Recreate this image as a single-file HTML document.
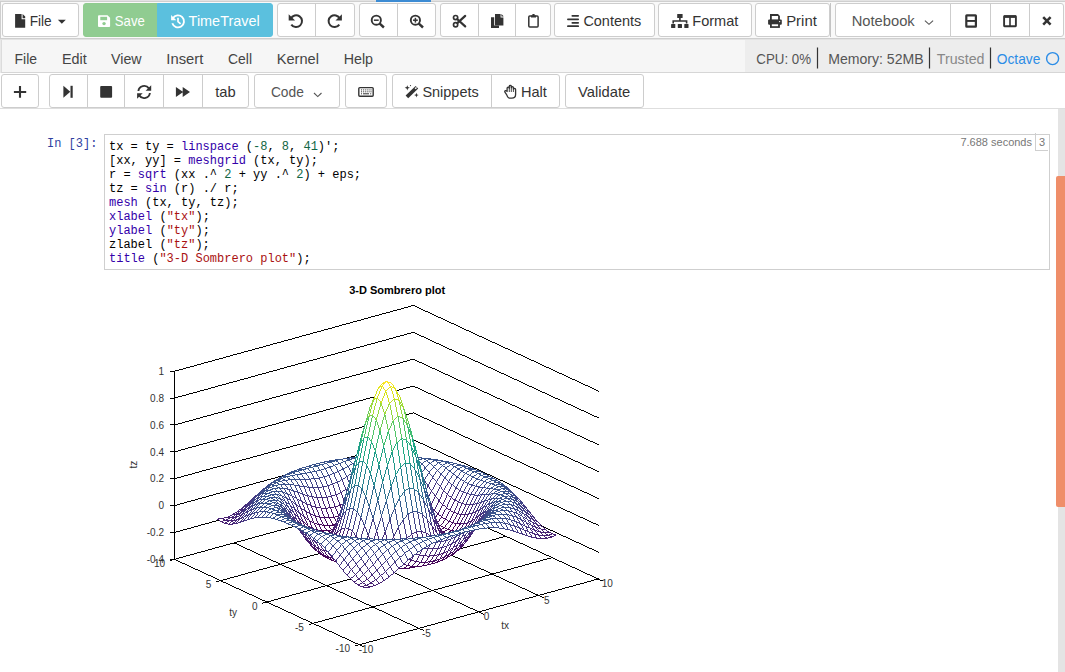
<!DOCTYPE html><html><head><meta charset="utf-8"><style>
*{margin:0;padding:0}
html,body{width:1065px;height:672px;overflow:hidden;background:#fff;position:relative;font-family:"Liberation Sans",sans-serif}
.b{position:absolute;box-sizing:border-box;border:1px solid #cdcdcd;border-radius:3px;background:#fff}
.t{position:absolute;white-space:nowrap;line-height:0}
.prompt{position:absolute;font:12px "Liberation Mono",monospace;color:#303f9f;line-height:16px}
.code{position:absolute;font:12px "Liberation Mono",monospace;color:#000;line-height:14px;white-space:pre}
.code b{font-weight:normal;color:#30a}
.code i{font-style:normal;color:#164}
.code u{text-decoration:none;color:#a11}
</style></head><body><div style="position:absolute;left:0;top:0;width:1065px;height:40px;background:#e3e3e3"></div>
<div style="position:absolute;left:0;top:1px;width:1065px;height:38px;background:#f9f9f9;border-top:1px solid #cfcfcf;border-left:1px solid #cfcfcf;border-bottom:1px solid #cfcfcf;box-sizing:border-box"></div>
<div style="position:absolute;left:376px;top:0;width:55px;height:2px;background:#3c8bd3"></div>
<div class="b" style="left:2px;top:3px;width:77px;height:34px;"></div>
<div class="b" style="left:83px;top:3px;width:75px;height:34px;background:#90cc91;border-color:#8fcb8f;border-radius:3px 0 0 3px"></div>
<div class="b" style="left:157px;top:3px;width:116px;height:34px;background:#5bc0de;border-color:#5bc0de;border-radius:0 3px 3px 0"></div>
<div class="b" style="left:277px;top:3px;width:78px;height:34px;"></div>
<div style="position:absolute;left:315px;top:4px;width:1px;height:32px;background:#ccc"></div>
<div class="b" style="left:359px;top:3px;width:77px;height:34px;"></div>
<div style="position:absolute;left:397px;top:4px;width:1px;height:32px;background:#ccc"></div>
<div class="b" style="left:440px;top:3px;width:111px;height:34px;"></div>
<div style="position:absolute;left:478px;top:4px;width:1px;height:32px;background:#ccc"></div>
<div style="position:absolute;left:515px;top:4px;width:1px;height:32px;background:#ccc"></div>
<div class="b" style="left:554px;top:3px;width:101px;height:34px;"></div>
<div class="b" style="left:658px;top:3px;width:94px;height:34px;"></div>
<div class="b" style="left:755px;top:3px;width:75px;height:34px;"></div>
<div style="position:absolute;left:830px;top:3px;width:1px;height:34px;background:#c4c4c4"></div>
<div class="b" style="left:835px;top:3px;width:116px;height:34px;border-radius:3px 0 0 3px"></div>
<div class="b" style="left:950px;top:3px;width:114px;height:34px;border-radius:0 3px 3px 0"></div>
<div style="position:absolute;left:990px;top:4px;width:1px;height:32px;background:#ccc"></div>
<div style="position:absolute;left:1029px;top:4px;width:1px;height:32px;background:#ccc"></div>
<div style="position:absolute;left:1px;top:40px;width:1064px;height:33px;background:#f6f6f6;border-left:1px solid #dcdcdc;border-bottom:1px solid #d6d6d6;box-sizing:border-box"></div>
<div style="position:absolute;left:0;top:40px;width:1px;height:33px;background:#e9e9e9"></div>
<div style="position:absolute;left:745px;top:40px;width:320px;height:32px;background:#ededed"></div>
<div style="position:absolute;left:0;top:73px;width:1065px;height:36px;background:#fff;border-bottom:1px solid #dedede;box-sizing:border-box"></div>
<div class="b" style="left:1px;top:74px;width:38px;height:34px;"></div>
<div class="b" style="left:49px;top:74px;width:200px;height:34px;"></div>
<div style="position:absolute;left:87px;top:75px;width:1px;height:32px;background:#ccc"></div>
<div style="position:absolute;left:124px;top:75px;width:1px;height:32px;background:#ccc"></div>
<div style="position:absolute;left:163px;top:75px;width:1px;height:32px;background:#ccc"></div>
<div style="position:absolute;left:202px;top:75px;width:1px;height:32px;background:#ccc"></div>
<div class="b" style="left:254px;top:74px;width:86px;height:34px;"></div>
<div class="b" style="left:345px;top:74px;width:42px;height:34px;"></div>
<div class="b" style="left:392px;top:74px;width:168px;height:34px;"></div>
<div style="position:absolute;left:491px;top:75px;width:1px;height:32px;background:#ccc"></div>
<div class="b" style="left:565px;top:74px;width:79px;height:34px;"></div>
<div style="position:absolute;left:1058px;top:109px;width:7px;height:563px;background:#e4e4e4"></div>
<div style="position:absolute;left:1056px;top:176px;width:9px;height:331px;background:#ef8e69;border-radius:2px 0 0 2px"></div>
<div style="position:absolute;left:104px;top:134px;width:946px;height:136px;border:1px solid #cfcfcf;box-sizing:border-box;background:#fff"></div>
<div class="prompt" style="left:47px;top:135.5px">In&nbsp;[3]:</div>
<div class="code" style="left:109px;top:140px"><span>tx = ty = </span><b>linspace</b><span> (</span><i>-8</i><span>, </span><i>8</i><span>, </span><i>41</i><span>)';</span><br><span>[xx, yy] = </span><b>meshgrid</b><span> (tx, ty);</span><br><span>r = </span><b>sqrt</b><span> (xx .^ </span><i>2</i><span> + yy .^ </span><i>2</i><span>) + eps;</span><br><span>tz = </span><b>sin</b><span> (r) ./ r;</span><br><b>mesh</b><span> (tx, ty, tz);</span><br><b>xlabel</b><span> (</span><u>"tx"</u><span>);</span><br><b>ylabel</b><span> (</span><u>"ty"</u><span>);</span><br><span>zlabel (</span><u>"tz"</u><span>);</span><br><b>title</b><span> (</span><u>"3-D Sombrero plot"</u><span>);</span></div>
<div style="position:absolute;left:955px;top:134px;width:77px;text-align:right;font:11px 'Liberation Sans',sans-serif;color:#777;line-height:16px">7.688 seconds</div>
<div style="position:absolute;left:1035px;top:133px;width:13px;height:18px;border:1px solid #cfcfcf;border-top:none;border-right:none;box-sizing:border-box;font:11px 'Liberation Sans',sans-serif;color:#777;line-height:18px;text-align:center">3</div>
<svg style="position:absolute;left:0;top:0" width="1065" height="110" viewBox="0 0 1065 110"><text x="29.70" y="25.90" textLength="22.02" lengthAdjust="spacingAndGlyphs" style="font-family:'Liberation Sans';font-weight:normal;font-size:15px;fill:#333;">File</text><text x="114.80" y="25.90" textLength="29.99" lengthAdjust="spacingAndGlyphs" style="font-family:'Liberation Sans';font-weight:normal;font-size:15px;fill:#fff;">Save</text><text x="188.60" y="25.90" textLength="71.12" lengthAdjust="spacingAndGlyphs" style="font-family:'Liberation Sans';font-weight:normal;font-size:15px;fill:#fff;">TimeTravel</text><text x="583.40" y="25.90" textLength="57.86" lengthAdjust="spacingAndGlyphs" style="font-family:'Liberation Sans';font-weight:normal;font-size:15px;fill:#333;">Contents</text><text x="692.30" y="25.90" textLength="46.03" lengthAdjust="spacingAndGlyphs" style="font-family:'Liberation Sans';font-weight:normal;font-size:15px;fill:#333;">Format</text><text x="786.20" y="25.90" textLength="30.62" lengthAdjust="spacingAndGlyphs" style="font-family:'Liberation Sans';font-weight:normal;font-size:15px;fill:#333;">Print</text><text x="851.70" y="25.90" textLength="63.04" lengthAdjust="spacingAndGlyphs" style="font-family:'Liberation Sans';font-weight:normal;font-size:15px;fill:#555;">Notebook</text><text x="14.60" y="64.00" textLength="22.42" lengthAdjust="spacingAndGlyphs" style="font-family:'Liberation Sans';font-weight:normal;font-size:15px;fill:#444;">File</text><text x="62.00" y="64.00" textLength="24.77" lengthAdjust="spacingAndGlyphs" style="font-family:'Liberation Sans';font-weight:normal;font-size:15px;fill:#444;">Edit</text><text x="111.00" y="64.00" textLength="30.59" lengthAdjust="spacingAndGlyphs" style="font-family:'Liberation Sans';font-weight:normal;font-size:15px;fill:#444;">View</text><text x="166.30" y="64.00" textLength="37.02" lengthAdjust="spacingAndGlyphs" style="font-family:'Liberation Sans';font-weight:normal;font-size:15px;fill:#444;">Insert</text><text x="228.00" y="64.00" textLength="23.97" lengthAdjust="spacingAndGlyphs" style="font-family:'Liberation Sans';font-weight:normal;font-size:15px;fill:#444;">Cell</text><text x="276.70" y="64.00" textLength="42.21" lengthAdjust="spacingAndGlyphs" style="font-family:'Liberation Sans';font-weight:normal;font-size:15px;fill:#444;">Kernel</text><text x="343.70" y="64.00" textLength="29.32" lengthAdjust="spacingAndGlyphs" style="font-family:'Liberation Sans';font-weight:normal;font-size:15px;fill:#444;">Help</text><text x="756.30" y="64.00" textLength="54.73" lengthAdjust="spacingAndGlyphs" style="font-family:'Liberation Sans';font-weight:normal;font-size:15px;fill:#555;">CPU: 0%</text><text x="828.20" y="64.00" textLength="95.49" lengthAdjust="spacingAndGlyphs" style="font-family:'Liberation Sans';font-weight:normal;font-size:15px;fill:#555;">Memory: 52MB</text><text x="936.80" y="64.00" textLength="47.67" lengthAdjust="spacingAndGlyphs" style="font-family:'Liberation Sans';font-weight:normal;font-size:15px;fill:#888;">Trusted</text><text x="996.80" y="64.00" textLength="43.47" lengthAdjust="spacingAndGlyphs" style="font-family:'Liberation Sans';font-weight:normal;font-size:15px;fill:#2b8ce6;">Octave</text><circle cx="1052.6" cy="58.6" r="6" fill="none" stroke="#2b8ce6" stroke-width="1.4"/><rect x="816.9" y="47.5" width="1.2" height="21" fill="#333"/><rect x="928.9" y="47.5" width="1.2" height="21" fill="#333"/><rect x="989.9" y="47.5" width="1.2" height="21" fill="#333"/><text x="215.20" y="96.80" textLength="20.50" lengthAdjust="spacingAndGlyphs" style="font-family:'Liberation Sans';font-weight:normal;font-size:15px;fill:#333;">tab</text><text x="270.90" y="96.80" textLength="32.91" lengthAdjust="spacingAndGlyphs" style="font-family:'Liberation Sans';font-weight:normal;font-size:15px;fill:#555;">Code</text><text x="422.40" y="96.80" textLength="56.32" lengthAdjust="spacingAndGlyphs" style="font-family:'Liberation Sans';font-weight:normal;font-size:15px;fill:#333;">Snippets</text><text x="520.90" y="96.80" textLength="25.88" lengthAdjust="spacingAndGlyphs" style="font-family:'Liberation Sans';font-weight:normal;font-size:15px;fill:#333;">Halt</text><text x="578.10" y="96.80" textLength="52.20" lengthAdjust="spacingAndGlyphs" style="font-family:'Liberation Sans';font-weight:normal;font-size:15px;fill:#333;">Validate</text><path d="M15.1 13.9H21.6V19.3H25.2V27.7H15.1Z M22.6 13.9L25.2 16.5V18.3H22.6Z" fill="#333"/><path d="M57.9 19.8H65.8L61.85 23.8Z" fill="#333"/><path d="M98 16.2Q98 15.2 99 15.2H107.5L110.1 17.8V26.1Q110.1 27.1 109.1 27.1H99Q98 27.1 98 26.1Z" fill="#fff"/><rect x="100.3" y="16.8" width="6.8" height="3.4" fill="#90cc91"/><circle cx="104.05" cy="23.6" r="1.7" fill="#90cc91"/><path d="M172.9 18.2A6 6 0 1 1 172.3 23.3" fill="none" stroke="#fff" stroke-width="1.9"/><path d="M171.1 14.9V20.3H176.3Z" fill="#fff"/><path d="M178 17.8V21.6L180.6 23.8" fill="none" stroke="#fff" stroke-width="1.7"/><path d="M290.8 18.6A5.9 5.9 0 1 1 291.3 24.6" fill="none" stroke="#333" stroke-width="2"/><path d="M288.7 14.2V20.6H295.1Z" fill="#333"/><path d="M339.8 18.6A5.9 5.9 0 1 0 339.3 24.6" fill="none" stroke="#333" stroke-width="2"/><path d="M341.9 14.2V20.6H335.5Z" fill="#333"/><circle cx="376.3" cy="20.2" r="4.6" fill="none" stroke="#333" stroke-width="1.9"/><path d="M379.5 23.4L383.90000000000003 27.5" stroke="#333" stroke-width="2.4"/><path d="M373.90000000000003 20.2H378.7" stroke="#333" stroke-width="1.5"/><circle cx="415.4" cy="20.2" r="4.6" fill="none" stroke="#333" stroke-width="1.9"/><path d="M418.59999999999997 23.4L423.0 27.5" stroke="#333" stroke-width="2.4"/><path d="M413.0 20.2H417.79999999999995" stroke="#333" stroke-width="1.5"/><path d="M415.4 17.8V22.6" stroke="#333" stroke-width="1.5"/><circle cx="455.6" cy="17.6" r="2.1" fill="none" stroke="#333" stroke-width="1.7"/><circle cx="455.6" cy="24.7" r="2.1" fill="none" stroke="#333" stroke-width="1.7"/><path d="M457.3 19.2L465.2 26.4M457.3 23.1L465.2 15.9" stroke="#333" stroke-width="2.2" stroke-linecap="round"/><path d="M491 17.2H494.2V25.6H499V27.9H491Z" fill="#333"/><path d="M495 14.1H500.6V17.4H503.4V25.5H495Z M501.4 14.1L503.4 16.1V16.6H501.4Z" fill="#333"/><rect x="528.8" y="16.1" width="9.3" height="11" rx="1" fill="none" stroke="#333" stroke-width="1.5"/><path d="M531 15.4H536V17.6H531Z M532.4 14.1H534.6V15.6H532.4Z" fill="#333"/><path d="M572.3 15.8H578.2" stroke="#333" stroke-width="1.7" stroke-linecap="round"/><path d="M567.9 19.3H578.2" stroke="#333" stroke-width="1.7" stroke-linecap="round"/><path d="M572.3 22.8H578.2" stroke="#333" stroke-width="1.7" stroke-linecap="round"/><path d="M567.9 26.2H578.2" stroke="#333" stroke-width="1.7" stroke-linecap="round"/><rect x="677.2" y="14" width="5.4" height="3.9" rx="0.5" fill="#333"/><path d="M679.9 17.5V21.2M673.2 23.5V21H686.6V23.5" fill="none" stroke="#333" stroke-width="1.6"/><rect x="671.1" y="24" width="4.2" height="3.9" rx="0.5" fill="#333"/><rect x="677.8" y="24" width="4.2" height="3.9" rx="0.5" fill="#333"/><rect x="684.3" y="24" width="4.2" height="3.9" rx="0.5" fill="#333"/><path d="M770 14H778L779.9 15.9V20H770Z" fill="#333"/><rect x="771.8" y="16" width="6.3" height="3.8" fill="#fff"/><rect x="768.1" y="19.5" width="13.7" height="5.2" rx="1" fill="#333"/><rect x="770" y="23.2" width="9.9" height="4.7" fill="#333"/><rect x="771.8" y="24.3" width="6.3" height="1.9" fill="#fff"/><circle cx="779.6" cy="21.6" r="0.7" fill="#fff"/><path d="M924.9 20.6L929 24.3L933.1 20.6" fill="none" stroke="#555" stroke-width="1.1"/><rect x="966.3" y="15.3" width="9.6" height="11.4" rx="0.4" fill="none" stroke="#333" stroke-width="2.2"/><path d="M966 20.95H976" stroke="#333" stroke-width="1.9"/><rect x="1004.1" y="16.1" width="11.8" height="10.1" rx="0.4" fill="none" stroke="#333" stroke-width="1.9"/><path d="M1004 16.6H1016" stroke="#333" stroke-width="2.6"/><path d="M1010 16V27" stroke="#333" stroke-width="1.6"/><path d="M1043.2 17.1L1050.6 24.7M1050.6 17.1L1043.2 24.7" stroke="#333" stroke-width="2.5"/><path d="M20 86.1V97.8M13.9 91.95H26.2" stroke="#333" stroke-width="2.1"/><path d="M63.4 85.8L70.3 91.8L63.4 97.8Z" fill="#333"/><rect x="70.5" y="85.8" width="2.2" height="12" fill="#333"/><rect x="100.2" y="86.1" width="11.9" height="11.7" rx="1" fill="#333"/><path d="M138.4 91A5.8 5.8 0 0 1 148.9 88.4M149.9 93A5.8 5.8 0 0 1 139.4 95.6" fill="none" stroke="#333" stroke-width="1.9"/><path d="M151.2 85.2V90.8H145.6Z M137.1 98.8V93.2H142.7Z" fill="#333"/><path d="M175.9 87L183.2 92.05L175.9 97.1Z M182.7 87L190 92.05L182.7 97.1Z" fill="#333"/><rect x="358.8" y="87.6" width="14.4" height="8.6" rx="1" fill="none" stroke="#333" stroke-width="1.4"/><rect x="361.0" y="89.4" width="1" height="1" fill="#333"/><rect x="362.9" y="89.4" width="1" height="1" fill="#333"/><rect x="364.8" y="89.4" width="1" height="1" fill="#333"/><rect x="366.7" y="89.4" width="1" height="1" fill="#333"/><rect x="368.6" y="89.4" width="1" height="1" fill="#333"/><rect x="370.5" y="89.4" width="1" height="1" fill="#333"/><rect x="361.0" y="91.3" width="1" height="1" fill="#333"/><rect x="362.9" y="91.3" width="1" height="1" fill="#333"/><rect x="364.8" y="91.3" width="1" height="1" fill="#333"/><rect x="366.7" y="91.3" width="1" height="1" fill="#333"/><rect x="368.6" y="91.3" width="1" height="1" fill="#333"/><rect x="370.5" y="91.3" width="1" height="1" fill="#333"/><rect x="361" y="93.3" width="1" height="1" fill="#333"/><rect x="363" y="93.3" width="6" height="1" fill="#333"/><rect x="370.2" y="93.3" width="1" height="1" fill="#333"/><path d="M405.6 95.6L415.6 85.9L418.2 88.4L408.2 98.2Z" fill="#333"/><path d="M414.6 88.3L416 86.9L417 87.9L415.6 89.3Z" fill="#fff"/><path d="M407.3 85.2L408 87.1L409.9 87.8L408 88.5L407.3 90.4L406.6 88.5L404.7 87.8L406.6 87.1Z" fill="#333"/><path d="M416.4 92.8L417 94.5L418.7 95.1L417 95.7L416.4 97.4L415.8 95.7L414.1 95.1L415.8 94.5Z" fill="#333"/><circle cx="410.5" cy="85.6" r="0.6" fill="#333"/><path d="M506.6 94.6L504.9 92.1Q504.4 91 505.6 90.6Q506.4 90.5 507.1 91.5V88.2Q507.1 87.2 508.2 87.2Q509.3 87.2 509.3 88.2V86.3Q509.3 85.5 510.3 85.5Q511.3 85.5 511.3 86.3V87.6Q511.4 86.7 512.4 86.7Q513.4 86.7 513.4 87.8V89.1Q513.6 88.4 514.5 88.4Q515.6 88.5 515.6 89.6V94.5Q515.6 98.2 511.8 98.2H509.6Q507.9 98.2 506.6 94.6Z" fill="none" stroke="#333" stroke-width="1.3" stroke-linejoin="round"/><path d="M509.3 88V92M511.3 87.4V92M513.4 88.6V92" stroke="#333" stroke-width="0.9"/><path d="M314 93L317.75 96.6L321.5 93" fill="none" stroke="#555" stroke-width="1.1"/></svg>
<svg style="position:absolute;left:0;top:0" width="1065" height="672" viewBox="0 0 1065 672"><g shape-rendering="crispEdges"><path fill="#000" d="M411 305h4v1h-4zM408 306h3v1h-3zM415 306h2v1h-2zM404 307h4v1h-4zM417 307h2v1h-2zM401 308h3v1h-3zM419 308h2v1h-2zM397 309h4v1h-4zM421 309h2v1h-2zM393 310h4v1h-4zM423 310h2v1h-2zM390 311h3v1h-3zM425 311h3v1h-3zM386 312h4v1h-4zM428 312h2v1h-2zM382 313h4v1h-4zM430 313h2v1h-2zM379 314h3v1h-3zM432 314h2v1h-2zM375 315h4v1h-4zM434 315h2v1h-2zM371 316h4v1h-4zM436 316h2v1h-2zM368 317h3v1h-3zM438 317h3v1h-3zM364 318h4v1h-4zM441 318h2v1h-2zM361 319h3v1h-3zM443 319h2v1h-2zM357 320h4v1h-4zM445 320h2v1h-2zM353 321h4v1h-4zM447 321h2v1h-2zM350 322h3v1h-3zM449 322h2v1h-2zM346 323h4v1h-4zM451 323h3v1h-3zM342 324h4v1h-4zM454 324h2v1h-2zM339 325h3v1h-3zM456 325h2v1h-2zM335 326h4v1h-4zM458 326h2v1h-2zM332 327h3v1h-3zM460 327h2v1h-2zM328 328h4v1h-4zM462 328h2v1h-2zM324 329h4v1h-4zM464 329h2v1h-2zM321 330h3v1h-3zM466 330h3v1h-3zM317 331h4v1h-4zM469 331h2v1h-2zM313 332h4v1h-4zM411 332h4v1h-4zM471 332h2v1h-2zM310 333h3v1h-3zM407 333h4v1h-4zM415 333h2v1h-2zM473 333h2v1h-2zM306 334h4v1h-4zM404 334h3v1h-3zM417 334h2v1h-2zM475 334h2v1h-2zM302 335h4v1h-4zM400 335h4v1h-4zM419 335h2v1h-2zM477 335h2v1h-2zM299 336h3v1h-3zM396 336h4v1h-4zM421 336h3v1h-3zM479 336h3v1h-3zM295 337h4v1h-4zM393 337h3v1h-3zM424 337h2v1h-2zM482 337h2v1h-2zM292 338h3v1h-3zM389 338h4v1h-4zM426 338h2v1h-2zM484 338h2v1h-2zM288 339h4v1h-4zM386 339h3v1h-3zM428 339h2v1h-2zM486 339h2v1h-2zM284 340h4v1h-4zM382 340h4v1h-4zM430 340h2v1h-2zM488 340h2v1h-2zM281 341h3v1h-3zM378 341h4v1h-4zM432 341h2v1h-2zM490 341h2v1h-2zM277 342h4v1h-4zM375 342h3v1h-3zM434 342h2v1h-2zM492 342h3v1h-3zM273 343h4v1h-4zM371 343h4v1h-4zM436 343h3v1h-3zM495 343h2v1h-2zM270 344h3v1h-3zM367 344h4v1h-4zM439 344h2v1h-2zM497 344h2v1h-2zM266 345h4v1h-4zM364 345h3v1h-3zM441 345h2v1h-2zM499 345h2v1h-2zM263 346h3v1h-3zM360 346h4v1h-4zM443 346h2v1h-2zM501 346h2v1h-2zM259 347h4v1h-4zM356 347h4v1h-4zM445 347h2v1h-2zM503 347h2v1h-2zM255 348h4v1h-4zM353 348h3v1h-3zM447 348h2v1h-2zM505 348h3v1h-3zM252 349h3v1h-3zM349 349h4v1h-4zM449 349h3v1h-3zM508 349h2v1h-2zM248 350h4v1h-4zM346 350h3v1h-3zM452 350h2v1h-2zM510 350h2v1h-2zM244 351h4v1h-4zM342 351h4v1h-4zM454 351h2v1h-2zM512 351h2v1h-2zM241 352h3v1h-3zM338 352h4v1h-4zM456 352h2v1h-2zM514 352h2v1h-2zM237 353h4v1h-4zM335 353h3v1h-3zM458 353h2v1h-2zM516 353h2v1h-2zM233 354h4v1h-4zM331 354h4v1h-4zM460 354h2v1h-2zM518 354h3v1h-3zM230 355h3v1h-3zM327 355h4v1h-4zM462 355h3v1h-3zM521 355h2v1h-2zM226 356h4v1h-4zM324 356h3v1h-3zM465 356h2v1h-2zM523 356h2v1h-2zM223 357h3v1h-3zM320 357h4v1h-4zM467 357h2v1h-2zM525 357h2v1h-2zM219 358h4v1h-4zM317 358h3v1h-3zM469 358h2v1h-2zM527 358h2v1h-2zM215 359h4v1h-4zM313 359h4v1h-4zM410 359h5v1h-5zM471 359h2v1h-2zM529 359h2v1h-2zM212 360h3v1h-3zM309 360h4v1h-4zM407 360h3v1h-3zM415 360h2v1h-2zM473 360h2v1h-2zM531 360h3v1h-3zM208 361h4v1h-4zM306 361h3v1h-3zM403 361h4v1h-4zM417 361h2v1h-2zM475 361h3v1h-3zM534 361h2v1h-2zM204 362h4v1h-4zM302 362h4v1h-4zM400 362h3v1h-3zM419 362h3v1h-3zM478 362h2v1h-2zM536 362h2v1h-2zM201 363h3v1h-3zM298 363h4v1h-4zM396 363h4v1h-4zM422 363h2v1h-2zM480 363h2v1h-2zM538 363h2v1h-2zM197 364h4v1h-4zM295 364h3v1h-3zM392 364h4v1h-4zM424 364h2v1h-2zM482 364h2v1h-2zM540 364h2v1h-2zM194 365h3v1h-3zM291 365h4v1h-4zM389 365h3v1h-3zM426 365h2v1h-2zM484 365h2v1h-2zM542 365h2v1h-2zM190 366h4v1h-4zM287 366h4v1h-4zM385 366h4v1h-4zM428 366h2v1h-2zM486 366h2v1h-2zM544 366h2v1h-2zM186 367h4v1h-4zM284 367h3v1h-3zM381 367h4v1h-4zM430 367h2v1h-2zM488 367h3v1h-3zM546 367h3v1h-3zM183 368h3v1h-3zM280 368h4v1h-4zM378 368h3v1h-3zM432 368h3v1h-3zM491 368h2v1h-2zM549 368h2v1h-2zM179 369h4v1h-4zM277 369h3v1h-3zM374 369h4v1h-4zM435 369h2v1h-2zM493 369h2v1h-2zM551 369h2v1h-2zM175 370h4v1h-4zM273 370h4v1h-4zM371 370h3v1h-3zM437 370h2v1h-2zM495 370h2v1h-2zM553 370h2v1h-2zM170 371h5v1h-5zM269 371h4v1h-4zM367 371h4v1h-4zM439 371h2v1h-2zM497 371h2v1h-2zM555 371h2v1h-2zM174 372h1v1h-1zM266 372h3v1h-3zM363 372h4v1h-4zM441 372h2v1h-2zM499 372h2v1h-2zM557 372h2v1h-2zM174 373h1v1h-1zM262 373h4v1h-4zM360 373h3v1h-3zM443 373h2v1h-2zM501 373h3v1h-3zM559 373h3v1h-3zM174 374h1v1h-1zM258 374h4v1h-4zM356 374h4v1h-4zM445 374h3v1h-3zM504 374h2v1h-2zM562 374h2v1h-2zM174 375h1v1h-1zM255 375h3v1h-3zM352 375h4v1h-4zM448 375h2v1h-2zM506 375h2v1h-2zM564 375h2v1h-2zM174 376h1v1h-1zM251 376h4v1h-4zM349 376h3v1h-3zM450 376h2v1h-2zM508 376h2v1h-2zM566 376h2v1h-2zM174 377h1v1h-1zM248 377h3v1h-3zM345 377h4v1h-4zM452 377h2v1h-2zM510 377h2v1h-2zM568 377h2v1h-2zM174 378h1v1h-1zM244 378h4v1h-4zM341 378h4v1h-4zM454 378h2v1h-2zM512 378h2v1h-2zM570 378h2v1h-2zM174 379h1v1h-1zM240 379h4v1h-4zM338 379h3v1h-3zM456 379h2v1h-2zM514 379h3v1h-3zM572 379h3v1h-3zM174 380h1v1h-1zM237 380h3v1h-3zM334 380h4v1h-4zM458 380h3v1h-3zM517 380h2v1h-2zM575 380h2v1h-2zM174 381h1v1h-1zM233 381h4v1h-4zM331 381h3v1h-3zM461 381h2v1h-2zM519 381h2v1h-2zM577 381h2v1h-2zM174 382h1v1h-1zM229 382h4v1h-4zM327 382h4v1h-4zM463 382h2v1h-2zM521 382h2v1h-2zM579 382h2v1h-2zM174 383h1v1h-1zM226 383h3v1h-3zM323 383h4v1h-4zM465 383h2v1h-2zM523 383h2v1h-2zM581 383h2v1h-2zM174 384h1v1h-1zM222 384h4v1h-4zM320 384h3v1h-3zM467 384h2v1h-2zM525 384h2v1h-2zM583 384h2v1h-2zM174 385h1v1h-1zM218 385h4v1h-4zM316 385h4v1h-4zM469 385h2v1h-2zM527 385h2v1h-2zM585 385h3v1h-3zM174 386h1v1h-1zM215 386h3v1h-3zM312 386h4v1h-4zM410 386h5v1h-5zM471 386h3v1h-3zM529 386h3v1h-3zM588 386h2v1h-2zM174 387h1v1h-1zM211 387h4v1h-4zM309 387h3v1h-3zM406 387h4v1h-4zM415 387h3v1h-3zM474 387h2v1h-2zM532 387h2v1h-2zM590 387h2v1h-2zM174 388h1v1h-1zM208 388h3v1h-3zM305 388h4v1h-4zM403 388h3v1h-3zM418 388h2v1h-2zM476 388h2v1h-2zM534 388h2v1h-2zM592 388h2v1h-2zM174 389h1v1h-1zM204 389h4v1h-4zM301 389h4v1h-4zM399 389h4v1h-4zM420 389h2v1h-2zM478 389h2v1h-2zM536 389h2v1h-2zM594 389h2v1h-2zM174 390h1v1h-1zM200 390h4v1h-4zM298 390h3v1h-3zM397 390h2v1h-2zM422 390h2v1h-2zM480 390h2v1h-2zM538 390h2v1h-2zM596 390h2v1h-2zM174 391h1v1h-1zM197 391h3v1h-3zM294 391h4v1h-4zM424 391h2v1h-2zM482 391h2v1h-2zM540 391h2v1h-2zM598 391h1v1h-1zM174 392h1v1h-1zM193 392h4v1h-4zM291 392h3v1h-3zM426 392h2v1h-2zM484 392h3v1h-3zM542 392h3v1h-3zM174 393h1v1h-1zM189 393h4v1h-4zM287 393h4v1h-4zM428 393h3v1h-3zM487 393h2v1h-2zM545 393h2v1h-2zM174 394h1v1h-1zM186 394h3v1h-3zM283 394h4v1h-4zM431 394h2v1h-2zM489 394h2v1h-2zM547 394h2v1h-2zM174 395h1v1h-1zM182 395h4v1h-4zM280 395h3v1h-3zM433 395h2v1h-2zM491 395h2v1h-2zM549 395h2v1h-2zM174 396h1v1h-1zM178 396h4v1h-4zM276 396h4v1h-4zM435 396h2v1h-2zM493 396h2v1h-2zM551 396h2v1h-2zM174 397h4v1h-4zM272 397h4v1h-4zM370 397h4v1h-4zM437 397h2v1h-2zM495 397h2v1h-2zM553 397h2v1h-2zM170 398h5v1h-5zM269 398h3v1h-3zM366 398h4v1h-4zM439 398h2v1h-2zM497 398h3v1h-3zM555 398h3v1h-3zM174 399h1v1h-1zM265 399h4v1h-4zM363 399h3v1h-3zM441 399h3v1h-3zM500 399h2v1h-2zM558 399h2v1h-2zM174 400h1v1h-1zM262 400h3v1h-3zM359 400h4v1h-4zM444 400h2v1h-2zM502 400h2v1h-2zM560 400h2v1h-2zM174 401h1v1h-1zM258 401h4v1h-4zM355 401h4v1h-4zM446 401h2v1h-2zM504 401h2v1h-2zM562 401h2v1h-2zM174 402h1v1h-1zM254 402h4v1h-4zM352 402h3v1h-3zM448 402h2v1h-2zM506 402h2v1h-2zM564 402h2v1h-2zM174 403h1v1h-1zM251 403h3v1h-3zM348 403h4v1h-4zM450 403h2v1h-2zM508 403h2v1h-2zM566 403h2v1h-2zM174 404h1v1h-1zM247 404h4v1h-4zM345 404h3v1h-3zM452 404h2v1h-2zM510 404h2v1h-2zM568 404h3v1h-3zM174 405h1v1h-1zM243 405h4v1h-4zM341 405h4v1h-4zM454 405h3v1h-3zM512 405h3v1h-3zM571 405h2v1h-2zM174 406h1v1h-1zM240 406h3v1h-3zM337 406h4v1h-4zM457 406h2v1h-2zM515 406h2v1h-2zM573 406h2v1h-2zM174 407h1v1h-1zM236 407h4v1h-4zM334 407h3v1h-3zM459 407h2v1h-2zM517 407h2v1h-2zM575 407h2v1h-2zM174 408h1v1h-1zM232 408h4v1h-4zM330 408h4v1h-4zM461 408h2v1h-2zM519 408h2v1h-2zM577 408h2v1h-2zM174 409h1v1h-1zM229 409h3v1h-3zM326 409h4v1h-4zM463 409h2v1h-2zM521 409h2v1h-2zM579 409h2v1h-2zM174 410h1v1h-1zM225 410h4v1h-4zM323 410h3v1h-3zM465 410h2v1h-2zM523 410h2v1h-2zM581 410h3v1h-3zM174 411h1v1h-1zM222 411h3v1h-3zM319 411h4v1h-4zM467 411h3v1h-3zM525 411h3v1h-3zM584 411h2v1h-2zM174 412h1v1h-1zM218 412h4v1h-4zM316 412h3v1h-3zM413 412h1v1h-1zM470 412h2v1h-2zM528 412h2v1h-2zM586 412h2v1h-2zM174 413h1v1h-1zM214 413h4v1h-4zM312 413h4v1h-4zM409 413h4v1h-4zM414 413h2v1h-2zM472 413h2v1h-2zM530 413h2v1h-2zM588 413h2v1h-2zM174 414h1v1h-1zM211 414h3v1h-3zM308 414h4v1h-4zM406 414h3v1h-3zM416 414h2v1h-2zM474 414h2v1h-2zM532 414h2v1h-2zM590 414h2v1h-2zM174 415h1v1h-1zM207 415h4v1h-4zM305 415h3v1h-3zM418 415h2v1h-2zM476 415h2v1h-2zM534 415h2v1h-2zM592 415h2v1h-2zM174 416h1v1h-1zM203 416h4v1h-4zM301 416h4v1h-4zM420 416h2v1h-2zM478 416h2v1h-2zM536 416h2v1h-2zM594 416h3v1h-3zM174 417h1v1h-1zM200 417h3v1h-3zM297 417h4v1h-4zM422 417h2v1h-2zM480 417h3v1h-3zM538 417h3v1h-3zM597 417h2v1h-2zM174 418h1v1h-1zM196 418h4v1h-4zM294 418h3v1h-3zM424 418h3v1h-3zM483 418h2v1h-2zM541 418h2v1h-2zM174 419h1v1h-1zM193 419h3v1h-3zM290 419h4v1h-4zM427 419h2v1h-2zM485 419h2v1h-2zM543 419h2v1h-2zM174 420h1v1h-1zM189 420h4v1h-4zM286 420h4v1h-4zM429 420h2v1h-2zM487 420h2v1h-2zM545 420h2v1h-2zM174 421h1v1h-1zM185 421h4v1h-4zM283 421h3v1h-3zM431 421h2v1h-2zM489 421h2v1h-2zM547 421h2v1h-2zM174 422h1v1h-1zM182 422h3v1h-3zM279 422h4v1h-4zM433 422h2v1h-2zM491 422h2v1h-2zM549 422h2v1h-2zM174 423h1v1h-1zM178 423h4v1h-4zM276 423h3v1h-3zM435 423h2v1h-2zM493 423h2v1h-2zM551 423h3v1h-3zM170 424h8v1h-8zM272 424h4v1h-4zM437 424h3v1h-3zM495 424h3v1h-3zM554 424h2v1h-2zM174 425h1v1h-1zM268 425h4v1h-4zM440 425h2v1h-2zM498 425h2v1h-2zM556 425h2v1h-2zM174 426h1v1h-1zM265 426h3v1h-3zM362 426h2v1h-2zM442 426h2v1h-2zM500 426h2v1h-2zM558 426h2v1h-2zM174 427h1v1h-1zM261 427h4v1h-4zM359 427h3v1h-3zM444 427h2v1h-2zM502 427h2v1h-2zM560 427h2v1h-2zM174 428h1v1h-1zM257 428h4v1h-4zM355 428h4v1h-4zM446 428h2v1h-2zM504 428h2v1h-2zM562 428h2v1h-2zM174 429h1v1h-1zM254 429h3v1h-3zM351 429h4v1h-4zM448 429h2v1h-2zM506 429h2v1h-2zM564 429h3v1h-3zM174 430h1v1h-1zM250 430h4v1h-4zM348 430h3v1h-3zM450 430h3v1h-3zM508 430h3v1h-3zM567 430h2v1h-2zM174 431h1v1h-1zM247 431h3v1h-3zM344 431h4v1h-4zM453 431h2v1h-2zM511 431h2v1h-2zM569 431h2v1h-2zM174 432h1v1h-1zM243 432h4v1h-4zM340 432h4v1h-4zM455 432h2v1h-2zM513 432h2v1h-2zM571 432h2v1h-2zM174 433h1v1h-1zM239 433h4v1h-4zM337 433h3v1h-3zM457 433h2v1h-2zM515 433h2v1h-2zM573 433h2v1h-2zM174 434h1v1h-1zM236 434h3v1h-3zM333 434h4v1h-4zM459 434h2v1h-2zM517 434h2v1h-2zM575 434h2v1h-2zM174 435h1v1h-1zM232 435h4v1h-4zM330 435h3v1h-3zM461 435h2v1h-2zM519 435h2v1h-2zM577 435h3v1h-3zM174 436h1v1h-1zM228 436h4v1h-4zM326 436h4v1h-4zM463 436h2v1h-2zM521 436h3v1h-3zM580 436h2v1h-2zM174 437h1v1h-1zM225 437h3v1h-3zM322 437h4v1h-4zM465 437h3v1h-3zM524 437h2v1h-2zM582 437h2v1h-2zM174 438h1v1h-1zM221 438h4v1h-4zM319 438h3v1h-3zM468 438h2v1h-2zM526 438h2v1h-2zM584 438h2v1h-2zM174 439h1v1h-1zM217 439h4v1h-4zM315 439h4v1h-4zM470 439h2v1h-2zM528 439h2v1h-2zM586 439h2v1h-2zM174 440h1v1h-1zM214 440h3v1h-3zM311 440h4v1h-4zM414 440h2v1h-2zM472 440h2v1h-2zM530 440h2v1h-2zM588 440h2v1h-2zM174 441h1v1h-1zM210 441h4v1h-4zM308 441h3v1h-3zM416 441h2v1h-2zM474 441h2v1h-2zM532 441h2v1h-2zM590 441h3v1h-3zM174 442h1v1h-1zM207 442h3v1h-3zM304 442h4v1h-4zM418 442h2v1h-2zM476 442h2v1h-2zM534 442h3v1h-3zM593 442h2v1h-2zM174 443h1v1h-1zM203 443h4v1h-4zM301 443h3v1h-3zM420 443h3v1h-3zM478 443h3v1h-3zM537 443h2v1h-2zM595 443h2v1h-2zM174 444h1v1h-1zM199 444h4v1h-4zM297 444h4v1h-4zM423 444h2v1h-2zM481 444h2v1h-2zM539 444h2v1h-2zM597 444h2v1h-2zM174 445h1v1h-1zM196 445h3v1h-3zM293 445h4v1h-4zM425 445h2v1h-2zM483 445h2v1h-2zM541 445h2v1h-2zM174 446h1v1h-1zM192 446h4v1h-4zM290 446h3v1h-3zM427 446h2v1h-2zM485 446h2v1h-2zM543 446h2v1h-2zM174 447h1v1h-1zM188 447h4v1h-4zM286 447h4v1h-4zM429 447h2v1h-2zM487 447h2v1h-2zM545 447h2v1h-2zM174 448h1v1h-1zM185 448h3v1h-3zM282 448h4v1h-4zM431 448h2v1h-2zM489 448h2v1h-2zM547 448h3v1h-3zM174 449h1v1h-1zM181 449h4v1h-4zM279 449h3v1h-3zM433 449h3v1h-3zM491 449h3v1h-3zM550 449h2v1h-2zM174 450h1v1h-1zM178 450h3v1h-3zM275 450h4v1h-4zM436 450h2v1h-2zM494 450h2v1h-2zM552 450h2v1h-2zM170 451h8v1h-8zM271 451h4v1h-4zM438 451h2v1h-2zM496 451h2v1h-2zM554 451h2v1h-2zM174 452h1v1h-1zM268 452h3v1h-3zM440 452h2v1h-2zM498 452h2v1h-2zM556 452h2v1h-2zM174 453h1v1h-1zM264 453h4v1h-4zM442 453h2v1h-2zM500 453h2v1h-2zM558 453h2v1h-2zM174 454h1v1h-1zM261 454h3v1h-3zM444 454h2v1h-2zM502 454h2v1h-2zM560 454h3v1h-3zM174 455h1v1h-1zM257 455h4v1h-4zM355 455h1v1h-1zM446 455h2v1h-2zM504 455h3v1h-3zM563 455h2v1h-2zM174 456h1v1h-1zM253 456h4v1h-4zM351 456h4v1h-4zM448 456h3v1h-3zM507 456h2v1h-2zM565 456h2v1h-2zM174 457h1v1h-1zM250 457h3v1h-3zM347 457h2v1h-2zM451 457h2v1h-2zM509 457h2v1h-2zM567 457h2v1h-2zM174 458h1v1h-1zM246 458h4v1h-4zM453 458h2v1h-2zM511 458h2v1h-2zM569 458h2v1h-2zM174 459h1v1h-1zM242 459h4v1h-4zM455 459h2v1h-2zM513 459h2v1h-2zM571 459h2v1h-2zM174 460h1v1h-1zM239 460h3v1h-3zM457 460h2v1h-2zM515 460h2v1h-2zM573 460h2v1h-2zM174 461h1v1h-1zM235 461h4v1h-4zM459 461h2v1h-2zM517 461h3v1h-3zM575 461h3v1h-3zM174 462h1v1h-1zM231 462h4v1h-4zM461 462h3v1h-3zM520 462h2v1h-2zM578 462h2v1h-2zM174 463h1v1h-1zM228 463h3v1h-3zM464 463h2v1h-2zM522 463h2v1h-2zM580 463h2v1h-2zM174 464h1v1h-1zM224 464h4v1h-4zM466 464h2v1h-2zM524 464h2v1h-2zM582 464h2v1h-2zM174 465h1v1h-1zM221 465h3v1h-3zM468 465h2v1h-2zM526 465h2v1h-2zM584 465h2v1h-2zM174 466h1v1h-1zM217 466h4v1h-4zM470 466h2v1h-2zM528 466h2v1h-2zM586 466h2v1h-2zM174 467h1v1h-1zM213 467h4v1h-4zM472 467h2v1h-2zM530 467h3v1h-3zM588 467h3v1h-3zM174 468h1v1h-1zM210 468h3v1h-3zM474 468h3v1h-3zM533 468h2v1h-2zM591 468h2v1h-2zM174 469h1v1h-1zM206 469h4v1h-4zM477 469h2v1h-2zM535 469h2v1h-2zM593 469h2v1h-2zM174 470h1v1h-1zM202 470h4v1h-4zM479 470h2v1h-2zM537 470h2v1h-2zM595 470h2v1h-2zM174 471h1v1h-1zM199 471h3v1h-3zM481 471h2v1h-2zM539 471h2v1h-2zM597 471h2v1h-2zM174 472h1v1h-1zM195 472h4v1h-4zM483 472h2v1h-2zM541 472h2v1h-2zM174 473h1v1h-1zM192 473h3v1h-3zM485 473h2v1h-2zM543 473h3v1h-3zM174 474h1v1h-1zM188 474h4v1h-4zM487 474h3v1h-3zM546 474h2v1h-2zM174 475h1v1h-1zM184 475h4v1h-4zM282 475h1v1h-1zM490 475h2v1h-2zM548 475h2v1h-2zM174 476h1v1h-1zM181 476h3v1h-3zM278 476h3v1h-3zM492 476h2v1h-2zM550 476h2v1h-2zM174 477h1v1h-1zM177 477h4v1h-4zM275 477h3v1h-3zM494 477h2v1h-2zM552 477h2v1h-2zM170 478h7v1h-7zM271 478h4v1h-4zM496 478h2v1h-2zM554 478h2v1h-2zM174 479h1v1h-1zM267 479h4v1h-4zM498 479h2v1h-2zM556 479h2v1h-2zM174 480h1v1h-1zM264 480h3v1h-3zM500 480h3v1h-3zM558 480h3v1h-3zM174 481h1v1h-1zM260 481h4v1h-4zM503 481h2v1h-2zM561 481h2v1h-2zM174 482h1v1h-1zM256 482h4v1h-4zM505 482h2v1h-2zM563 482h2v1h-2zM174 483h1v1h-1zM253 483h3v1h-3zM507 483h2v1h-2zM565 483h2v1h-2zM174 484h1v1h-1zM249 484h4v1h-4zM509 484h2v1h-2zM567 484h2v1h-2zM174 485h1v1h-1zM246 485h3v1h-3zM511 485h2v1h-2zM569 485h2v1h-2zM174 486h1v1h-1zM242 486h4v1h-4zM513 486h3v1h-3zM571 486h3v1h-3zM174 487h1v1h-1zM238 487h4v1h-4zM516 487h2v1h-2zM574 487h2v1h-2zM174 488h1v1h-1zM235 488h3v1h-3zM518 488h2v1h-2zM576 488h2v1h-2zM174 489h1v1h-1zM231 489h4v1h-4zM520 489h2v1h-2zM578 489h2v1h-2zM174 490h1v1h-1zM227 490h4v1h-4zM522 490h2v1h-2zM580 490h2v1h-2zM174 491h1v1h-1zM224 491h3v1h-3zM524 491h2v1h-2zM582 491h2v1h-2zM174 492h1v1h-1zM220 492h4v1h-4zM526 492h3v1h-3zM584 492h3v1h-3zM174 493h1v1h-1zM216 493h4v1h-4zM529 493h2v1h-2zM587 493h2v1h-2zM174 494h1v1h-1zM213 494h3v1h-3zM531 494h2v1h-2zM589 494h2v1h-2zM174 495h1v1h-1zM209 495h4v1h-4zM533 495h2v1h-2zM591 495h2v1h-2zM174 496h1v1h-1zM206 496h3v1h-3zM535 496h2v1h-2zM593 496h2v1h-2zM174 497h1v1h-1zM202 497h4v1h-4zM537 497h2v1h-2zM595 497h2v1h-2zM174 498h1v1h-1zM198 498h4v1h-4zM539 498h2v1h-2zM597 498h2v1h-2zM174 499h1v1h-1zM195 499h3v1h-3zM541 499h3v1h-3zM174 500h1v1h-1zM191 500h4v1h-4zM544 500h2v1h-2zM174 501h1v1h-1zM187 501h4v1h-4zM546 501h2v1h-2zM174 502h1v1h-1zM184 502h3v1h-3zM548 502h2v1h-2zM174 503h1v1h-1zM180 503h4v1h-4zM550 503h2v1h-2zM174 504h1v1h-1zM177 504h3v1h-3zM552 504h2v1h-2zM170 505h7v1h-7zM554 505h3v1h-3zM174 506h1v1h-1zM557 506h2v1h-2zM174 507h1v1h-1zM559 507h2v1h-2zM174 508h1v1h-1zM561 508h2v1h-2zM174 509h1v1h-1zM563 509h2v1h-2zM174 510h1v1h-1zM565 510h2v1h-2zM174 511h1v1h-1zM567 511h3v1h-3zM174 512h1v1h-1zM570 512h2v1h-2zM174 513h1v1h-1zM572 513h2v1h-2zM174 514h1v1h-1zM574 514h2v1h-2zM174 515h1v1h-1zM576 515h2v1h-2zM174 516h1v1h-1zM578 516h2v1h-2zM174 517h1v1h-1zM580 517h3v1h-3zM174 518h1v1h-1zM583 518h2v1h-2zM174 519h1v1h-1zM585 519h2v1h-2zM174 520h1v1h-1zM216 520h3v1h-3zM587 520h2v1h-2zM174 521h1v1h-1zM212 521h4v1h-4zM589 521h2v1h-2zM174 522h1v1h-1zM209 522h3v1h-3zM591 522h2v1h-2zM174 523h1v1h-1zM205 523h4v1h-4zM593 523h3v1h-3zM174 524h1v1h-1zM201 524h4v1h-4zM596 524h2v1h-2zM174 525h1v1h-1zM198 525h3v1h-3zM541 525h1v1h-1zM598 525h1v1h-1zM174 526h1v1h-1zM194 526h4v1h-4zM292 526h1v1h-1zM543 526h1v1h-1zM174 527h1v1h-1zM191 527h3v1h-3zM288 527h4v1h-4zM544 527h2v1h-2zM174 528h1v1h-1zM187 528h4v1h-4zM285 528h3v1h-3zM488 528h2v1h-2zM546 528h2v1h-2zM174 529h1v1h-1zM183 529h4v1h-4zM281 529h4v1h-4zM490 529h2v1h-2zM548 529h2v1h-2zM174 530h1v1h-1zM180 530h3v1h-3zM277 530h4v1h-4zM492 530h2v1h-2zM550 530h3v1h-3zM174 531h1v1h-1zM176 531h4v1h-4zM274 531h3v1h-3zM494 531h3v1h-3zM553 531h2v1h-2zM170 532h6v1h-6zM270 532h4v1h-4zM497 532h2v1h-2zM555 532h2v1h-2zM174 533h1v1h-1zM266 533h4v1h-4zM499 533h2v1h-2zM557 533h2v1h-2zM174 534h1v1h-1zM263 534h3v1h-3zM501 534h2v1h-2zM559 534h2v1h-2zM174 535h1v1h-1zM259 535h4v1h-4zM503 535h2v1h-2zM561 535h2v1h-2zM174 536h1v1h-1zM255 536h4v1h-4zM503 536h4v1h-4zM563 536h3v1h-3zM174 537h1v1h-1zM252 537h3v1h-3zM499 537h4v1h-4zM507 537h3v1h-3zM566 537h2v1h-2zM174 538h1v1h-1zM248 538h4v1h-4zM496 538h3v1h-3zM510 538h2v1h-2zM568 538h2v1h-2zM174 539h1v1h-1zM245 539h3v1h-3zM492 539h4v1h-4zM512 539h2v1h-2zM570 539h2v1h-2zM174 540h1v1h-1zM241 540h4v1h-4zM489 540h3v1h-3zM514 540h2v1h-2zM572 540h2v1h-2zM174 541h1v1h-1zM237 541h4v1h-4zM485 541h4v1h-4zM516 541h2v1h-2zM574 541h2v1h-2zM174 542h1v1h-1zM234 542h3v1h-3zM481 542h4v1h-4zM518 542h2v1h-2zM576 542h3v1h-3zM174 543h1v1h-1zM230 543h7v1h-7zM478 543h3v1h-3zM520 543h3v1h-3zM579 543h2v1h-2zM174 544h1v1h-1zM226 544h4v1h-4zM237 544h2v1h-2zM474 544h4v1h-4zM523 544h2v1h-2zM581 544h2v1h-2zM174 545h1v1h-1zM223 545h3v1h-3zM239 545h2v1h-2zM470 545h4v1h-4zM525 545h2v1h-2zM583 545h2v1h-2zM174 546h1v1h-1zM219 546h4v1h-4zM241 546h2v1h-2zM467 546h3v1h-3zM527 546h2v1h-2zM585 546h2v1h-2zM174 547h1v1h-1zM215 547h4v1h-4zM243 547h2v1h-2zM463 547h4v1h-4zM529 547h2v1h-2zM587 547h2v1h-2zM174 548h1v1h-1zM212 548h3v1h-3zM245 548h2v1h-2zM461 548h2v1h-2zM531 548h2v1h-2zM589 548h3v1h-3zM174 549h1v1h-1zM208 549h4v1h-4zM247 549h3v1h-3zM533 549h3v1h-3zM592 549h2v1h-2zM174 550h1v1h-1zM205 550h3v1h-3zM250 550h2v1h-2zM536 550h2v1h-2zM594 550h2v1h-2zM174 551h1v1h-1zM201 551h4v1h-4zM252 551h2v1h-2zM538 551h2v1h-2zM596 551h2v1h-2zM174 552h1v1h-1zM197 552h4v1h-4zM254 552h2v1h-2zM540 552h2v1h-2zM598 552h1v1h-1zM174 553h1v1h-1zM194 553h3v1h-3zM256 553h2v1h-2zM318 553h1v1h-1zM542 553h2v1h-2zM174 554h1v1h-1zM190 554h4v1h-4zM258 554h2v1h-2zM314 554h4v1h-4zM544 554h2v1h-2zM174 555h1v1h-1zM186 555h4v1h-4zM260 555h3v1h-3zM310 555h4v1h-4zM452 555h1v1h-1zM546 555h3v1h-3zM174 556h1v1h-1zM183 556h3v1h-3zM263 556h2v1h-2zM307 556h3v1h-3zM453 556h2v1h-2zM549 556h2v1h-2zM174 557h1v1h-1zM179 557h4v1h-4zM265 557h2v1h-2zM303 557h4v1h-4zM455 557h3v1h-3zM551 557h2v1h-2zM174 558h1v1h-1zM176 558h3v1h-3zM267 558h2v1h-2zM299 558h4v1h-4zM458 558h2v1h-2zM547 558h4v1h-4zM553 558h2v1h-2zM170 559h6v1h-6zM269 559h2v1h-2zM296 559h3v1h-3zM460 559h2v1h-2zM543 559h4v1h-4zM555 559h2v1h-2zM170 560h2v1h-2zM176 560h2v1h-2zM271 560h2v1h-2zM292 560h4v1h-4zM462 560h2v1h-2zM540 560h3v1h-3zM557 560h2v1h-2zM178 561h2v1h-2zM273 561h3v1h-3zM288 561h4v1h-4zM464 561h2v1h-2zM536 561h4v1h-4zM559 561h3v1h-3zM180 562h2v1h-2zM276 562h2v1h-2zM285 562h3v1h-3zM466 562h2v1h-2zM532 562h4v1h-4zM562 562h2v1h-2zM182 563h3v1h-3zM278 563h2v1h-2zM281 563h4v1h-4zM468 563h3v1h-3zM529 563h3v1h-3zM564 563h2v1h-2zM185 564h2v1h-2zM278 564h4v1h-4zM471 564h2v1h-2zM525 564h4v1h-4zM566 564h2v1h-2zM187 565h2v1h-2zM274 565h4v1h-4zM282 565h2v1h-2zM473 565h2v1h-2zM522 565h3v1h-3zM568 565h2v1h-2zM189 566h2v1h-2zM270 566h4v1h-4zM284 566h2v1h-2zM475 566h2v1h-2zM518 566h4v1h-4zM570 566h2v1h-2zM191 567h2v1h-2zM267 567h3v1h-3zM286 567h3v1h-3zM477 567h2v1h-2zM514 567h4v1h-4zM572 567h3v1h-3zM193 568h2v1h-2zM263 568h4v1h-4zM289 568h2v1h-2zM479 568h2v1h-2zM511 568h3v1h-3zM575 568h2v1h-2zM195 569h3v1h-3zM259 569h4v1h-4zM291 569h2v1h-2zM481 569h3v1h-3zM507 569h4v1h-4zM577 569h2v1h-2zM198 570h2v1h-2zM256 570h3v1h-3zM293 570h2v1h-2zM484 570h2v1h-2zM503 570h4v1h-4zM579 570h2v1h-2zM200 571h2v1h-2zM252 571h4v1h-4zM295 571h2v1h-2zM486 571h2v1h-2zM500 571h3v1h-3zM581 571h2v1h-2zM202 572h2v1h-2zM248 572h4v1h-4zM297 572h2v1h-2zM488 572h2v1h-2zM496 572h4v1h-4zM583 572h2v1h-2zM204 573h2v1h-2zM245 573h3v1h-3zM299 573h3v1h-3zM395 573h2v1h-2zM490 573h6v1h-6zM585 573h2v1h-2zM206 574h2v1h-2zM241 574h4v1h-4zM302 574h2v1h-2zM397 574h2v1h-2zM489 574h5v1h-5zM587 574h3v1h-3zM208 575h3v1h-3zM238 575h3v1h-3zM304 575h2v1h-2zM399 575h2v1h-2zM485 575h4v1h-4zM494 575h2v1h-2zM590 575h2v1h-2zM211 576h2v1h-2zM234 576h4v1h-4zM306 576h2v1h-2zM401 576h2v1h-2zM482 576h3v1h-3zM496 576h3v1h-3zM592 576h2v1h-2zM213 577h2v1h-2zM230 577h4v1h-4zM308 577h2v1h-2zM403 577h2v1h-2zM478 577h4v1h-4zM499 577h2v1h-2zM594 577h2v1h-2zM215 578h2v1h-2zM227 578h3v1h-3zM310 578h2v1h-2zM405 578h3v1h-3zM474 578h4v1h-4zM501 578h2v1h-2zM596 578h3v1h-3zM217 579h2v1h-2zM223 579h4v1h-4zM312 579h2v1h-2zM347 579h4v1h-4zM408 579h2v1h-2zM471 579h3v1h-3zM503 579h2v1h-2zM594 579h6v1h-6zM219 580h4v1h-4zM314 580h3v1h-3zM343 580h4v1h-4zM410 580h2v1h-2zM467 580h4v1h-4zM505 580h2v1h-2zM591 580h3v1h-3zM600 580h3v1h-3zM216 581h3v1h-3zM221 581h2v1h-2zM317 581h2v1h-2zM340 581h3v1h-3zM412 581h2v1h-2zM463 581h4v1h-4zM507 581h2v1h-2zM587 581h4v1h-4zM223 582h3v1h-3zM319 582h2v1h-2zM336 582h4v1h-4zM414 582h2v1h-2zM460 582h3v1h-3zM509 582h3v1h-3zM584 582h3v1h-3zM226 583h2v1h-2zM321 583h2v1h-2zM332 583h4v1h-4zM416 583h2v1h-2zM456 583h4v1h-4zM512 583h2v1h-2zM580 583h4v1h-4zM228 584h2v1h-2zM323 584h2v1h-2zM329 584h3v1h-3zM418 584h3v1h-3zM453 584h3v1h-3zM514 584h2v1h-2zM576 584h4v1h-4zM230 585h2v1h-2zM325 585h4v1h-4zM421 585h2v1h-2zM449 585h4v1h-4zM516 585h2v1h-2zM573 585h3v1h-3zM232 586h2v1h-2zM321 586h4v1h-4zM327 586h3v1h-3zM423 586h2v1h-2zM445 586h4v1h-4zM518 586h2v1h-2zM569 586h4v1h-4zM234 587h2v1h-2zM318 587h3v1h-3zM330 587h2v1h-2zM425 587h2v1h-2zM442 587h3v1h-3zM520 587h2v1h-2zM565 587h4v1h-4zM236 588h3v1h-3zM314 588h4v1h-4zM332 588h2v1h-2zM427 588h2v1h-2zM438 588h4v1h-4zM522 588h3v1h-3zM562 588h3v1h-3zM239 589h2v1h-2zM311 589h3v1h-3zM334 589h2v1h-2zM429 589h2v1h-2zM434 589h4v1h-4zM525 589h2v1h-2zM558 589h4v1h-4zM241 590h2v1h-2zM307 590h4v1h-4zM336 590h2v1h-2zM431 590h3v1h-3zM527 590h2v1h-2zM555 590h3v1h-3zM243 591h2v1h-2zM303 591h4v1h-4zM338 591h2v1h-2zM427 591h4v1h-4zM434 591h2v1h-2zM529 591h2v1h-2zM551 591h4v1h-4zM245 592h2v1h-2zM300 592h3v1h-3zM340 592h3v1h-3zM423 592h4v1h-4zM436 592h2v1h-2zM531 592h2v1h-2zM547 592h4v1h-4zM247 593h2v1h-2zM296 593h4v1h-4zM343 593h2v1h-2zM420 593h3v1h-3zM438 593h2v1h-2zM533 593h2v1h-2zM544 593h3v1h-3zM249 594h3v1h-3zM292 594h4v1h-4zM345 594h2v1h-2zM416 594h4v1h-4zM440 594h2v1h-2zM535 594h3v1h-3zM540 594h4v1h-4zM252 595h2v1h-2zM289 595h3v1h-3zM347 595h2v1h-2zM413 595h3v1h-3zM442 595h2v1h-2zM536 595h4v1h-4zM254 596h2v1h-2zM285 596h4v1h-4zM349 596h2v1h-2zM409 596h4v1h-4zM444 596h3v1h-3zM533 596h3v1h-3zM540 596h2v1h-2zM256 597h2v1h-2zM281 597h4v1h-4zM351 597h2v1h-2zM405 597h4v1h-4zM447 597h2v1h-2zM529 597h4v1h-4zM542 597h2v1h-2zM258 598h2v1h-2zM278 598h3v1h-3zM353 598h3v1h-3zM402 598h3v1h-3zM449 598h2v1h-2zM525 598h4v1h-4zM260 599h2v1h-2zM274 599h4v1h-4zM356 599h2v1h-2zM398 599h4v1h-4zM451 599h2v1h-2zM522 599h3v1h-3zM262 600h3v1h-3zM271 600h3v1h-3zM358 600h2v1h-2zM394 600h4v1h-4zM453 600h2v1h-2zM518 600h4v1h-4zM265 601h6v1h-6zM360 601h2v1h-2zM391 601h3v1h-3zM455 601h2v1h-2zM515 601h3v1h-3zM263 602h6v1h-6zM362 602h2v1h-2zM387 602h4v1h-4zM457 602h3v1h-3zM511 602h4v1h-4zM262 603h1v1h-1zM269 603h2v1h-2zM364 603h2v1h-2zM384 603h3v1h-3zM460 603h2v1h-2zM507 603h4v1h-4zM271 604h2v1h-2zM366 604h3v1h-3zM380 604h4v1h-4zM462 604h2v1h-2zM504 604h3v1h-3zM273 605h2v1h-2zM369 605h2v1h-2zM376 605h4v1h-4zM464 605h2v1h-2zM500 605h4v1h-4zM275 606h3v1h-3zM371 606h5v1h-5zM466 606h2v1h-2zM496 606h4v1h-4zM278 607h2v1h-2zM369 607h6v1h-6zM468 607h2v1h-2zM493 607h3v1h-3zM280 608h2v1h-2zM365 608h4v1h-4zM375 608h2v1h-2zM470 608h3v1h-3zM489 608h4v1h-4zM282 609h2v1h-2zM362 609h3v1h-3zM377 609h2v1h-2zM473 609h2v1h-2zM486 609h3v1h-3zM284 610h2v1h-2zM358 610h4v1h-4zM379 610h3v1h-3zM475 610h2v1h-2zM482 610h4v1h-4zM286 611h2v1h-2zM354 611h4v1h-4zM382 611h2v1h-2zM477 611h5v1h-5zM288 612h3v1h-3zM351 612h3v1h-3zM384 612h2v1h-2zM475 612h3v1h-3zM479 612h2v1h-2zM291 613h2v1h-2zM347 613h4v1h-4zM386 613h2v1h-2zM471 613h4v1h-4zM481 613h2v1h-2zM293 614h2v1h-2zM344 614h3v1h-3zM388 614h2v1h-2zM467 614h4v1h-4zM483 614h1v1h-1zM295 615h2v1h-2zM340 615h4v1h-4zM390 615h2v1h-2zM464 615h3v1h-3zM297 616h2v1h-2zM336 616h4v1h-4zM392 616h2v1h-2zM460 616h4v1h-4zM299 617h2v1h-2zM333 617h3v1h-3zM394 617h3v1h-3zM456 617h4v1h-4zM301 618h2v1h-2zM329 618h4v1h-4zM397 618h2v1h-2zM453 618h3v1h-3zM303 619h3v1h-3zM325 619h4v1h-4zM399 619h2v1h-2zM449 619h4v1h-4zM306 620h2v1h-2zM322 620h3v1h-3zM401 620h2v1h-2zM446 620h3v1h-3zM308 621h2v1h-2zM318 621h4v1h-4zM403 621h2v1h-2zM442 621h4v1h-4zM310 622h2v1h-2zM314 622h4v1h-4zM405 622h2v1h-2zM438 622h4v1h-4zM311 623h3v1h-3zM407 623h3v1h-3zM435 623h3v1h-3zM309 624h2v1h-2zM314 624h2v1h-2zM410 624h2v1h-2zM431 624h4v1h-4zM316 625h3v1h-3zM412 625h2v1h-2zM427 625h4v1h-4zM319 626h2v1h-2zM414 626h2v1h-2zM424 626h3v1h-3zM321 627h2v1h-2zM416 627h2v1h-2zM420 627h4v1h-4zM323 628h2v1h-2zM417 628h3v1h-3zM325 629h2v1h-2zM413 629h4v1h-4zM420 629h3v1h-3zM327 630h2v1h-2zM409 630h4v1h-4zM423 630h1v1h-1zM329 631h3v1h-3zM406 631h3v1h-3zM332 632h2v1h-2zM402 632h4v1h-4zM334 633h2v1h-2zM398 633h4v1h-4zM336 634h2v1h-2zM395 634h3v1h-3zM338 635h2v1h-2zM391 635h4v1h-4zM340 636h2v1h-2zM387 636h4v1h-4zM342 637h3v1h-3zM384 637h3v1h-3zM345 638h2v1h-2zM380 638h4v1h-4zM347 639h2v1h-2zM377 639h3v1h-3zM349 640h2v1h-2zM373 640h4v1h-4zM351 641h2v1h-2zM369 641h4v1h-4zM353 642h2v1h-2zM366 642h3v1h-3zM355 643h3v1h-3zM362 643h4v1h-4zM358 644h4v1h-4zM355 645h3v1h-3zM360 645h2v1h-2zM362 646h2v1h-2z"/><path fill="#440154" d="M333 524h2v1h-2zM323 525h1v1h-1zM328 525h6v1h-6zM439 525h1v1h-1zM324 526h1v1h-1zM329 526h1v1h-1zM441 526h2v1h-2zM324 527h1v1h-1zM329 527h1v1h-1zM443 527h2v1h-2zM325 528h1v1h-1zM330 528h1v1h-1zM442 528h2v1h-2zM445 528h2v1h-2zM326 529h1v1h-1zM331 529h1v1h-1zM447 529h3v1h-3zM319 530h3v1h-3zM323 530h8v1h-8zM445 530h2v1h-2zM450 530h4v1h-4zM322 531h2v1h-2zM328 531h2v1h-2zM443 531h2v1h-2zM449 531h2v1h-2zM329 532h1v1h-1zM444 532h1v1h-1zM319 553h1v1h-1zM454 553h1v1h-1zM320 554h1v1h-1zM453 554h1v1h-1zM322 555h1v1h-1zM323 556h1v1h-1zM326 557h1v1h-1zM327 558h1v1h-1zM330 559h1v1h-1zM443 559h2v1h-2zM331 560h1v1h-1zM333 560h1v1h-1zM440 560h1v1h-1zM442 560h1v1h-1zM334 561h2v1h-2zM438 561h2v1h-2zM435 562h1v1h-1zM437 562h1v1h-1zM432 563h3v1h-3zM428 564h3v1h-3zM423 565h3v1h-3zM417 566h5v1h-5zM409 567h6v1h-6zM399 568h11v1h-11z"/><path fill="#46075a" d="M437 514h1v1h-1zM436 515h1v1h-1zM436 516h1v1h-1zM334 517h1v1h-1zM441 517h1v1h-1zM324 518h1v1h-1zM329 518h1v1h-1zM334 518h1v1h-1zM440 518h1v1h-1zM325 519h1v1h-1zM330 519h1v1h-1zM335 519h1v1h-1zM439 519h1v1h-1zM325 520h1v1h-1zM330 520h1v1h-1zM335 520h1v1h-1zM439 520h1v1h-1zM444 520h1v1h-1zM326 521h1v1h-1zM331 521h1v1h-1zM438 521h1v1h-1zM443 521h1v1h-1zM448 521h1v1h-1zM326 522h1v1h-1zM331 522h1v1h-1zM443 522h1v1h-1zM448 522h1v1h-1zM327 523h1v1h-1zM332 523h1v1h-1zM442 523h1v1h-1zM447 523h1v1h-1zM452 523h1v1h-1zM319 524h3v1h-3zM327 524h1v1h-1zM332 524h1v1h-1zM441 524h1v1h-1zM446 524h1v1h-1zM451 524h1v1h-1zM455 524h1v1h-1zM459 524h1v1h-1zM319 525h1v1h-1zM322 525h1v1h-1zM324 525h4v1h-4zM440 525h1v1h-1zM445 525h1v1h-1zM450 525h1v1h-1zM455 525h1v1h-1zM459 525h1v1h-1zM319 526h1v1h-1zM445 526h1v1h-1zM450 526h1v1h-1zM454 526h1v1h-1zM458 526h1v1h-1zM320 527h1v1h-1zM449 527h1v1h-1zM453 527h1v1h-1zM457 527h1v1h-1zM313 528h1v1h-1zM320 528h1v1h-1zM448 528h1v1h-1zM453 528h1v1h-1zM457 528h1v1h-1zM316 529h1v1h-1zM321 529h1v1h-1zM452 529h1v1h-1zM456 529h1v1h-1zM322 530h1v1h-1zM311 546h1v1h-1zM460 548h1v1h-1zM459 549h1v1h-1zM315 550h1v1h-1zM458 550h1v1h-1zM318 552h1v1h-1zM454 552h1v1h-1zM453 553h1v1h-1zM321 554h1v1h-1zM452 554h1v1h-1zM323 555h1v1h-1zM448 555h1v1h-1zM451 555h1v1h-1zM324 556h2v1h-2zM447 556h3v1h-3zM325 557h1v1h-1zM327 557h2v1h-2zM444 557h1v1h-1zM446 557h2v1h-2zM328 558h1v1h-1zM330 558h1v1h-1zM332 558h1v1h-1zM443 558h1v1h-1zM445 558h2v1h-2zM329 559h1v1h-1zM331 559h1v1h-1zM333 559h1v1h-1zM442 559h1v1h-1zM332 560h1v1h-1zM438 560h1v1h-1zM441 560h1v1h-1zM433 561h2v1h-2zM437 561h1v1h-1zM429 562h1v1h-1zM432 562h1v1h-1zM436 562h1v1h-1zM419 563h1v1h-1zM424 563h1v1h-1zM428 563h1v1h-1zM431 563h1v1h-1zM418 564h1v1h-1zM423 564h1v1h-1zM427 564h1v1h-1zM408 565h2v1h-2zM417 565h1v1h-1zM422 565h1v1h-1zM426 565h1v1h-1zM406 566h1v1h-1zM410 566h7v1h-7zM404 567h2v1h-2z"/><path fill="#470d60" d="M438 514h1v1h-1zM439 515h2v1h-2zM335 516h3v1h-3zM325 517h4v1h-4zM330 517h4v1h-4zM442 517h1v1h-1zM320 518h1v1h-1zM443 518h2v1h-2zM320 519h1v1h-1zM445 519h2v1h-2zM321 520h1v1h-1zM447 520h1v1h-1zM321 521h1v1h-1zM449 521h2v1h-2zM322 522h1v1h-1zM451 522h1v1h-1zM453 522h1v1h-1zM314 523h3v1h-3zM322 523h1v1h-1zM454 523h2v1h-2zM457 523h3v1h-3zM314 524h1v1h-1zM317 524h2v1h-2zM323 524h1v1h-1zM463 524h1v1h-1zM315 525h1v1h-1zM462 525h1v1h-1zM308 526h2v1h-2zM315 526h1v1h-1zM462 526h1v1h-1zM310 527h2v1h-2zM316 527h1v1h-1zM461 527h1v1h-1zM316 528h1v1h-1zM460 528h1v1h-1zM317 529h1v1h-1zM331 531h1v1h-1zM330 532h1v1h-1zM463 545h1v1h-1zM312 547h1v1h-1zM313 548h2v1h-2zM459 548h1v1h-1zM314 549h2v1h-2zM458 549h1v1h-1zM457 550h1v1h-1zM317 551h2v1h-2zM456 551h1v1h-1zM319 552h1v1h-1zM455 552h1v1h-1zM320 553h2v1h-2zM452 553h1v1h-1zM322 554h1v1h-1zM448 554h1v1h-1zM451 554h1v1h-1zM325 555h1v1h-1zM446 555h2v1h-2zM450 555h1v1h-1zM326 556h2v1h-2zM445 556h1v1h-1zM329 557h2v1h-2zM442 557h2v1h-2zM441 558h1v1h-1zM437 559h3v1h-3zM433 560h2v1h-2zM436 560h1v1h-1zM428 561h2v1h-2zM431 561h2v1h-2zM415 562h1v1h-1zM421 562h7v1h-7zM414 563h1v1h-1zM404 564h2v1h-2zM413 564h1v1h-1zM406 565h1v1h-1zM412 565h1v1h-1z"/><path fill="#471365" d="M340 505h1v1h-1zM340 506h1v1h-1zM335 507h1v1h-1zM340 507h1v1h-1zM330 508h1v1h-1zM335 508h1v1h-1zM446 508h1v1h-1zM326 509h1v1h-1zM331 509h1v1h-1zM336 509h1v1h-1zM445 509h1v1h-1zM326 510h1v1h-1zM331 510h1v1h-1zM336 510h1v1h-1zM434 510h1v1h-1zM444 510h1v1h-1zM326 511h1v1h-1zM331 511h1v1h-1zM337 511h1v1h-1zM435 511h1v1h-1zM444 511h1v1h-1zM449 511h1v1h-1zM327 512h1v1h-1zM332 512h1v1h-1zM337 512h1v1h-1zM436 512h1v1h-1zM443 512h1v1h-1zM448 512h1v1h-1zM453 512h1v1h-1zM327 513h1v1h-1zM332 513h1v1h-1zM337 513h1v1h-1zM437 513h1v1h-1zM443 513h1v1h-1zM448 513h1v1h-1zM453 513h1v1h-1zM328 514h1v1h-1zM333 514h1v1h-1zM338 514h1v1h-1zM442 514h1v1h-1zM447 514h1v1h-1zM452 514h1v1h-1zM457 514h1v1h-1zM328 515h1v1h-1zM333 515h1v1h-1zM338 515h1v1h-1zM442 515h1v1h-1zM447 515h1v1h-1zM452 515h1v1h-1zM456 515h1v1h-1zM460 515h1v1h-1zM315 516h1v1h-1zM328 516h1v1h-1zM333 516h1v1h-1zM441 516h1v1h-1zM446 516h1v1h-1zM451 516h1v1h-1zM456 516h1v1h-1zM460 516h1v1h-1zM315 517h1v1h-1zM320 517h4v1h-4zM329 517h1v1h-1zM446 517h1v1h-1zM451 517h1v1h-1zM455 517h1v1h-1zM459 517h1v1h-1zM316 518h1v1h-1zM445 518h1v1h-1zM450 518h1v1h-1zM455 518h1v1h-1zM459 518h1v1h-1zM316 519h1v1h-1zM450 519h1v1h-1zM454 519h1v1h-1zM458 519h1v1h-1zM309 520h1v1h-1zM316 520h1v1h-1zM449 520h1v1h-1zM453 520h1v1h-1zM458 520h1v1h-1zM309 521h3v1h-3zM317 521h1v1h-1zM453 521h1v1h-1zM457 521h1v1h-1zM310 522h1v1h-1zM312 522h2v1h-2zM317 522h1v1h-1zM452 522h1v1h-1zM457 522h1v1h-1zM310 523h1v1h-1zM318 523h1v1h-1zM456 523h1v1h-1zM461 523h2v1h-2zM467 523h1v1h-1zM310 524h1v1h-1zM460 524h1v1h-1zM466 524h1v1h-1zM311 525h1v1h-1zM466 525h1v1h-1zM311 526h1v1h-1zM465 526h1v1h-1zM312 527h1v1h-1zM441 529h1v1h-1zM442 531h1v1h-1zM443 532h1v1h-1zM464 543h1v1h-1zM310 544h1v1h-1zM463 544h1v1h-1zM310 545h1v1h-1zM462 545h1v1h-1zM314 546h1v1h-1zM461 546h2v1h-2zM314 547h1v1h-1zM461 547h1v1h-1zM315 548h1v1h-1zM317 548h1v1h-1zM316 549h1v1h-1zM318 549h1v1h-1zM457 549h1v1h-1zM316 550h1v1h-1zM318 550h1v1h-1zM320 550h1v1h-1zM456 550h1v1h-1zM319 551h1v1h-1zM321 551h1v1h-1zM324 551h1v1h-1zM453 551h1v1h-1zM455 551h1v1h-1zM320 552h1v1h-1zM322 552h1v1h-1zM325 552h1v1h-1zM447 552h1v1h-1zM451 552h2v1h-2zM323 553h1v1h-1zM325 553h1v1h-1zM328 553h1v1h-1zM446 553h1v1h-1zM450 553h1v1h-1zM323 554h1v1h-1zM326 554h1v1h-1zM329 554h1v1h-1zM442 554h1v1h-1zM446 554h1v1h-1zM449 554h1v1h-1zM324 555h1v1h-1zM327 555h1v1h-1zM330 555h1v1h-1zM438 555h1v1h-1zM441 555h1v1h-1zM445 555h1v1h-1zM328 556h1v1h-1zM331 556h1v1h-1zM433 556h1v1h-1zM437 556h1v1h-1zM441 556h1v1h-1zM444 556h1v1h-1zM331 557h1v1h-1zM428 557h1v1h-1zM432 557h1v1h-1zM436 557h1v1h-1zM440 557h1v1h-1zM427 558h1v1h-1zM432 558h1v1h-1zM436 558h1v1h-1zM440 558h1v1h-1zM427 559h1v1h-1zM431 559h1v1h-1zM435 559h1v1h-1zM410 560h1v1h-1zM426 560h1v1h-1zM430 560h1v1h-1zM435 560h1v1h-1zM410 561h1v1h-1zM416 561h3v1h-3zM425 561h1v1h-1zM430 561h1v1h-1zM409 562h1v1h-1zM419 562h2v1h-2zM408 563h1v1h-1zM408 564h1v1h-1zM407 565h1v1h-1z"/><path fill="#48186a" d="M442 504h1v1h-1zM338 505h2v1h-2zM442 505h1v1h-1zM334 506h1v1h-1zM336 506h2v1h-2zM441 506h1v1h-1zM331 507h3v1h-3zM441 507h1v1h-1zM321 508h1v1h-1zM440 508h1v1h-1zM321 509h1v1h-1zM433 509h1v1h-1zM440 509h1v1h-1zM321 510h1v1h-1zM439 510h1v1h-1zM450 510h1v1h-1zM322 511h1v1h-1zM439 511h1v1h-1zM451 511h2v1h-2zM322 512h1v1h-1zM438 512h1v1h-1zM454 512h2v1h-2zM322 513h1v1h-1zM438 513h1v1h-1zM456 513h1v1h-1zM310 514h1v1h-1zM323 514h1v1h-1zM310 515h1v1h-1zM315 515h1v1h-1zM323 515h1v1h-1zM464 515h1v1h-1zM311 516h1v1h-1zM316 516h3v1h-3zM324 516h1v1h-1zM464 516h1v1h-1zM304 517h1v1h-1zM311 517h1v1h-1zM319 517h1v1h-1zM324 517h1v1h-1zM463 517h1v1h-1zM304 518h1v1h-1zM312 518h1v1h-1zM462 518h1v1h-1zM305 519h1v1h-1zM312 519h1v1h-1zM462 519h1v1h-1zM305 520h1v1h-1zM312 520h1v1h-1zM461 520h1v1h-1zM306 521h1v1h-1zM313 521h1v1h-1zM461 521h1v1h-1zM471 521h1v1h-1zM303 522h2v1h-2zM306 522h1v1h-1zM460 522h1v1h-1zM470 522h1v1h-1zM303 523h1v1h-1zM305 523h1v1h-1zM307 523h1v1h-1zM460 523h1v1h-1zM464 523h3v1h-3zM469 523h1v1h-1zM304 524h1v1h-1zM306 524h2v1h-2zM469 524h1v1h-1zM304 525h1v1h-1zM307 525h1v1h-1zM468 525h1v1h-1zM438 526h1v1h-1zM439 527h1v1h-1zM334 528h1v1h-1zM439 528h2v1h-2zM333 529h2v1h-2zM440 529h1v1h-1zM333 530h1v1h-1zM440 530h2v1h-2zM332 531h2v1h-2zM441 531h1v1h-1zM331 532h2v1h-2zM337 532h1v1h-1zM441 532h2v1h-2zM332 533h1v1h-1zM336 533h1v1h-1zM437 533h1v1h-1zM442 533h1v1h-1zM336 534h1v1h-1zM470 536h1v1h-1zM306 540h1v1h-1zM467 540h1v1h-1zM307 541h1v1h-1zM466 541h1v1h-1zM309 542h1v1h-1zM310 543h1v1h-1zM311 544h1v1h-1zM462 544h1v1h-1zM311 545h1v1h-1zM461 545h1v1h-1zM312 546h1v1h-1zM460 546h1v1h-1zM313 547h1v1h-1zM316 547h2v1h-2zM458 547h1v1h-1zM460 547h1v1h-1zM318 548h1v1h-1zM456 548h2v1h-2zM320 549h2v1h-2zM452 549h1v1h-1zM455 549h1v1h-1zM322 550h1v1h-1zM451 550h1v1h-1zM450 551h1v1h-1zM450 552h1v1h-1zM441 553h2v1h-2zM449 553h1v1h-1zM437 554h1v1h-1zM439 554h2v1h-2zM434 555h3v1h-3zM423 556h1v1h-1zM423 557h1v1h-1zM422 558h1v1h-1zM422 559h1v1h-1zM411 560h3v1h-3zM421 560h1v1h-1zM414 561h2v1h-2zM421 561h1v1h-1z"/><path fill="#481d6f" d="M438 501h1v1h-1zM438 502h1v1h-1zM437 503h1v1h-1zM340 504h2v1h-2zM437 504h1v1h-1zM436 505h1v1h-1zM443 505h2v1h-2zM436 506h1v1h-1zM445 506h1v1h-1zM316 507h1v1h-1zM328 507h2v1h-2zM435 507h1v1h-1zM316 508h1v1h-1zM322 508h6v1h-6zM435 508h1v1h-1zM447 508h1v1h-1zM316 509h1v1h-1zM434 509h1v1h-1zM448 509h2v1h-2zM317 510h1v1h-1zM305 511h1v1h-1zM317 511h1v1h-1zM306 512h1v1h-1zM318 512h1v1h-1zM306 513h1v1h-1zM318 513h1v1h-1zM458 513h1v1h-1zM306 514h1v1h-1zM311 514h2v1h-2zM318 514h1v1h-1zM459 514h6v1h-6zM468 514h1v1h-1zM307 515h1v1h-1zM313 515h2v1h-2zM319 515h1v1h-1zM467 515h1v1h-1zM307 516h1v1h-1zM319 516h1v1h-1zM467 516h1v1h-1zM224 517h3v1h-3zM305 517h1v1h-1zM307 517h1v1h-1zM466 517h1v1h-1zM222 518h2v1h-2zM306 518h1v1h-1zM308 518h1v1h-1zM466 518h1v1h-1zM223 519h2v1h-2zM307 519h2v1h-2zM465 519h1v1h-1zM474 519h1v1h-1zM223 520h3v1h-3zM465 520h1v1h-1zM474 520h1v1h-1zM221 521h2v1h-2zM464 521h1v1h-1zM469 521h2v1h-2zM473 521h1v1h-1zM222 522h2v1h-2zM464 522h1v1h-1zM468 522h1v1h-1zM472 522h1v1h-1zM224 523h1v1h-1zM335 523h1v1h-1zM463 523h1v1h-1zM472 523h1v1h-1zM335 524h1v1h-1zM471 524h1v1h-1zM334 525h1v1h-1zM334 526h1v1h-1zM333 527h2v1h-2zM333 528h1v1h-1zM437 528h2v1h-2zM332 529h1v1h-1zM438 529h1v1h-1zM332 530h1v1h-1zM340 530h1v1h-1zM438 530h2v1h-2zM340 531h1v1h-1zM439 531h2v1h-2zM336 532h1v1h-1zM340 532h1v1h-1zM439 532h2v1h-2zM549 532h2v1h-2zM335 533h1v1h-1zM339 533h1v1h-1zM426 533h1v1h-1zM439 533h1v1h-1zM441 533h1v1h-1zM551 533h2v1h-2zM339 534h1v1h-1zM426 534h1v1h-1zM549 534h3v1h-3zM426 535h1v1h-1zM548 535h2v1h-2zM355 536h1v1h-1zM550 536h2v1h-2zM468 537h2v1h-2zM548 537h4v1h-4zM305 538h1v1h-1zM468 538h1v1h-1zM547 538h1v1h-1zM305 539h2v1h-2zM467 539h1v1h-1zM307 540h1v1h-1zM466 540h1v1h-1zM308 541h2v1h-2zM465 541h1v1h-1zM308 542h1v1h-1zM310 542h1v1h-1zM463 542h1v1h-1zM465 542h1v1h-1zM309 543h1v1h-1zM462 543h1v1h-1zM461 544h1v1h-1zM313 545h2v1h-2zM457 545h1v1h-1zM460 545h1v1h-1zM456 546h1v1h-1zM456 547h1v1h-1zM451 548h2v1h-2zM455 548h1v1h-1zM450 549h1v1h-1zM454 549h1v1h-1zM324 550h2v1h-2zM449 550h1v1h-1zM454 550h1v1h-1zM326 551h1v1h-1zM446 551h2v1h-2zM444 552h2v1h-2zM443 553h1v1h-1zM425 555h2v1h-2zM430 555h4v1h-4zM418 556h1v1h-1zM427 556h3v1h-3zM418 557h1v1h-1zM417 558h1v1h-1zM409 559h2v1h-2zM417 559h1v1h-1zM416 560h1v1h-1zM358 585h2v1h-2zM364 585h4v1h-4zM373 585h2v1h-2zM360 586h2v1h-2zM363 586h1v1h-1zM368 586h5v1h-5z"/><path fill="#482374" d="M341 492h1v1h-1zM341 493h1v1h-1zM341 494h1v1h-1zM336 495h1v1h-1zM342 495h1v1h-1zM336 496h1v1h-1zM342 496h1v1h-1zM331 497h1v1h-1zM337 497h1v1h-1zM342 497h1v1h-1zM434 497h1v1h-1zM322 498h1v1h-1zM327 498h1v1h-1zM332 498h1v1h-1zM337 498h1v1h-1zM343 498h1v1h-1zM434 498h1v1h-1zM450 498h1v1h-1zM322 499h1v1h-1zM327 499h1v1h-1zM332 499h1v1h-1zM337 499h1v1h-1zM343 499h1v1h-1zM433 499h1v1h-1zM450 499h1v1h-1zM322 500h1v1h-1zM327 500h1v1h-1zM332 500h1v1h-1zM338 500h1v1h-1zM343 500h1v1h-1zM433 500h1v1h-1zM449 500h1v1h-1zM454 500h1v1h-1zM323 501h1v1h-1zM328 501h1v1h-1zM333 501h1v1h-1zM338 501h1v1h-1zM432 501h1v1h-1zM439 501h1v1h-1zM449 501h1v1h-1zM454 501h1v1h-1zM323 502h1v1h-1zM328 502h1v1h-1zM333 502h1v1h-1zM339 502h1v1h-1zM432 502h1v1h-1zM440 502h1v1h-1zM448 502h1v1h-1zM453 502h1v1h-1zM323 503h1v1h-1zM328 503h1v1h-1zM334 503h1v1h-1zM339 503h1v1h-1zM431 503h1v1h-1zM441 503h1v1h-1zM448 503h1v1h-1zM453 503h1v1h-1zM457 503h1v1h-1zM324 504h1v1h-1zM329 504h1v1h-1zM334 504h1v1h-1zM339 504h1v1h-1zM431 504h1v1h-1zM447 504h1v1h-1zM452 504h1v1h-1zM457 504h1v1h-1zM461 504h1v1h-1zM465 504h1v1h-1zM324 505h1v1h-1zM329 505h1v1h-1zM334 505h1v1h-1zM447 505h1v1h-1zM452 505h1v1h-1zM457 505h1v1h-1zM461 505h1v1h-1zM465 505h1v1h-1zM311 506h1v1h-1zM325 506h1v1h-1zM329 506h1v1h-1zM335 506h1v1h-1zM447 506h1v1h-1zM451 506h1v1h-1zM456 506h1v1h-1zM460 506h1v1h-1zM465 506h1v1h-1zM311 507h1v1h-1zM317 507h4v1h-4zM325 507h1v1h-1zM330 507h1v1h-1zM446 507h1v1h-1zM451 507h1v1h-1zM456 507h1v1h-1zM460 507h1v1h-1zM464 507h1v1h-1zM312 508h1v1h-1zM450 508h1v1h-1zM455 508h1v1h-1zM459 508h1v1h-1zM464 508h1v1h-1zM312 509h1v1h-1zM450 509h1v1h-1zM455 509h1v1h-1zM459 509h1v1h-1zM463 509h1v1h-1zM313 510h1v1h-1zM454 510h1v1h-1zM459 510h1v1h-1zM463 510h1v1h-1zM306 511h1v1h-1zM313 511h1v1h-1zM454 511h1v1h-1zM458 511h1v1h-1zM462 511h1v1h-1zM235 512h2v1h-2zM307 512h2v1h-2zM313 512h1v1h-1zM458 512h1v1h-1zM462 512h1v1h-1zM233 513h2v1h-2zM309 513h1v1h-1zM314 513h1v1h-1zM457 513h1v1h-1zM461 513h1v1h-1zM232 514h3v1h-3zM300 514h1v1h-1zM314 514h1v1h-1zM465 514h3v1h-3zM471 514h1v1h-1zM230 515h2v1h-2zM234 515h1v1h-1zM300 515h1v1h-1zM471 515h1v1h-1zM228 516h2v1h-2zM232 516h2v1h-2zM300 516h1v1h-1zM470 516h1v1h-1zM227 517h7v1h-7zM298 517h1v1h-1zM301 517h1v1h-1zM470 517h1v1h-1zM218 518h4v1h-4zM228 518h2v1h-2zM232 518h2v1h-2zM298 518h2v1h-2zM301 518h1v1h-1zM469 518h1v1h-1zM217 519h2v1h-2zM226 519h2v1h-2zM231 519h1v1h-1zM299 519h2v1h-2zM302 519h1v1h-1zM469 519h1v1h-1zM473 519h1v1h-1zM219 520h1v1h-1zM226 520h7v1h-7zM297 520h1v1h-1zM299 520h1v1h-1zM301 520h2v1h-2zM468 520h1v1h-1zM471 520h2v1h-2zM220 521h1v1h-1zM227 521h2v1h-2zM231 521h2v1h-2zM297 521h2v1h-2zM300 521h1v1h-1zM302 521h2v1h-2zM338 521h1v1h-1zM437 521h1v1h-1zM468 521h1v1h-1zM477 521h1v1h-1zM225 522h2v1h-2zM230 522h1v1h-1zM298 522h3v1h-3zM338 522h1v1h-1zM467 522h1v1h-1zM225 523h3v1h-3zM229 523h1v1h-1zM300 523h2v1h-2zM337 523h1v1h-1zM438 523h1v1h-1zM228 524h4v1h-4zM337 524h1v1h-1zM337 525h1v1h-1zM336 526h1v1h-1zM432 526h1v1h-1zM439 526h1v1h-1zM542 526h1v1h-1zM336 527h1v1h-1zM432 527h1v1h-1zM543 527h1v1h-1zM336 528h1v1h-1zM344 528h1v1h-1zM432 528h1v1h-1zM544 528h1v1h-1zM335 529h1v1h-1zM344 529h1v1h-1zM348 529h1v1h-1zM432 529h1v1h-1zM541 529h5v1h-5zM335 530h1v1h-1zM344 530h1v1h-1zM348 530h1v1h-1zM433 530h1v1h-1zM542 530h1v1h-1zM546 530h1v1h-1zM335 531h1v1h-1zM343 531h1v1h-1zM347 531h1v1h-1zM421 531h1v1h-1zM433 531h1v1h-1zM539 531h2v1h-2zM543 531h1v1h-1zM547 531h2v1h-2zM334 532h1v1h-1zM343 532h1v1h-1zM347 532h1v1h-1zM351 532h1v1h-1zM416 532h1v1h-1zM421 532h1v1h-1zM433 532h1v1h-1zM540 532h9v1h-9zM334 533h1v1h-1zM343 533h1v1h-1zM347 533h1v1h-1zM351 533h1v1h-1zM416 533h1v1h-1zM421 533h1v1h-1zM433 533h1v1h-1zM541 533h1v1h-1zM545 533h1v1h-1zM342 534h1v1h-1zM346 534h1v1h-1zM351 534h1v1h-1zM417 534h1v1h-1zM422 534h1v1h-1zM434 534h1v1h-1zM538 534h1v1h-1zM542 534h1v1h-1zM546 534h2v1h-2zM553 534h3v1h-3zM342 535h1v1h-1zM346 535h1v1h-1zM351 535h1v1h-1zM412 535h1v1h-1zM417 535h1v1h-1zM422 535h1v1h-1zM538 535h10v1h-10zM554 535h2v1h-2zM303 536h1v1h-1zM350 536h1v1h-1zM367 536h1v1h-1zM412 536h1v1h-1zM417 536h1v1h-1zM422 536h1v1h-1zM539 536h1v1h-1zM544 536h1v1h-1zM552 536h2v1h-2zM304 537h2v1h-2zM367 537h1v1h-1zM412 537h1v1h-1zM467 537h1v1h-1zM540 537h1v1h-1zM545 537h2v1h-2zM306 538h1v1h-1zM308 538h1v1h-1zM394 538h1v1h-1zM467 538h1v1h-1zM537 538h10v1h-10zM309 539h1v1h-1zM466 539h1v1h-1zM310 540h1v1h-1zM465 540h1v1h-1zM310 541h1v1h-1zM312 541h1v1h-1zM311 542h1v1h-1zM313 542h1v1h-1zM315 542h1v1h-1zM461 542h1v1h-1zM311 543h1v1h-1zM313 543h1v1h-1zM316 543h1v1h-1zM460 543h1v1h-1zM312 544h1v1h-1zM314 544h1v1h-1zM317 544h1v1h-1zM319 544h1v1h-1zM451 544h1v1h-1zM457 544h1v1h-1zM460 544h1v1h-1zM315 545h1v1h-1zM317 545h1v1h-1zM320 545h1v1h-1zM450 545h1v1h-1zM456 545h1v1h-1zM459 545h1v1h-1zM315 546h1v1h-1zM318 546h1v1h-1zM321 546h1v1h-1zM450 546h1v1h-1zM454 546h2v1h-2zM459 546h1v1h-1zM318 547h1v1h-1zM321 547h1v1h-1zM446 547h1v1h-1zM449 547h1v1h-1zM319 548h1v1h-1zM322 548h1v1h-1zM441 548h1v1h-1zM445 548h1v1h-1zM449 548h1v1h-1zM323 549h1v1h-1zM432 549h1v1h-1zM437 549h1v1h-1zM441 549h1v1h-1zM445 549h1v1h-1zM448 549h1v1h-1zM323 550h1v1h-1zM432 550h1v1h-1zM436 550h1v1h-1zM440 550h1v1h-1zM444 550h1v1h-1zM448 550h1v1h-1zM431 551h1v1h-1zM436 551h1v1h-1zM440 551h1v1h-1zM444 551h1v1h-1zM430 552h1v1h-1zM435 552h1v1h-1zM439 552h1v1h-1zM443 552h1v1h-1zM430 553h1v1h-1zM435 553h1v1h-1zM439 553h1v1h-1zM429 554h1v1h-1zM434 554h1v1h-1zM438 554h1v1h-1zM420 555h4v1h-4zM429 555h1v1h-1zM413 556h1v1h-1zM412 557h1v1h-1zM412 558h1v1h-1zM411 559h1v1h-1zM350 578h1v1h-1zM351 579h1v1h-1zM357 579h3v1h-3zM366 579h2v1h-2zM375 579h1v1h-1zM352 580h1v1h-1zM356 580h1v1h-1zM360 580h1v1h-1zM365 580h1v1h-1zM368 580h1v1h-1zM374 580h1v1h-1zM376 580h1v1h-1zM383 580h1v1h-1zM353 581h3v1h-3zM361 581h1v1h-1zM363 581h2v1h-2zM369 581h1v1h-1zM372 581h2v1h-2zM377 581h1v1h-1zM382 581h1v1h-1zM354 582h1v1h-1zM362 582h1v1h-1zM370 582h2v1h-2zM378 582h1v1h-1zM380 582h2v1h-2zM355 583h2v1h-2zM360 583h2v1h-2zM363 583h2v1h-2zM369 583h4v1h-4zM378 583h2v1h-2zM357 584h3v1h-3zM365 584h1v1h-1zM367 584h2v1h-2zM373 584h1v1h-1zM376 584h2v1h-2zM375 585h1v1h-1zM362 586h1v1h-1zM363 587h7v1h-7z"/><path fill="#482878" d="M346 490h1v1h-1zM430 492h1v1h-1zM430 493h1v1h-1zM429 494h1v1h-1zM447 494h1v1h-1zM429 495h1v1h-1zM446 495h1v1h-1zM435 496h1v1h-1zM446 496h1v1h-1zM436 497h1v1h-1zM446 497h1v1h-1zM317 498h1v1h-1zM437 498h1v1h-1zM445 498h1v1h-1zM317 499h1v1h-1zM438 499h1v1h-1zM445 499h1v1h-1zM318 500h1v1h-1zM438 500h1v1h-1zM444 500h1v1h-1zM318 501h1v1h-1zM444 501h1v1h-1zM318 502h1v1h-1zM443 502h1v1h-1zM319 503h1v1h-1zM443 503h1v1h-1zM306 504h1v1h-1zM319 504h1v1h-1zM307 505h1v1h-1zM319 505h1v1h-1zM469 505h1v1h-1zM307 506h1v1h-1zM312 506h3v1h-3zM320 506h1v1h-1zM468 506h1v1h-1zM307 507h1v1h-1zM315 507h1v1h-1zM468 507h1v1h-1zM300 508h1v1h-1zM308 508h1v1h-1zM467 508h1v1h-1zM239 509h2v1h-2zM301 509h1v1h-1zM308 509h1v1h-1zM467 509h1v1h-1zM238 510h1v1h-1zM301 510h1v1h-1zM309 510h1v1h-1zM466 510h1v1h-1zM237 511h3v1h-3zM302 511h1v1h-1zM309 511h1v1h-1zM466 511h1v1h-1zM238 512h1v1h-1zM302 512h1v1h-1zM309 512h1v1h-1zM465 512h1v1h-1zM475 512h1v1h-1zM236 513h3v1h-3zM300 513h1v1h-1zM302 513h1v1h-1zM310 513h1v1h-1zM465 513h1v1h-1zM469 513h3v1h-3zM475 513h1v1h-1zM235 514h4v1h-4zM301 514h1v1h-1zM303 514h1v1h-1zM474 514h1v1h-1zM236 515h1v1h-1zM302 515h2v1h-2zM474 515h1v1h-1zM235 516h3v1h-3zM303 516h2v1h-2zM473 516h1v1h-1zM478 516h1v1h-1zM234 517h3v1h-3zM435 517h1v1h-1zM473 517h1v1h-1zM477 517h1v1h-1zM235 518h1v1h-1zM472 518h1v1h-1zM477 518h1v1h-1zM234 519h1v1h-1zM236 519h1v1h-1zM436 519h1v1h-1zM472 519h1v1h-1zM476 519h1v1h-1zM233 520h4v1h-4zM476 520h1v1h-1zM235 521h1v1h-1zM475 521h1v1h-1zM233 522h2v1h-2zM475 522h1v1h-1zM538 522h1v1h-1zM232 523h3v1h-3zM539 523h1v1h-1zM232 524h1v1h-1zM336 524h1v1h-1zM537 524h1v1h-1zM540 524h1v1h-1zM336 525h1v1h-1zM537 525h4v1h-4zM335 526h1v1h-1zM538 526h1v1h-1zM541 526h1v1h-1zM335 527h1v1h-1zM433 527h1v1h-1zM536 527h2v1h-2zM539 527h1v1h-1zM433 528h1v1h-1zM536 528h1v1h-1zM538 528h3v1h-3zM340 529h1v1h-1zM434 529h1v1h-1zM537 529h1v1h-1zM339 530h1v1h-1zM435 530h1v1h-1zM535 530h2v1h-2zM538 530h1v1h-1zM338 531h1v1h-1zM435 531h1v1h-1zM473 531h1v1h-1zM535 531h1v1h-1zM537 531h2v1h-2zM300 532h1v1h-1zM436 532h1v1h-1zM536 532h1v1h-1zM301 533h1v1h-1zM427 533h1v1h-1zM472 533h1v1h-1zM534 533h1v1h-1zM537 533h1v1h-1zM302 534h1v1h-1zM428 534h1v1h-1zM471 534h1v1h-1zM534 534h4v1h-4zM305 535h1v1h-1zM368 535h1v1h-1zM429 535h2v1h-2zM470 535h1v1h-1zM535 535h1v1h-1zM305 536h1v1h-1zM356 536h1v1h-1zM368 536h1v1h-1zM393 536h1v1h-1zM469 536h1v1h-1zM535 536h1v1h-1zM306 537h1v1h-1zM357 537h1v1h-1zM369 537h1v1h-1zM393 537h1v1h-1zM466 537h1v1h-1zM533 537h4v1h-4zM307 538h1v1h-1zM369 538h1v1h-1zM392 538h1v1h-1zM406 538h1v1h-1zM465 538h1v1h-1zM536 538h1v1h-1zM307 539h1v1h-1zM465 539h1v1h-1zM308 540h1v1h-1zM462 540h1v1h-1zM464 540h1v1h-1zM461 541h1v1h-1zM464 541h1v1h-1zM455 542h1v1h-1zM460 542h1v1h-1zM455 543h1v1h-1zM459 543h1v1h-1zM454 544h1v1h-1zM454 545h1v1h-1zM453 546h1v1h-1zM453 547h1v1h-1zM427 549h1v1h-1zM427 550h1v1h-1zM426 551h1v1h-1zM426 552h1v1h-1zM425 553h1v1h-1zM416 554h3v1h-3zM425 554h1v1h-1zM419 555h1v1h-1zM424 555h1v1h-1zM363 574h1v1h-1zM347 575h1v1h-1zM354 575h1v1h-1zM356 575h1v1h-1zM362 575h1v1h-1zM364 575h1v1h-1zM371 575h2v1h-2zM380 575h1v1h-1zM348 576h1v1h-1zM353 576h1v1h-1zM356 576h1v1h-1zM361 576h1v1h-1zM365 576h1v1h-1zM370 576h1v1h-1zM373 576h1v1h-1zM379 576h1v1h-1zM381 576h1v1h-1zM349 577h1v1h-1zM351 577h2v1h-2zM357 577h1v1h-1zM360 577h1v1h-1zM366 577h1v1h-1zM369 577h1v1h-1zM374 577h1v1h-1zM378 577h1v1h-1zM382 577h1v1h-1zM388 577h1v1h-1zM358 578h2v1h-2zM366 578h1v1h-1zM368 578h1v1h-1zM374 578h1v1h-1zM377 578h1v1h-1zM382 578h1v1h-1zM386 578h2v1h-2zM376 579h1v1h-1zM383 579h1v1h-1zM385 579h1v1h-1zM384 580h1v1h-1z"/><path fill="#472d7b" d="M427 486h1v1h-1zM427 487h1v1h-1zM345 489h1v1h-1zM343 490h2v1h-2zM342 491h1v1h-1zM431 491h1v1h-1zM443 491h1v1h-1zM340 492h1v1h-1zM432 492h1v1h-1zM442 492h1v1h-1zM338 493h2v1h-2zM433 493h1v1h-1zM442 493h1v1h-1zM335 494h1v1h-1zM337 494h1v1h-1zM434 494h1v1h-1zM441 494h1v1h-1zM332 495h3v1h-3zM434 495h1v1h-1zM441 495h1v1h-1zM448 495h1v1h-1zM328 496h4v1h-4zM441 496h1v1h-1zM449 496h2v1h-2zM312 497h1v1h-1zM318 497h10v1h-10zM440 497h1v1h-1zM451 497h1v1h-1zM312 498h1v1h-1zM440 498h1v1h-1zM452 498h1v1h-1zM313 499h1v1h-1zM439 499h1v1h-1zM453 499h2v1h-2zM313 500h1v1h-1zM439 500h1v1h-1zM455 500h2v1h-2zM314 501h1v1h-1zM457 501h1v1h-1zM302 502h1v1h-1zM314 502h1v1h-1zM458 502h3v1h-3zM302 503h1v1h-1zM314 503h1v1h-1zM461 503h3v1h-3zM245 504h1v1h-1zM302 504h1v1h-1zM307 504h3v1h-3zM315 504h1v1h-1zM464 504h1v1h-1zM466 504h3v1h-3zM244 505h1v1h-1zM303 505h1v1h-1zM310 505h1v1h-1zM315 505h1v1h-1zM472 505h1v1h-1zM243 506h2v1h-2zM303 506h1v1h-1zM315 506h1v1h-1zM472 506h1v1h-1zM242 507h2v1h-2zM304 507h1v1h-1zM471 507h1v1h-1zM241 508h2v1h-2zM301 508h1v1h-1zM304 508h1v1h-1zM471 508h1v1h-1zM241 509h3v1h-3zM294 509h1v1h-1zM302 509h3v1h-3zM470 509h1v1h-1zM240 510h3v1h-3zM295 510h1v1h-1zM304 510h2v1h-2zM470 510h1v1h-1zM479 510h1v1h-1zM241 511h1v1h-1zM295 511h1v1h-1zM469 511h1v1h-1zM475 511h1v1h-1zM478 511h1v1h-1zM240 512h2v1h-2zM296 512h1v1h-1zM469 512h1v1h-1zM473 512h2v1h-2zM478 512h1v1h-1zM239 513h2v1h-2zM294 513h1v1h-1zM296 513h1v1h-1zM468 513h1v1h-1zM472 513h1v1h-1zM477 513h1v1h-1zM239 514h1v1h-1zM241 514h1v1h-1zM294 514h2v1h-2zM297 514h1v1h-1zM339 514h1v1h-1zM477 514h1v1h-1zM239 515h3v1h-3zM295 515h3v1h-3zM339 515h1v1h-1zM476 515h1v1h-1zM238 516h1v1h-1zM240 516h1v1h-1zM295 516h1v1h-1zM297 516h2v1h-2zM338 516h1v1h-1zM434 516h1v1h-1zM476 516h2v1h-2zM239 517h1v1h-1zM294 517h2v1h-2zM338 517h1v1h-1zM434 517h1v1h-1zM475 517h2v1h-2zM238 518h2v1h-2zM295 518h2v1h-2zM337 518h2v1h-2zM434 518h2v1h-2zM475 518h1v1h-1zM480 518h1v1h-1zM534 518h1v1h-1zM237 519h3v1h-3zM296 519h1v1h-1zM337 519h1v1h-1zM433 519h1v1h-1zM435 519h1v1h-1zM480 519h1v1h-1zM533 519h1v1h-1zM535 519h1v1h-1zM238 520h1v1h-1zM337 520h1v1h-1zM433 520h4v1h-4zM479 520h1v1h-1zM533 520h4v1h-4zM237 521h1v1h-1zM336 521h2v1h-2zM433 521h4v1h-4zM534 521h1v1h-1zM536 521h2v1h-2zM236 522h1v1h-1zM238 522h1v1h-1zM336 522h1v1h-1zM434 522h4v1h-4zM532 522h2v1h-2zM535 522h1v1h-1zM235 523h3v1h-3zM336 523h1v1h-1zM434 523h4v1h-4zM533 523h4v1h-4zM434 524h1v1h-1zM436 524h1v1h-1zM438 524h1v1h-1zM533 524h1v1h-1zM536 524h1v1h-1zM335 525h1v1h-1zM434 525h1v1h-1zM436 525h3v1h-3zM531 525h2v1h-2zM534 525h1v1h-1zM435 526h1v1h-1zM437 526h1v1h-1zM532 526h4v1h-4zM435 527h1v1h-1zM437 527h1v1h-1zM532 527h1v1h-1zM535 527h1v1h-1zM342 528h2v1h-2zM435 528h1v1h-1zM530 528h2v1h-2zM533 528h1v1h-1zM298 529h1v1h-1zM341 529h1v1h-1zM435 529h1v1h-1zM530 529h1v1h-1zM532 529h3v1h-3zM436 530h1v1h-1zM531 530h1v1h-1zM534 530h1v1h-1zM352 531h1v1h-1zM376 531h1v1h-1zM422 531h1v1h-1zM436 531h1v1h-1zM472 531h1v1h-1zM532 531h1v1h-1zM353 532h1v1h-1zM376 532h2v1h-2zM384 532h2v1h-2zM423 532h3v1h-3zM471 532h2v1h-2zM529 532h4v1h-4zM302 533h1v1h-1zM354 533h1v1h-1zM375 533h1v1h-1zM377 533h1v1h-1zM384 533h2v1h-2zM470 533h2v1h-2zM529 533h1v1h-1zM532 533h2v1h-2zM303 534h3v1h-3zM354 534h1v1h-1zM375 534h1v1h-1zM377 534h1v1h-1zM384 534h2v1h-2zM411 534h1v1h-1zM469 534h2v1h-2zM530 534h1v1h-1zM303 535h1v1h-1zM355 535h1v1h-1zM375 535h1v1h-1zM377 535h1v1h-1zM383 535h1v1h-1zM386 535h1v1h-1zM410 535h1v1h-1zM469 535h1v1h-1zM531 535h1v1h-1zM304 536h1v1h-1zM374 536h1v1h-1zM378 536h1v1h-1zM383 536h1v1h-1zM386 536h1v1h-1zM408 536h2v1h-2zM466 536h1v1h-1zM468 536h1v1h-1zM528 536h4v1h-4zM308 537h1v1h-1zM374 537h1v1h-1zM378 537h1v1h-1zM382 537h1v1h-1zM386 537h1v1h-1zM407 537h1v1h-1zM465 537h1v1h-1zM531 537h2v1h-2zM309 538h1v1h-1zM374 538h1v1h-1zM378 538h1v1h-1zM382 538h1v1h-1zM386 538h1v1h-1zM464 538h1v1h-1zM460 539h1v1h-1zM312 540h2v1h-2zM459 540h1v1h-1zM314 541h2v1h-2zM455 541h2v1h-2zM459 541h1v1h-1zM316 542h2v1h-2zM453 542h2v1h-2zM458 542h1v1h-1zM451 543h1v1h-1zM458 543h1v1h-1zM449 544h2v1h-2zM448 545h1v1h-1zM444 546h3v1h-3zM440 547h2v1h-2zM443 547h1v1h-1zM429 548h4v1h-4zM434 548h6v1h-6zM421 550h1v1h-1zM421 551h1v1h-1zM420 552h1v1h-1zM420 553h1v1h-1zM419 554h1v1h-1zM343 570h1v1h-1zM350 570h1v1h-1zM352 570h1v1h-1zM359 570h2v1h-2zM367 570h1v1h-1zM369 570h1v1h-1zM376 570h2v1h-2zM343 571h1v1h-1zM349 571h1v1h-1zM352 571h1v1h-1zM358 571h1v1h-1zM361 571h1v1h-1zM366 571h1v1h-1zM369 571h1v1h-1zM375 571h1v1h-1zM377 571h1v1h-1zM385 571h1v1h-1zM344 572h1v1h-1zM349 572h1v1h-1zM353 572h1v1h-1zM357 572h1v1h-1zM362 572h1v1h-1zM365 572h1v1h-1zM370 572h1v1h-1zM374 572h1v1h-1zM378 572h1v1h-1zM384 572h1v1h-1zM386 572h1v1h-1zM345 573h1v1h-1zM348 573h1v1h-1zM354 573h1v1h-1zM356 573h1v1h-1zM362 573h1v1h-1zM364 573h1v1h-1zM371 573h1v1h-1zM373 573h1v1h-1zM379 573h1v1h-1zM383 573h1v1h-1zM386 573h1v1h-1zM393 573h1v1h-1zM346 574h2v1h-2zM355 574h1v1h-1zM371 574h2v1h-2zM379 574h1v1h-1zM381 574h2v1h-2zM387 574h1v1h-1zM391 574h2v1h-2zM388 575h1v1h-1zM390 575h1v1h-1zM388 576h2v1h-2z"/><path fill="#46327e" d="M333 485h1v1h-1zM328 486h1v1h-1zM333 486h1v1h-1zM428 486h1v1h-1zM323 487h1v1h-1zM328 487h1v1h-1zM333 487h1v1h-1zM429 487h1v1h-1zM439 487h1v1h-1zM323 488h1v1h-1zM328 488h1v1h-1zM334 488h1v1h-1zM429 488h1v1h-1zM439 488h1v1h-1zM323 489h1v1h-1zM329 489h1v1h-1zM334 489h1v1h-1zM346 489h1v1h-1zM430 489h1v1h-1zM438 489h1v1h-1zM324 490h1v1h-1zM329 490h1v1h-1zM334 490h1v1h-1zM438 490h1v1h-1zM459 490h1v1h-1zM324 491h1v1h-1zM329 491h1v1h-1zM335 491h1v1h-1zM437 491h1v1h-1zM444 491h1v1h-1zM459 491h1v1h-1zM325 492h1v1h-1zM330 492h1v1h-1zM335 492h1v1h-1zM437 492h1v1h-1zM445 492h1v1h-1zM458 492h1v1h-1zM325 493h1v1h-1zM330 493h1v1h-1zM335 493h1v1h-1zM436 493h1v1h-1zM446 493h1v1h-1zM458 493h1v1h-1zM462 493h1v1h-1zM325 494h1v1h-1zM330 494h1v1h-1zM336 494h1v1h-1zM436 494h1v1h-1zM457 494h1v1h-1zM462 494h1v1h-1zM466 494h1v1h-1zM326 495h1v1h-1zM331 495h1v1h-1zM435 495h1v1h-1zM457 495h1v1h-1zM461 495h1v1h-1zM466 495h1v1h-1zM307 496h1v1h-1zM313 496h1v1h-1zM326 496h1v1h-1zM456 496h1v1h-1zM461 496h1v1h-1zM465 496h1v1h-1zM308 497h1v1h-1zM314 497h3v1h-3zM456 497h1v1h-1zM460 497h1v1h-1zM465 497h1v1h-1zM308 498h1v1h-1zM455 498h1v1h-1zM460 498h1v1h-1zM464 498h1v1h-1zM308 499h1v1h-1zM455 499h1v1h-1zM459 499h1v1h-1zM464 499h1v1h-1zM250 500h1v1h-1zM309 500h1v1h-1zM459 500h1v1h-1zM463 500h1v1h-1zM249 501h1v1h-1zM302 501h1v1h-1zM309 501h1v1h-1zM458 501h1v1h-1zM463 501h1v1h-1zM248 502h1v1h-1zM303 502h2v1h-2zM310 502h1v1h-1zM462 502h1v1h-1zM247 503h2v1h-2zM305 503h1v1h-1zM310 503h1v1h-1zM246 504h2v1h-2zM296 504h1v1h-1zM310 504h1v1h-1zM470 504h3v1h-3zM476 504h1v1h-1zM245 505h2v1h-2zM296 505h2v1h-2zM311 505h1v1h-1zM476 505h1v1h-1zM245 506h1v1h-1zM296 506h1v1h-1zM298 506h2v1h-2zM475 506h1v1h-1zM297 507h1v1h-1zM300 507h1v1h-1zM475 507h1v1h-1zM297 508h1v1h-1zM474 508h1v1h-1zM295 509h1v1h-1zM297 509h1v1h-1zM474 509h1v1h-1zM296 510h1v1h-1zM298 510h1v1h-1zM473 510h1v1h-1zM477 510h2v1h-2zM297 511h2v1h-2zM473 511h1v1h-1zM476 511h1v1h-1zM298 512h2v1h-2zM472 512h1v1h-1zM244 513h1v1h-1zM299 513h1v1h-1zM481 513h2v1h-2zM530 513h1v1h-1zM244 514h1v1h-1zM480 514h2v1h-2zM529 514h1v1h-1zM531 514h1v1h-1zM243 515h1v1h-1zM292 515h1v1h-1zM479 515h2v1h-2zM530 515h1v1h-1zM532 515h1v1h-1zM242 516h1v1h-1zM291 516h1v1h-1zM293 516h1v1h-1zM342 516h1v1h-1zM480 516h1v1h-1zM530 516h4v1h-4zM241 517h3v1h-3zM292 517h2v1h-2zM341 517h1v1h-1zM479 517h1v1h-1zM529 517h1v1h-1zM531 517h1v1h-1zM533 517h2v1h-2zM240 518h2v1h-2zM243 518h1v1h-1zM292 518h3v1h-3zM341 518h1v1h-1zM479 518h1v1h-1zM530 518h3v1h-3zM242 519h1v1h-1zM293 519h2v1h-2zM341 519h1v1h-1zM427 519h1v1h-1zM478 519h2v1h-2zM532 519h1v1h-1zM241 520h1v1h-1zM294 520h2v1h-2zM340 520h1v1h-1zM427 520h1v1h-1zM478 520h1v1h-1zM240 521h3v1h-3zM340 521h1v1h-1zM427 521h1v1h-1zM239 522h2v1h-2zM340 522h1v1h-1zM427 522h1v1h-1zM340 523h1v1h-1zM428 523h1v1h-1zM339 524h1v1h-1zM428 524h1v1h-1zM339 525h1v1h-1zM428 525h1v1h-1zM339 526h1v1h-1zM428 526h1v1h-1zM525 526h1v1h-1zM338 527h1v1h-1zM345 527h1v1h-1zM364 527h1v1h-1zM428 527h1v1h-1zM526 527h1v1h-1zM338 528h1v1h-1zM346 528h2v1h-2zM363 528h1v1h-1zM398 528h1v1h-1zM429 528h1v1h-1zM526 528h1v1h-1zM338 529h1v1h-1zM349 529h2v1h-2zM363 529h1v1h-1zM398 529h1v1h-1zM429 529h1v1h-1zM527 529h1v1h-1zM299 530h2v1h-2zM337 530h1v1h-1zM351 530h1v1h-1zM363 530h1v1h-1zM399 530h1v1h-1zM429 530h1v1h-1zM474 530h1v1h-1zM524 530h4v1h-4zM300 531h2v1h-2zM337 531h1v1h-1zM362 531h1v1h-1zM399 531h1v1h-1zM417 531h4v1h-4zM429 531h1v1h-1zM471 531h1v1h-1zM525 531h1v1h-1zM527 531h2v1h-2zM301 532h2v1h-2zM362 532h1v1h-1zM399 532h1v1h-1zM414 532h2v1h-2zM430 532h1v1h-1zM470 532h1v1h-1zM525 532h1v1h-1zM362 533h1v1h-1zM399 533h1v1h-1zM412 533h2v1h-2zM430 533h1v1h-1zM469 533h1v1h-1zM526 533h1v1h-1zM361 534h1v1h-1zM400 534h1v1h-1zM430 534h1v1h-1zM523 534h2v1h-2zM526 534h1v1h-1zM308 535h1v1h-1zM361 535h1v1h-1zM400 535h1v1h-1zM465 535h1v1h-1zM525 535h3v1h-3zM309 536h1v1h-1zM361 536h1v1h-1zM400 536h1v1h-1zM464 536h1v1h-1zM310 537h1v1h-1zM361 537h1v1h-1zM400 537h1v1h-1zM464 537h1v1h-1zM310 538h1v1h-1zM400 538h1v1h-1zM459 538h2v1h-2zM463 538h1v1h-1zM311 539h1v1h-1zM313 539h1v1h-1zM458 539h1v1h-1zM463 539h1v1h-1zM314 540h1v1h-1zM450 540h1v1h-1zM457 540h1v1h-1zM445 541h1v1h-1zM449 541h1v1h-1zM440 542h1v1h-1zM445 542h1v1h-1zM448 542h1v1h-1zM440 543h1v1h-1zM444 543h1v1h-1zM448 543h1v1h-1zM439 544h1v1h-1zM443 544h1v1h-1zM447 544h1v1h-1zM439 545h1v1h-1zM443 545h1v1h-1zM447 545h1v1h-1zM438 546h1v1h-1zM442 546h1v1h-1zM438 547h1v1h-1zM442 547h1v1h-1zM424 548h4v1h-4zM347 565h2v1h-2zM355 565h1v1h-1zM381 565h1v1h-1zM339 566h1v1h-1zM346 566h1v1h-1zM349 566h1v1h-1zM354 566h1v1h-1zM382 566h1v1h-1zM340 567h1v1h-1zM345 567h1v1h-1zM349 567h1v1h-1zM353 567h1v1h-1zM383 567h1v1h-1zM389 567h2v1h-2zM341 568h1v1h-1zM344 568h1v1h-1zM350 568h1v1h-1zM352 568h1v1h-1zM383 568h1v1h-1zM388 568h1v1h-1zM391 568h1v1h-1zM398 568h1v1h-1zM342 569h2v1h-2zM351 569h1v1h-1zM384 569h1v1h-1zM387 569h1v1h-1zM391 569h1v1h-1zM397 569h1v1h-1zM384 570h1v1h-1zM386 570h1v1h-1zM392 570h1v1h-1zM396 570h1v1h-1zM393 571h1v1h-1zM395 571h1v1h-1zM393 572h2v1h-2z"/><path fill="#453781" d="M342 480h1v1h-1zM342 481h1v1h-1zM343 482h1v1h-1zM337 483h1v1h-1zM343 483h1v1h-1zM435 483h1v1h-1zM338 484h1v1h-1zM343 484h1v1h-1zM435 484h1v1h-1zM338 485h1v1h-1zM344 485h1v1h-1zM434 485h1v1h-1zM451 485h1v1h-1zM338 486h1v1h-1zM344 486h1v1h-1zM434 486h1v1h-1zM440 486h1v1h-1zM451 486h1v1h-1zM318 487h1v1h-1zM339 487h1v1h-1zM345 487h1v1h-1zM433 487h1v1h-1zM441 487h1v1h-1zM450 487h1v1h-1zM313 488h1v1h-1zM318 488h1v1h-1zM339 488h1v1h-1zM345 488h1v1h-1zM433 488h1v1h-1zM441 488h1v1h-1zM450 488h1v1h-1zM455 488h1v1h-1zM314 489h1v1h-1zM318 489h1v1h-1zM339 489h1v1h-1zM432 489h1v1h-1zM442 489h1v1h-1zM449 489h1v1h-1zM455 489h1v1h-1zM314 490h1v1h-1zM319 490h1v1h-1zM340 490h1v1h-1zM431 490h1v1h-1zM449 490h1v1h-1zM454 490h1v1h-1zM314 491h1v1h-1zM319 491h1v1h-1zM340 491h1v1h-1zM448 491h1v1h-1zM454 491h1v1h-1zM315 492h1v1h-1zM320 492h1v1h-1zM448 492h1v1h-1zM453 492h1v1h-1zM315 493h1v1h-1zM320 493h1v1h-1zM447 493h1v1h-1zM453 493h1v1h-1zM316 494h1v1h-1zM320 494h1v1h-1zM452 494h1v1h-1zM255 495h1v1h-1zM303 495h1v1h-1zM308 495h1v1h-1zM316 495h1v1h-1zM321 495h1v1h-1zM452 495h1v1h-1zM470 495h1v1h-1zM254 496h1v1h-1zM303 496h1v1h-1zM309 496h3v1h-3zM316 496h1v1h-1zM321 496h1v1h-1zM451 496h1v1h-1zM469 496h1v1h-1zM473 496h1v1h-1zM253 497h1v1h-1zM304 497h1v1h-1zM317 497h1v1h-1zM469 497h1v1h-1zM473 497h1v1h-1zM252 498h1v1h-1zM304 498h1v1h-1zM468 498h1v1h-1zM472 498h1v1h-1zM251 499h1v1h-1zM297 499h1v1h-1zM304 499h1v1h-1zM468 499h1v1h-1zM472 499h1v1h-1zM297 500h1v1h-1zM305 500h1v1h-1zM467 500h1v1h-1zM471 500h1v1h-1zM298 501h1v1h-1zM305 501h1v1h-1zM467 501h1v1h-1zM471 501h1v1h-1zM298 502h1v1h-1zM306 502h1v1h-1zM466 502h1v1h-1zM470 502h1v1h-1zM480 502h1v1h-1zM298 503h1v1h-1zM306 503h1v1h-1zM466 503h1v1h-1zM470 503h1v1h-1zM475 503h2v1h-2zM480 503h1v1h-1zM248 504h1v1h-1zM299 504h1v1h-1zM469 504h1v1h-1zM473 504h2v1h-2zM479 504h1v1h-1zM247 505h1v1h-1zM299 505h1v1h-1zM479 505h1v1h-1zM246 506h2v1h-2zM300 506h1v1h-1zM478 506h1v1h-1zM245 507h2v1h-2zM478 507h1v1h-1zM244 508h2v1h-2zM477 508h1v1h-1zM482 508h1v1h-1zM244 509h3v1h-3zM477 509h1v1h-1zM482 509h1v1h-1zM527 509h1v1h-1zM243 510h3v1h-3zM476 510h1v1h-1zM481 510h1v1h-1zM527 510h2v1h-2zM242 511h3v1h-3zM481 511h1v1h-1zM528 511h2v1h-2zM243 512h1v1h-1zM480 512h1v1h-1zM529 512h2v1h-2zM242 513h2v1h-2zM480 513h1v1h-1zM242 514h1v1h-1zM479 514h1v1h-1zM247 515h1v1h-1zM478 515h1v1h-1zM247 516h1v1h-1zM341 516h1v1h-1zM246 517h1v1h-1zM528 517h1v1h-1zM245 518h1v1h-1zM340 518h1v1h-1zM529 518h1v1h-1zM244 519h1v1h-1zM339 519h1v1h-1zM527 519h1v1h-1zM530 519h1v1h-1zM243 520h4v1h-4zM339 520h1v1h-1zM528 520h3v1h-3zM243 521h1v1h-1zM428 521h1v1h-1zM528 521h1v1h-1zM530 521h2v1h-2zM429 522h1v1h-1zM526 522h1v1h-1zM529 522h1v1h-1zM430 523h1v1h-1zM526 523h3v1h-3zM530 523h1v1h-1zM430 524h1v1h-1zM527 524h1v1h-1zM529 524h2v1h-2zM431 525h1v1h-1zM528 525h1v1h-1zM364 526h1v1h-1zM526 526h1v1h-1zM528 526h1v1h-1zM365 527h1v1h-1zM398 527h1v1h-1zM527 527h3v1h-3zM365 528h1v1h-1zM397 528h1v1h-1zM519 528h1v1h-1zM366 529h1v1h-1zM397 529h1v1h-1zM520 529h1v1h-1zM366 530h1v1h-1zM396 530h1v1h-1zM520 530h1v1h-1zM302 531h1v1h-1zM366 531h1v1h-1zM396 531h1v1h-1zM469 531h1v1h-1zM521 531h1v1h-1zM303 532h1v1h-1zM367 532h1v1h-1zM395 532h1v1h-1zM469 532h1v1h-1zM521 532h1v1h-1zM303 533h1v1h-1zM305 533h1v1h-1zM367 533h1v1h-1zM395 533h1v1h-1zM468 533h1v1h-1zM519 533h4v1h-4zM306 534h1v1h-1zM367 534h1v1h-1zM394 534h1v1h-1zM465 534h1v1h-1zM468 534h1v1h-1zM522 534h1v1h-1zM306 535h1v1h-1zM394 535h1v1h-1zM459 535h1v1h-1zM463 535h2v1h-2zM467 535h1v1h-1zM307 536h1v1h-1zM459 536h1v1h-1zM455 537h1v1h-1zM458 537h1v1h-1zM454 538h1v1h-1zM458 538h1v1h-1zM454 539h1v1h-1zM457 539h1v1h-1zM453 540h1v1h-1zM456 540h1v1h-1zM453 541h1v1h-1zM452 542h1v1h-1zM435 543h1v1h-1zM452 543h1v1h-1zM435 544h1v1h-1zM429 545h1v1h-1zM434 545h1v1h-1zM429 546h1v1h-1zM434 546h1v1h-1zM428 547h1v1h-1zM433 547h1v1h-1zM428 548h1v1h-1zM433 548h1v1h-1zM343 560h1v1h-1zM336 561h1v1h-1zM342 561h1v1h-1zM336 562h1v1h-1zM341 562h1v1h-1zM395 562h1v1h-1zM337 563h1v1h-1zM341 563h1v1h-1zM395 563h1v1h-1zM338 564h1v1h-1zM340 564h1v1h-1zM356 564h1v1h-1zM364 564h2v1h-2zM373 564h1v1h-1zM396 564h1v1h-1zM339 565h1v1h-1zM357 565h1v1h-1zM363 565h1v1h-1zM365 565h1v1h-1zM372 565h2v1h-2zM396 565h1v1h-1zM402 565h1v1h-1zM357 566h1v1h-1zM362 566h1v1h-1zM366 566h1v1h-1zM371 566h1v1h-1zM374 566h1v1h-1zM380 566h1v1h-1zM397 566h1v1h-1zM400 566h2v1h-2zM358 567h1v1h-1zM361 567h1v1h-1zM367 567h1v1h-1zM370 567h1v1h-1zM375 567h1v1h-1zM379 567h1v1h-1zM398 567h2v1h-2zM359 568h2v1h-2zM367 568h1v1h-1zM369 568h1v1h-1zM375 568h1v1h-1zM378 568h1v1h-1zM359 569h2v1h-2zM368 569h1v1h-1zM376 569h2v1h-2z"/><path fill="#443b84" d="M347 477h1v1h-1zM347 478h1v1h-1zM432 478h1v1h-1zM347 479h1v1h-1zM431 479h1v1h-1zM348 480h1v1h-1zM430 480h1v1h-1zM348 481h1v1h-1zM425 481h1v1h-1zM430 481h1v1h-1zM448 481h1v1h-1zM335 482h2v1h-2zM425 482h1v1h-1zM429 482h1v1h-1zM436 482h1v1h-1zM448 482h1v1h-1zM333 483h2v1h-2zM426 483h1v1h-1zM429 483h1v1h-1zM437 483h1v1h-1zM447 483h1v1h-1zM330 484h3v1h-3zM427 484h2v1h-2zM438 484h1v1h-1zM447 484h1v1h-1zM327 485h3v1h-3zM427 485h2v1h-2zM439 485h1v1h-1zM446 485h1v1h-1zM322 486h5v1h-5zM445 486h1v1h-1zM319 487h3v1h-3zM445 487h1v1h-1zM309 488h1v1h-1zM444 488h1v1h-1zM456 488h2v1h-2zM309 489h1v1h-1zM444 489h1v1h-1zM458 489h1v1h-1zM309 490h1v1h-1zM443 490h1v1h-1zM460 490h1v1h-1zM310 491h1v1h-1zM461 491h2v1h-2zM298 492h1v1h-1zM310 492h1v1h-1zM463 492h3v1h-3zM298 493h1v1h-1zM311 493h1v1h-1zM466 493h3v1h-3zM298 494h1v1h-1zM303 494h2v1h-2zM311 494h1v1h-1zM469 494h1v1h-1zM299 495h1v1h-1zM305 495h3v1h-3zM311 495h1v1h-1zM477 495h1v1h-1zM299 496h1v1h-1zM312 496h1v1h-1zM477 496h1v1h-1zM300 497h1v1h-1zM476 497h1v1h-1zM300 498h1v1h-1zM476 498h1v1h-1zM252 499h1v1h-1zM298 499h1v1h-1zM300 499h1v1h-1zM475 499h1v1h-1zM251 500h1v1h-1zM299 500h3v1h-3zM475 500h1v1h-1zM250 501h2v1h-2zM291 501h2v1h-2zM301 501h1v1h-1zM474 501h1v1h-1zM249 502h3v1h-3zM291 502h1v1h-1zM293 502h1v1h-1zM474 502h1v1h-1zM479 502h1v1h-1zM483 502h1v1h-1zM249 503h2v1h-2zM292 503h1v1h-1zM294 503h1v1h-1zM473 503h1v1h-1zM477 503h2v1h-2zM483 503h1v1h-1zM249 504h2v1h-2zM292 504h1v1h-1zM295 504h1v1h-1zM482 504h1v1h-1zM523 504h1v1h-1zM248 505h2v1h-2zM290 505h1v1h-1zM293 505h1v1h-1zM482 505h1v1h-1zM523 505h2v1h-2zM249 506h1v1h-1zM290 506h2v1h-2zM293 506h1v1h-1zM481 506h1v1h-1zM524 506h2v1h-2zM248 507h2v1h-2zM291 507h4v1h-4zM480 507h1v1h-1zM482 507h1v1h-1zM525 507h2v1h-2zM247 508h3v1h-3zM289 508h1v1h-1zM291 508h1v1h-1zM294 508h1v1h-1zM480 508h2v1h-2zM526 508h1v1h-1zM248 509h1v1h-1zM289 509h2v1h-2zM292 509h1v1h-1zM479 509h2v1h-2zM247 510h1v1h-1zM288 510h1v1h-1zM290 510h3v1h-3zM485 510h1v1h-1zM526 510h1v1h-1zM246 511h3v1h-3zM288 511h3v1h-3zM292 511h2v1h-2zM345 511h1v1h-1zM484 511h2v1h-2zM525 511h1v1h-1zM527 511h1v1h-1zM245 512h3v1h-3zM289 512h3v1h-3zM293 512h1v1h-1zM345 512h1v1h-1zM482 512h3v1h-3zM525 512h3v1h-3zM247 513h1v1h-1zM289 513h1v1h-1zM291 513h1v1h-1zM345 513h1v1h-1zM483 513h1v1h-1zM526 513h3v1h-3zM246 514h1v1h-1zM251 514h1v1h-1zM290 514h1v1h-1zM292 514h1v1h-1zM345 514h1v1h-1zM422 514h1v1h-1zM483 514h2v1h-2zM524 514h3v1h-3zM528 514h1v1h-1zM245 515h2v1h-2zM250 515h1v1h-1zM344 515h1v1h-1zM422 515h1v1h-1zM482 515h2v1h-2zM524 515h1v1h-1zM526 515h2v1h-2zM244 516h2v1h-2zM249 516h1v1h-1zM344 516h1v1h-1zM422 516h1v1h-1zM481 516h3v1h-3zM525 516h1v1h-1zM527 516h2v1h-2zM248 517h1v1h-1zM344 517h1v1h-1zM422 517h1v1h-1zM481 517h3v1h-3zM523 517h2v1h-2zM526 517h1v1h-1zM248 518h1v1h-1zM291 518h1v1h-1zM344 518h1v1h-1zM360 518h1v1h-1zM423 518h1v1h-1zM481 518h2v1h-2zM523 518h1v1h-1zM525 518h2v1h-2zM247 519h3v1h-3zM343 519h1v1h-1zM360 519h1v1h-1zM423 519h1v1h-1zM524 519h1v1h-1zM343 520h1v1h-1zM360 520h1v1h-1zM403 520h1v1h-1zM423 520h1v1h-1zM521 520h3v1h-3zM525 520h1v1h-1zM343 521h1v1h-1zM359 521h1v1h-1zM403 521h1v1h-1zM423 521h1v1h-1zM522 521h1v1h-1zM524 521h2v1h-2zM343 522h1v1h-1zM359 522h1v1h-1zM403 522h1v1h-1zM423 522h1v1h-1zM523 522h1v1h-1zM342 523h1v1h-1zM359 523h1v1h-1zM403 523h1v1h-1zM424 523h1v1h-1zM523 523h1v1h-1zM342 524h1v1h-1zM359 524h1v1h-1zM404 524h1v1h-1zM424 524h1v1h-1zM520 524h3v1h-3zM524 524h1v1h-1zM342 525h1v1h-1zM358 525h1v1h-1zM404 525h1v1h-1zM424 525h1v1h-1zM521 525h1v1h-1zM523 525h2v1h-2zM341 526h1v1h-1zM358 526h1v1h-1zM404 526h1v1h-1zM424 526h1v1h-1zM514 526h1v1h-1zM522 526h1v1h-1zM341 527h1v1h-1zM358 527h1v1h-1zM404 527h1v1h-1zM424 527h1v1h-1zM515 527h1v1h-1zM522 527h1v1h-1zM341 528h1v1h-1zM358 528h1v1h-1zM404 528h1v1h-1zM425 528h1v1h-1zM515 528h1v1h-1zM520 528h2v1h-2zM523 528h1v1h-1zM357 529h1v1h-1zM405 529h1v1h-1zM425 529h1v1h-1zM516 529h1v1h-1zM522 529h2v1h-2zM357 530h1v1h-1zM405 530h1v1h-1zM425 530h1v1h-1zM517 530h1v1h-1zM357 531h1v1h-1zM405 531h1v1h-1zM425 531h1v1h-1zM513 531h3v1h-3zM517 531h1v1h-1zM356 532h1v1h-1zM405 532h1v1h-1zM516 532h3v1h-3zM356 533h1v1h-1zM405 533h1v1h-1zM463 533h1v1h-1zM356 534h1v1h-1zM406 534h1v1h-1zM463 534h1v1h-1zM356 535h1v1h-1zM406 535h1v1h-1zM462 535h1v1h-1zM406 536h1v1h-1zM462 536h1v1h-1zM406 537h1v1h-1zM453 537h2v1h-2zM461 537h1v1h-1zM452 538h1v1h-1zM448 539h3v1h-3zM444 540h2v1h-2zM447 540h1v1h-1zM438 541h3v1h-3zM442 541h2v1h-2zM437 542h1v1h-1zM339 555h1v1h-1zM332 556h1v1h-1zM339 556h1v1h-1zM332 557h1v1h-1zM338 557h1v1h-1zM333 558h1v1h-1zM337 558h1v1h-1zM361 558h1v1h-1zM400 558h1v1h-1zM334 559h1v1h-1zM336 559h1v1h-1zM352 559h2v1h-2zM360 559h2v1h-2zM368 559h1v1h-1zM370 559h1v1h-1zM377 559h2v1h-2zM400 559h1v1h-1zM335 560h2v1h-2zM344 560h1v1h-1zM351 560h1v1h-1zM353 560h1v1h-1zM359 560h1v1h-1zM362 560h1v1h-1zM367 560h1v1h-1zM370 560h1v1h-1zM376 560h1v1h-1zM378 560h1v1h-1zM386 560h1v1h-1zM401 560h1v1h-1zM407 560h1v1h-1zM345 561h1v1h-1zM350 561h1v1h-1zM354 561h1v1h-1zM358 561h1v1h-1zM363 561h1v1h-1zM367 561h1v1h-1zM371 561h1v1h-1zM375 561h1v1h-1zM379 561h1v1h-1zM385 561h1v1h-1zM387 561h1v1h-1zM401 561h1v1h-1zM406 561h1v1h-1zM346 562h1v1h-1zM349 562h1v1h-1zM355 562h1v1h-1zM357 562h1v1h-1zM363 562h1v1h-1zM366 562h1v1h-1zM372 562h1v1h-1zM375 562h1v1h-1zM380 562h1v1h-1zM384 562h1v1h-1zM387 562h1v1h-1zM394 562h1v1h-1zM402 562h1v1h-1zM405 562h1v1h-1zM346 563h1v1h-1zM348 563h1v1h-1zM355 563h2v1h-2zM364 563h2v1h-2zM372 563h1v1h-1zM374 563h1v1h-1zM380 563h1v1h-1zM383 563h1v1h-1zM388 563h1v1h-1zM393 563h1v1h-1zM403 563h2v1h-2zM347 564h2v1h-2zM381 564h2v1h-2zM388 564h1v1h-1zM392 564h1v1h-1zM403 564h1v1h-1zM389 565h1v1h-1zM391 565h1v1h-1zM390 566h1v1h-1z"/><path fill="#424086" d="M428 473h1v1h-1zM427 474h1v1h-1zM427 475h1v1h-1zM329 476h1v1h-1zM346 476h1v1h-1zM426 476h1v1h-1zM324 477h1v1h-1zM329 477h1v1h-1zM345 477h1v1h-1zM425 477h1v1h-1zM432 477h1v1h-1zM319 478h1v1h-1zM324 478h1v1h-1zM330 478h1v1h-1zM343 478h2v1h-2zM425 478h1v1h-1zM433 478h1v1h-1zM444 478h1v1h-1zM319 479h1v1h-1zM325 479h1v1h-1zM330 479h1v1h-1zM341 479h1v1h-1zM424 479h1v1h-1zM434 479h1v1h-1zM443 479h1v1h-1zM320 480h1v1h-1zM325 480h1v1h-1zM331 480h1v1h-1zM340 480h1v1h-1zM435 480h1v1h-1zM443 480h1v1h-1zM320 481h1v1h-1zM326 481h1v1h-1zM331 481h1v1h-1zM338 481h2v1h-2zM442 481h1v1h-1zM321 482h1v1h-1zM326 482h1v1h-1zM331 482h1v1h-1zM337 482h1v1h-1zM442 482h1v1h-1zM449 482h1v1h-1zM463 482h1v1h-1zM321 483h1v1h-1zM326 483h1v1h-1zM332 483h1v1h-1zM441 483h1v1h-1zM450 483h1v1h-1zM463 483h1v1h-1zM322 484h1v1h-1zM327 484h1v1h-1zM441 484h1v1h-1zM451 484h2v1h-2zM462 484h1v1h-1zM467 484h1v1h-1zM322 485h1v1h-1zM440 485h1v1h-1zM453 485h1v1h-1zM462 485h1v1h-1zM467 485h1v1h-1zM471 485h1v1h-1zM454 486h1v1h-1zM461 486h1v1h-1zM466 486h1v1h-1zM471 486h1v1h-1zM304 487h1v1h-1zM309 487h4v1h-4zM314 487h4v1h-4zM455 487h1v1h-1zM461 487h1v1h-1zM465 487h1v1h-1zM470 487h1v1h-1zM304 488h1v1h-1zM460 488h1v1h-1zM465 488h1v1h-1zM469 488h1v1h-1zM305 489h1v1h-1zM460 489h1v1h-1zM464 489h1v1h-1zM469 489h1v1h-1zM305 490h1v1h-1zM464 490h1v1h-1zM468 490h1v1h-1zM293 491h1v1h-1zM305 491h1v1h-1zM463 491h1v1h-1zM468 491h1v1h-1zM294 492h1v1h-1zM299 492h1v1h-1zM306 492h1v1h-1zM467 492h1v1h-1zM294 493h1v1h-1zM300 493h2v1h-2zM306 493h1v1h-1zM257 494h1v1h-1zM294 494h1v1h-1zM302 494h1v1h-1zM307 494h1v1h-1zM471 494h3v1h-3zM256 495h1v1h-1zM295 495h1v1h-1zM474 495h3v1h-3zM481 495h1v1h-1zM255 496h1v1h-1zM292 496h2v1h-2zM295 496h1v1h-1zM480 496h1v1h-1zM254 497h1v1h-1zM292 497h1v1h-1zM294 497h3v1h-3zM480 497h1v1h-1zM253 498h1v1h-1zM293 498h1v1h-1zM296 498h1v1h-1zM479 498h1v1h-1zM293 499h1v1h-1zM479 499h1v1h-1zM519 499h1v1h-1zM294 500h1v1h-1zM478 500h1v1h-1zM487 500h1v1h-1zM520 500h1v1h-1zM294 501h1v1h-1zM478 501h1v1h-1zM482 501h2v1h-2zM487 501h1v1h-1zM521 501h1v1h-1zM295 502h1v1h-1zM477 502h1v1h-1zM481 502h1v1h-1zM486 502h1v1h-1zM522 502h1v1h-1zM295 503h1v1h-1zM430 503h1v1h-1zM485 503h1v1h-1zM430 504h1v1h-1zM485 504h1v1h-1zM253 505h1v1h-1zM343 505h1v1h-1zM431 505h1v1h-1zM484 505h1v1h-1zM486 505h1v1h-1zM522 505h1v1h-1zM252 506h1v1h-1zM342 506h1v1h-1zM431 506h1v1h-1zM483 506h4v1h-4zM521 506h1v1h-1zM523 506h1v1h-1zM252 507h1v1h-1zM342 507h1v1h-1zM432 507h1v1h-1zM483 507h1v1h-1zM485 507h1v1h-1zM521 507h2v1h-2zM524 507h1v1h-1zM251 508h1v1h-1zM342 508h1v1h-1zM349 508h1v1h-1zM432 508h1v1h-1zM485 508h1v1h-1zM522 508h3v1h-3zM250 509h3v1h-3zM341 509h2v1h-2zM349 509h1v1h-1zM428 509h1v1h-1zM432 509h1v1h-1zM484 509h1v1h-1zM521 509h1v1h-1zM523 509h1v1h-1zM525 509h1v1h-1zM249 510h3v1h-3zM341 510h1v1h-1zM349 510h1v1h-1zM428 510h2v1h-2zM433 510h1v1h-1zM483 510h1v1h-1zM522 510h3v1h-3zM251 511h1v1h-1zM340 511h2v1h-2zM349 511h1v1h-1zM428 511h2v1h-2zM433 511h1v1h-1zM483 511h1v1h-1zM524 511h1v1h-1zM250 512h1v1h-1zM287 512h1v1h-1zM340 512h2v1h-2zM348 512h1v1h-1zM417 512h1v1h-1zM429 512h2v1h-2zM433 512h1v1h-1zM249 513h1v1h-1zM287 513h2v1h-2zM340 513h1v1h-1zM348 513h1v1h-1zM356 513h1v1h-1zM417 513h1v1h-1zM429 513h2v1h-2zM434 513h1v1h-1zM248 514h3v1h-3zM288 514h2v1h-2zM340 514h1v1h-1zM348 514h1v1h-1zM356 514h1v1h-1zM408 514h1v1h-1zM418 514h1v1h-1zM429 514h1v1h-1zM431 514h1v1h-1zM434 514h1v1h-1zM248 515h1v1h-1zM289 515h2v1h-2zM340 515h1v1h-1zM348 515h1v1h-1zM356 515h1v1h-1zM408 515h1v1h-1zM418 515h1v1h-1zM429 515h1v1h-1zM431 515h1v1h-1zM290 516h1v1h-1zM340 516h1v1h-1zM347 516h1v1h-1zM356 516h1v1h-1zM408 516h1v1h-1zM418 516h1v1h-1zM429 516h1v1h-1zM432 516h1v1h-1zM435 516h1v1h-1zM290 517h1v1h-1zM339 517h1v1h-1zM347 517h1v1h-1zM355 517h1v1h-1zM408 517h1v1h-1zM418 517h1v1h-1zM430 517h1v1h-1zM432 517h1v1h-1zM251 518h3v1h-3zM339 518h1v1h-1zM347 518h1v1h-1zM355 518h1v1h-1zM408 518h1v1h-1zM418 518h1v1h-1zM430 518h1v1h-1zM432 518h1v1h-1zM517 518h1v1h-1zM347 519h1v1h-1zM355 519h1v1h-1zM372 519h2v1h-2zM389 519h2v1h-2zM408 519h1v1h-1zM419 519h1v1h-1zM430 519h1v1h-1zM517 519h1v1h-1zM338 520h1v1h-1zM346 520h1v1h-1zM355 520h1v1h-1zM372 520h2v1h-2zM389 520h2v1h-2zM409 520h1v1h-1zM419 520h1v1h-1zM430 520h1v1h-1zM518 520h1v1h-1zM346 521h1v1h-1zM354 521h1v1h-1zM372 521h2v1h-2zM389 521h2v1h-2zM409 521h1v1h-1zM419 521h1v1h-1zM430 521h1v1h-1zM516 521h1v1h-1zM519 521h1v1h-1zM346 522h1v1h-1zM354 522h1v1h-1zM371 522h1v1h-1zM374 522h1v1h-1zM388 522h1v1h-1zM390 522h1v1h-1zM409 522h1v1h-1zM419 522h1v1h-1zM431 522h1v1h-1zM516 522h4v1h-4zM346 523h1v1h-1zM354 523h1v1h-1zM371 523h1v1h-1zM374 523h1v1h-1zM388 523h1v1h-1zM390 523h1v1h-1zM409 523h1v1h-1zM419 523h1v1h-1zM431 523h1v1h-1zM516 523h1v1h-1zM519 523h2v1h-2zM345 524h1v1h-1zM354 524h1v1h-1zM371 524h1v1h-1zM374 524h1v1h-1zM387 524h1v1h-1zM391 524h1v1h-1zM409 524h1v1h-1zM419 524h1v1h-1zM431 524h1v1h-1zM517 524h1v1h-1zM345 525h1v1h-1zM353 525h1v1h-1zM371 525h1v1h-1zM375 525h1v1h-1zM387 525h1v1h-1zM391 525h1v1h-1zM410 525h1v1h-1zM420 525h1v1h-1zM517 525h1v1h-1zM345 526h1v1h-1zM353 526h1v1h-1zM370 526h1v1h-1zM375 526h1v1h-1zM387 526h1v1h-1zM391 526h1v1h-1zM410 526h1v1h-1zM420 526h1v1h-1zM515 526h2v1h-2zM518 526h1v1h-1zM353 527h1v1h-1zM370 527h1v1h-1zM375 527h1v1h-1zM386 527h1v1h-1zM391 527h1v1h-1zM410 527h1v1h-1zM420 527h1v1h-1zM517 527h3v1h-3zM353 528h1v1h-1zM370 528h1v1h-1zM375 528h1v1h-1zM386 528h1v1h-1zM391 528h1v1h-1zM410 528h1v1h-1zM420 528h1v1h-1zM352 529h1v1h-1zM369 529h1v1h-1zM376 529h1v1h-1zM386 529h1v1h-1zM392 529h1v1h-1zM410 529h1v1h-1zM420 529h1v1h-1zM509 529h1v1h-1zM352 530h1v1h-1zM369 530h1v1h-1zM385 530h1v1h-1zM392 530h1v1h-1zM411 530h1v1h-1zM421 530h1v1h-1zM510 530h3v1h-3zM369 531h1v1h-1zM385 531h1v1h-1zM392 531h1v1h-1zM411 531h1v1h-1zM369 532h1v1h-1zM392 532h1v1h-1zM411 532h1v1h-1zM467 532h1v1h-1zM368 533h1v1h-1zM393 533h1v1h-1zM411 533h1v1h-1zM462 533h1v1h-1zM466 533h1v1h-1zM368 534h1v1h-1zM393 534h1v1h-1zM459 534h2v1h-2zM393 535h1v1h-1zM457 535h2v1h-2zM452 536h1v1h-1zM456 536h1v1h-1zM448 537h1v1h-1zM451 537h1v1h-1zM447 538h1v1h-1zM451 538h1v1h-1zM446 539h1v1h-1zM441 540h1v1h-1zM446 540h1v1h-1zM441 541h1v1h-1zM436 542h1v1h-1zM328 552h1v1h-1zM329 553h1v1h-1zM330 554h1v1h-1zM348 554h2v1h-2zM356 554h1v1h-1zM382 554h1v1h-1zM331 555h1v1h-1zM340 555h1v1h-1zM347 555h1v1h-1zM350 555h1v1h-1zM355 555h1v1h-1zM383 555h1v1h-1zM341 556h1v1h-1zM346 556h1v1h-1zM350 556h1v1h-1zM354 556h1v1h-1zM384 556h1v1h-1zM390 556h2v1h-2zM412 556h1v1h-1zM342 557h1v1h-1zM345 557h1v1h-1zM351 557h1v1h-1zM353 557h1v1h-1zM384 557h1v1h-1zM389 557h1v1h-1zM392 557h1v1h-1zM399 557h1v1h-1zM411 557h1v1h-1zM343 558h1v1h-1zM345 558h1v1h-1zM352 558h1v1h-1zM385 558h1v1h-1zM388 558h1v1h-1zM392 558h1v1h-1zM398 558h1v1h-1zM409 558h2v1h-2zM343 559h2v1h-2zM385 559h1v1h-1zM387 559h1v1h-1zM393 559h1v1h-1zM397 559h1v1h-1zM408 559h1v1h-1zM394 560h1v1h-1zM396 560h1v1h-1zM394 561h2v1h-2z"/><path fill="#404588" d="M338 471h1v1h-1zM338 472h1v1h-1zM429 472h1v1h-1zM339 473h1v1h-1zM429 473h1v1h-1zM334 474h1v1h-1zM339 474h1v1h-1zM349 474h2v1h-2zM430 474h1v1h-1zM440 474h2v1h-2zM334 475h1v1h-1zM340 475h1v1h-1zM348 475h1v1h-1zM431 475h1v1h-1zM440 475h1v1h-1zM442 475h1v1h-1zM334 476h1v1h-1zM340 476h1v1h-1zM347 476h1v1h-1zM432 476h1v1h-1zM439 476h1v1h-1zM443 476h1v1h-1zM335 477h1v1h-1zM341 477h1v1h-1zM439 477h1v1h-1zM444 477h1v1h-1zM456 477h1v1h-1zM335 478h1v1h-1zM341 478h1v1h-1zM438 478h1v1h-1zM445 478h1v1h-1zM456 478h1v1h-1zM314 479h1v1h-1zM336 479h1v1h-1zM342 479h1v1h-1zM437 479h1v1h-1zM446 479h1v1h-1zM455 479h1v1h-1zM460 479h1v1h-1zM310 480h1v1h-1zM315 480h1v1h-1zM336 480h1v1h-1zM437 480h1v1h-1zM447 480h1v1h-1zM454 480h1v1h-1zM460 480h1v1h-1zM310 481h1v1h-1zM315 481h1v1h-1zM337 481h1v1h-1zM436 481h1v1h-1zM454 481h1v1h-1zM459 481h1v1h-1zM311 482h1v1h-1zM316 482h1v1h-1zM453 482h1v1h-1zM458 482h1v1h-1zM311 483h1v1h-1zM316 483h1v1h-1zM453 483h1v1h-1zM458 483h1v1h-1zM312 484h1v1h-1zM316 484h1v1h-1zM457 484h1v1h-1zM299 485h1v1h-1zM312 485h1v1h-1zM317 485h1v1h-1zM457 485h1v1h-1zM299 486h8v1h-8zM312 486h1v1h-1zM317 486h1v1h-1zM456 486h1v1h-1zM299 487h1v1h-1zM307 487h2v1h-2zM313 487h1v1h-1zM456 487h1v1h-1zM474 487h1v1h-1zM478 487h1v1h-1zM263 488h1v1h-1zM300 488h1v1h-1zM474 488h1v1h-1zM478 488h1v1h-1zM262 489h1v1h-1zM300 489h1v1h-1zM473 489h1v1h-1zM477 489h1v1h-1zM261 490h1v1h-1zM301 490h1v1h-1zM473 490h1v1h-1zM477 490h1v1h-1zM260 491h1v1h-1zM294 491h3v1h-3zM301 491h1v1h-1zM472 491h1v1h-1zM476 491h1v1h-1zM259 492h1v1h-1zM297 492h1v1h-1zM302 492h1v1h-1zM471 492h1v1h-1zM475 492h1v1h-1zM302 493h1v1h-1zM471 493h1v1h-1zM475 493h1v1h-1zM287 494h3v1h-3zM470 494h1v1h-1zM474 494h1v1h-1zM480 494h5v1h-5zM288 495h1v1h-1zM290 495h2v1h-2zM478 495h2v1h-2zM484 495h1v1h-1zM256 496h1v1h-1zM288 496h1v1h-1zM484 496h1v1h-1zM516 496h1v1h-1zM255 497h1v1h-1zM289 497h1v1h-1zM483 497h1v1h-1zM516 497h2v1h-2zM254 498h1v1h-1zM286 498h2v1h-2zM289 498h1v1h-1zM483 498h1v1h-1zM517 498h2v1h-2zM253 499h3v1h-3zM287 499h4v1h-4zM482 499h1v1h-1zM252 500h3v1h-3zM287 500h1v1h-1zM290 500h1v1h-1zM481 500h1v1h-1zM485 500h2v1h-2zM518 500h1v1h-1zM252 501h2v1h-2zM285 501h1v1h-1zM288 501h1v1h-1zM343 501h1v1h-1zM481 501h1v1h-1zM484 501h1v1h-1zM519 501h2v1h-2zM252 502h3v1h-3zM285 502h2v1h-2zM288 502h1v1h-1zM343 502h1v1h-1zM520 502h2v1h-2zM251 503h3v1h-3zM286 503h4v1h-4zM429 503h1v1h-1zM489 503h2v1h-2zM519 503h4v1h-4zM252 504h1v1h-1zM284 504h1v1h-1zM286 504h1v1h-1zM289 504h1v1h-1zM342 504h1v1h-1zM429 504h1v1h-1zM487 504h3v1h-3zM521 504h1v1h-1zM251 505h2v1h-2zM285 505h3v1h-3zM342 505h1v1h-1zM429 505h2v1h-2zM489 505h1v1h-1zM250 506h2v1h-2zM283 506h1v1h-1zM285 506h1v1h-1zM287 506h2v1h-2zM430 506h1v1h-1zM488 506h1v1h-1zM250 507h1v1h-1zM284 507h1v1h-1zM286 507h1v1h-1zM288 507h1v1h-1zM341 507h1v1h-1zM430 507h2v1h-2zM487 507h1v1h-1zM489 507h1v1h-1zM256 508h1v1h-1zM284 508h3v1h-3zM341 508h1v1h-1zM430 508h2v1h-2zM487 508h2v1h-2zM520 508h1v1h-1zM255 509h1v1h-1zM285 509h1v1h-1zM287 509h1v1h-1zM353 509h1v1h-1zM430 509h2v1h-2zM486 509h1v1h-1zM488 509h1v1h-1zM520 509h1v1h-1zM254 510h1v1h-1zM286 510h1v1h-1zM340 510h1v1h-1zM353 510h1v1h-1zM431 510h2v1h-2zM487 510h1v1h-1zM521 510h1v1h-1zM253 511h1v1h-1zM352 511h1v1h-1zM431 511h2v1h-2zM486 511h3v1h-3zM519 511h2v1h-2zM522 511h1v1h-1zM252 512h1v1h-1zM254 512h1v1h-1zM258 512h1v1h-1zM286 512h1v1h-1zM344 512h1v1h-1zM352 512h1v1h-1zM412 512h1v1h-1zM431 512h2v1h-2zM485 512h3v1h-3zM519 512h1v1h-1zM521 512h2v1h-2zM251 513h4v1h-4zM257 513h1v1h-1zM286 513h1v1h-1zM339 513h1v1h-1zM343 513h1v1h-1zM352 513h1v1h-1zM413 513h1v1h-1zM431 513h1v1h-1zM433 513h1v1h-1zM485 513h3v1h-3zM520 513h1v1h-1zM522 513h2v1h-2zM254 514h1v1h-1zM257 514h1v1h-1zM343 514h1v1h-1zM352 514h1v1h-1zM413 514h1v1h-1zM432 514h2v1h-2zM485 514h2v1h-2zM518 514h2v1h-2zM521 514h1v1h-1zM253 515h1v1h-1zM256 515h1v1h-1zM342 515h1v1h-1zM351 515h1v1h-1zM413 515h1v1h-1zM423 515h1v1h-1zM432 515h1v1h-1zM434 515h1v1h-1zM484 515h2v1h-2zM518 515h1v1h-1zM520 515h2v1h-2zM252 516h1v1h-1zM255 516h1v1h-1zM289 516h1v1h-1zM351 516h1v1h-1zM381 516h1v1h-1zM413 516h1v1h-1zM424 516h1v1h-1zM484 516h1v1h-1zM519 516h1v1h-1zM522 516h1v1h-1zM251 517h1v1h-1zM254 517h4v1h-4zM351 517h1v1h-1zM381 517h1v1h-1zM413 517h1v1h-1zM425 517h1v1h-1zM517 517h1v1h-1zM520 517h1v1h-1zM250 518h1v1h-1zM351 518h1v1h-1zM361 518h1v1h-1zM380 518h1v1h-1zM382 518h1v1h-1zM414 518h1v1h-1zM426 518h1v1h-1zM518 518h3v1h-3zM350 519h1v1h-1zM361 519h1v1h-1zM380 519h1v1h-1zM382 519h1v1h-1zM414 519h1v1h-1zM520 519h2v1h-2zM350 520h1v1h-1zM362 520h1v1h-1zM380 520h1v1h-1zM382 520h1v1h-1zM402 520h1v1h-1zM414 520h1v1h-1zM511 520h1v1h-1zM350 521h1v1h-1zM362 521h1v1h-1zM379 521h1v1h-1zM382 521h1v1h-1zM402 521h1v1h-1zM414 521h1v1h-1zM511 521h1v1h-1zM350 522h1v1h-1zM363 522h1v1h-1zM379 522h1v1h-1zM383 522h1v1h-1zM401 522h1v1h-1zM414 522h1v1h-1zM512 522h1v1h-1zM349 523h1v1h-1zM363 523h1v1h-1zM379 523h1v1h-1zM383 523h1v1h-1zM400 523h1v1h-1zM414 523h1v1h-1zM505 523h1v1h-1zM513 523h1v1h-1zM349 524h1v1h-1zM363 524h1v1h-1zM378 524h1v1h-1zM383 524h1v1h-1zM400 524h1v1h-1zM415 524h1v1h-1zM505 524h1v1h-1zM510 524h1v1h-1zM513 524h1v1h-1zM349 525h1v1h-1zM378 525h1v1h-1zM383 525h1v1h-1zM399 525h1v1h-1zM415 525h1v1h-1zM506 525h1v1h-1zM510 525h5v1h-5zM349 526h1v1h-1zM378 526h1v1h-1zM383 526h1v1h-1zM415 526h1v1h-1zM506 526h1v1h-1zM510 526h1v1h-1zM348 527h1v1h-1zM377 527h1v1h-1zM384 527h1v1h-1zM415 527h1v1h-1zM507 527h1v1h-1zM511 527h1v1h-1zM348 528h1v1h-1zM377 528h1v1h-1zM384 528h1v1h-1zM415 528h1v1h-1zM504 528h1v1h-1zM507 528h1v1h-1zM512 528h1v1h-1zM377 529h1v1h-1zM384 529h1v1h-1zM416 529h1v1h-1zM505 529h4v1h-4zM512 529h1v1h-1zM376 530h1v1h-1zM384 530h1v1h-1zM416 530h1v1h-1zM513 530h1v1h-1zM416 531h1v1h-1zM456 535h1v1h-1zM455 536h1v1h-1zM332 546h1v1h-1zM331 547h1v1h-1zM325 548h1v1h-1zM331 548h1v1h-1zM325 549h1v1h-1zM330 549h1v1h-1zM344 549h1v1h-1zM326 550h1v1h-1zM329 550h1v1h-1zM336 550h1v1h-1zM343 550h1v1h-1zM409 550h1v1h-1zM327 551h2v1h-2zM335 551h1v1h-1zM337 551h1v1h-1zM343 551h1v1h-1zM396 551h1v1h-1zM410 551h1v1h-1zM335 552h1v1h-1zM338 552h1v1h-1zM342 552h1v1h-1zM396 552h1v1h-1zM411 552h1v1h-1zM417 552h1v1h-1zM334 553h1v1h-1zM339 553h1v1h-1zM341 553h1v1h-1zM357 553h1v1h-1zM365 553h2v1h-2zM374 553h1v1h-1zM397 553h1v1h-1zM404 553h1v1h-1zM411 553h1v1h-1zM416 553h1v1h-1zM333 554h1v1h-1zM340 554h1v1h-1zM358 554h1v1h-1zM364 554h1v1h-1zM366 554h1v1h-1zM373 554h1v1h-1zM375 554h1v1h-1zM397 554h1v1h-1zM403 554h1v1h-1zM405 554h1v1h-1zM412 554h1v1h-1zM414 554h2v1h-2zM332 555h1v1h-1zM359 555h1v1h-1zM363 555h1v1h-1zM367 555h1v1h-1zM372 555h1v1h-1zM375 555h1v1h-1zM381 555h1v1h-1zM398 555h1v1h-1zM402 555h1v1h-1zM405 555h1v1h-1zM412 555h2v1h-2zM359 556h1v1h-1zM362 556h1v1h-1zM368 556h1v1h-1zM371 556h1v1h-1zM376 556h1v1h-1zM380 556h1v1h-1zM399 556h3v1h-3zM406 556h1v1h-1zM360 557h2v1h-2zM368 557h1v1h-1zM370 557h1v1h-1zM376 557h1v1h-1zM379 557h1v1h-1zM406 557h1v1h-1zM369 558h1v1h-1zM377 558h2v1h-2zM407 558h1v1h-1zM407 559h1v1h-1z"/><path fill="#3e4989" d="M348 466h1v1h-1zM348 467h1v1h-1zM349 468h1v1h-1zM424 468h2v1h-2zM341 469h3v1h-3zM349 469h1v1h-1zM424 469h1v1h-1zM426 469h1v1h-1zM339 470h2v1h-2zM343 470h1v1h-1zM350 470h1v1h-1zM423 470h1v1h-1zM427 470h1v1h-1zM437 470h1v1h-1zM337 471h1v1h-1zM344 471h1v1h-1zM350 471h1v1h-1zM422 471h1v1h-1zM428 471h1v1h-1zM436 471h1v1h-1zM438 471h1v1h-1zM449 471h1v1h-1zM335 472h2v1h-2zM344 472h1v1h-1zM435 472h1v1h-1zM439 472h1v1h-1zM448 472h1v1h-1zM332 473h3v1h-3zM345 473h1v1h-1zM435 473h1v1h-1zM440 473h1v1h-1zM447 473h1v1h-1zM330 474h2v1h-2zM345 474h1v1h-1zM434 474h1v1h-1zM447 474h1v1h-1zM453 474h2v1h-2zM327 475h3v1h-3zM346 475h1v1h-1zM433 475h1v1h-1zM446 475h1v1h-1zM452 475h1v1h-1zM455 475h1v1h-1zM323 476h4v1h-4zM433 476h1v1h-1zM445 476h1v1h-1zM451 476h1v1h-1zM456 476h1v1h-1zM320 477h3v1h-3zM445 477h1v1h-1zM451 477h1v1h-1zM457 477h2v1h-2zM311 478h8v1h-8zM450 478h1v1h-1zM459 478h1v1h-1zM300 479h1v1h-1zM305 479h6v1h-6zM449 479h1v1h-1zM461 479h1v1h-1zM300 480h1v1h-1zM305 480h1v1h-1zM449 480h1v1h-1zM462 480h2v1h-2zM301 481h1v1h-1zM305 481h1v1h-1zM464 481h1v1h-1zM301 482h1v1h-1zM306 482h1v1h-1zM465 482h2v1h-2zM302 483h1v1h-1zM306 483h1v1h-1zM467 483h2v1h-2zM268 484h1v1h-1zM302 484h1v1h-1zM307 484h1v1h-1zM469 484h3v1h-3zM267 485h1v1h-1zM294 485h5v1h-5zM303 485h1v1h-1zM307 485h1v1h-1zM472 485h3v1h-3zM266 486h1v1h-1zM295 486h1v1h-1zM308 486h1v1h-1zM475 486h4v1h-4zM295 487h1v1h-1zM479 487h4v1h-4zM296 488h1v1h-1zM482 488h1v1h-1zM486 488h1v1h-1zM288 489h3v1h-3zM296 489h1v1h-1zM481 489h1v1h-1zM485 489h1v1h-1zM262 490h1v1h-1zM289 490h1v1h-1zM291 490h2v1h-2zM297 490h1v1h-1zM481 490h1v1h-1zM484 490h1v1h-1zM261 491h1v1h-1zM289 491h1v1h-1zM297 491h1v1h-1zM480 491h1v1h-1zM484 491h1v1h-1zM260 492h2v1h-2zM290 492h1v1h-1zM479 492h1v1h-1zM483 492h1v1h-1zM512 492h1v1h-1zM258 493h3v1h-3zM290 493h1v1h-1zM479 493h1v1h-1zM482 493h1v1h-1zM513 493h1v1h-1zM258 494h3v1h-3zM291 494h1v1h-1zM478 494h1v1h-1zM486 494h3v1h-3zM514 494h1v1h-1zM257 495h3v1h-3zM488 495h1v1h-1zM515 495h1v1h-1zM258 496h1v1h-1zM282 496h2v1h-2zM487 496h1v1h-1zM515 496h1v1h-1zM257 497h3v1h-3zM282 497h1v1h-1zM284 497h2v1h-2zM486 497h1v1h-1zM514 497h2v1h-2zM256 498h3v1h-3zM283 498h1v1h-1zM486 498h1v1h-1zM491 498h1v1h-1zM515 498h2v1h-2zM257 499h1v1h-1zM280 499h3v1h-3zM284 499h1v1h-1zM485 499h1v1h-1zM488 499h4v1h-4zM516 499h2v1h-2zM256 500h3v1h-3zM281 500h1v1h-1zM283 500h2v1h-2zM484 500h1v1h-1zM490 500h1v1h-1zM255 501h3v1h-3zM282 501h1v1h-1zM489 501h1v1h-1zM256 502h1v1h-1zM283 502h1v1h-1zM489 502h1v1h-1zM518 502h1v1h-1zM255 503h1v1h-1zM257 503h1v1h-1zM488 503h1v1h-1zM518 503h1v1h-1zM254 504h4v1h-4zM516 504h4v1h-4zM254 505h1v1h-1zM256 505h1v1h-1zM492 505h1v1h-1zM517 505h1v1h-1zM519 505h2v1h-2zM255 506h1v1h-1zM490 506h3v1h-3zM515 506h2v1h-2zM518 506h1v1h-1zM520 506h1v1h-1zM254 507h1v1h-1zM259 507h1v1h-1zM282 507h1v1h-1zM491 507h1v1h-1zM516 507h4v1h-4zM253 508h3v1h-3zM259 508h1v1h-1zM282 508h2v1h-2zM490 508h1v1h-1zM514 508h1v1h-1zM517 508h1v1h-1zM519 508h1v1h-1zM253 509h1v1h-1zM258 509h1v1h-1zM283 509h2v1h-2zM489 509h3v1h-3zM514 509h4v1h-4zM257 510h1v1h-1zM284 510h2v1h-2zM488 510h3v1h-3zM515 510h1v1h-1zM517 510h2v1h-2zM256 511h1v1h-1zM286 511h1v1h-1zM489 511h1v1h-1zM516 511h1v1h-1zM255 512h3v1h-3zM262 512h1v1h-1zM284 512h1v1h-1zM513 512h4v1h-4zM261 513h1v1h-1zM285 513h1v1h-1zM514 513h1v1h-1zM516 513h2v1h-2zM260 514h1v1h-1zM287 514h1v1h-1zM514 514h1v1h-1zM259 515h1v1h-1zM288 515h1v1h-1zM512 515h1v1h-1zM515 515h1v1h-1zM258 516h1v1h-1zM512 516h5v1h-5zM258 517h4v1h-4zM513 517h1v1h-1zM516 517h1v1h-1zM513 518h1v1h-1zM292 519h1v1h-1zM506 519h1v1h-1zM514 519h1v1h-1zM507 520h1v1h-1zM512 520h3v1h-3zM507 521h1v1h-1zM514 521h2v1h-2zM508 522h1v1h-1zM500 523h1v1h-1zM506 523h2v1h-2zM509 523h1v1h-1zM501 524h1v1h-1zM508 524h2v1h-2zM501 525h1v1h-1zM502 526h1v1h-1zM503 527h1v1h-1zM499 528h5v1h-5zM328 543h1v1h-1zM321 544h1v1h-1zM327 544h1v1h-1zM322 545h1v1h-1zM326 545h1v1h-1zM340 545h1v1h-1zM323 546h1v1h-1zM325 546h1v1h-1zM333 546h1v1h-1zM340 546h1v1h-1zM414 546h1v1h-1zM324 547h2v1h-2zM334 547h1v1h-1zM339 547h1v1h-1zM414 547h1v1h-1zM335 548h1v1h-1zM338 548h1v1h-1zM353 548h1v1h-1zM361 548h2v1h-2zM370 548h1v1h-1zM401 548h1v1h-1zM415 548h1v1h-1zM336 549h2v1h-2zM345 549h1v1h-1zM352 549h1v1h-1zM354 549h1v1h-1zM360 549h1v1h-1zM363 549h1v1h-1zM369 549h1v1h-1zM371 549h1v1h-1zM378 549h2v1h-2zM387 549h1v1h-1zM402 549h1v1h-1zM416 549h1v1h-1zM421 549h2v1h-2zM346 550h1v1h-1zM351 550h1v1h-1zM355 550h1v1h-1zM359 550h1v1h-1zM364 550h1v1h-1zM368 550h1v1h-1zM372 550h1v1h-1zM377 550h1v1h-1zM380 550h1v1h-1zM386 550h1v1h-1zM388 550h1v1h-1zM402 550h1v1h-1zM408 550h1v1h-1zM416 550h1v1h-1zM420 550h1v1h-1zM347 551h1v1h-1zM350 551h1v1h-1zM356 551h1v1h-1zM358 551h1v1h-1zM364 551h1v1h-1zM367 551h1v1h-1zM373 551h1v1h-1zM376 551h1v1h-1zM380 551h1v1h-1zM385 551h1v1h-1zM388 551h1v1h-1zM395 551h1v1h-1zM403 551h1v1h-1zM406 551h2v1h-2zM417 551h3v1h-3zM347 552h1v1h-1zM349 552h1v1h-1zM356 552h2v1h-2zM365 552h2v1h-2zM373 552h1v1h-1zM375 552h1v1h-1zM381 552h1v1h-1zM384 552h1v1h-1zM389 552h1v1h-1zM394 552h1v1h-1zM404 552h2v1h-2zM348 553h2v1h-2zM382 553h2v1h-2zM389 553h1v1h-1zM393 553h1v1h-1zM390 554h1v1h-1zM392 554h1v1h-1zM391 555h1v1h-1z"/><path fill="#3d4e8a" d="M349 458h1v1h-1zM339 463h1v1h-1zM352 463h1v1h-1zM429 463h1v1h-1zM340 464h1v1h-1zM350 464h2v1h-2zM353 464h1v1h-1zM421 464h2v1h-2zM428 464h1v1h-1zM340 465h1v1h-1zM349 465h1v1h-1zM423 465h1v1h-1zM427 465h1v1h-1zM335 466h1v1h-1zM341 466h1v1h-1zM347 466h1v1h-1zM424 466h1v1h-1zM426 466h1v1h-1zM441 466h1v1h-1zM330 467h1v1h-1zM336 467h1v1h-1zM342 467h1v1h-1zM345 467h2v1h-2zM424 467h2v1h-2zM433 467h2v1h-2zM440 467h1v1h-1zM330 468h1v1h-1zM336 468h1v1h-1zM342 468h3v1h-3zM432 468h1v1h-1zM435 468h1v1h-1zM439 468h1v1h-1zM445 468h2v1h-2zM325 469h1v1h-1zM331 469h1v1h-1zM337 469h1v1h-1zM431 469h1v1h-1zM436 469h1v1h-1zM438 469h1v1h-1zM444 469h1v1h-1zM447 469h1v1h-1zM457 469h1v1h-1zM320 470h1v1h-1zM326 470h1v1h-1zM331 470h1v1h-1zM337 470h1v1h-1zM430 470h1v1h-1zM444 470h1v1h-1zM448 470h2v1h-2zM456 470h1v1h-1zM321 471h1v1h-1zM326 471h1v1h-1zM332 471h1v1h-1zM429 471h1v1h-1zM443 471h1v1h-1zM450 471h1v1h-1zM455 471h1v1h-1zM461 471h1v1h-1zM316 472h1v1h-1zM321 472h1v1h-1zM327 472h1v1h-1zM333 472h1v1h-1zM442 472h1v1h-1zM451 472h1v1h-1zM454 472h1v1h-1zM460 472h1v1h-1zM306 473h1v1h-1zM311 473h1v1h-1zM316 473h1v1h-1zM322 473h1v1h-1zM327 473h1v1h-1zM441 473h1v1h-1zM452 473h2v1h-2zM459 473h1v1h-1zM465 473h1v1h-1zM301 474h1v1h-1zM306 474h1v1h-1zM312 474h1v1h-1zM317 474h1v1h-1zM322 474h1v1h-1zM328 474h1v1h-1zM459 474h1v1h-1zM464 474h1v1h-1zM283 475h1v1h-1zM302 475h1v1h-1zM307 475h1v1h-1zM312 475h1v1h-1zM317 475h1v1h-1zM323 475h1v1h-1zM458 475h1v1h-1zM463 475h1v1h-1zM281 476h1v1h-1zM302 476h1v1h-1zM308 476h1v1h-1zM313 476h1v1h-1zM318 476h1v1h-1zM457 476h1v1h-1zM463 476h1v1h-1zM468 476h1v1h-1zM279 477h1v1h-1zM303 477h1v1h-1zM308 477h1v1h-1zM313 477h1v1h-1zM319 477h1v1h-1zM462 477h1v1h-1zM467 477h1v1h-1zM472 477h1v1h-1zM304 478h1v1h-1zM309 478h1v1h-1zM461 478h1v1h-1zM466 478h1v1h-1zM471 478h1v1h-1zM276 479h2v1h-2zM296 479h4v1h-4zM301 479h4v1h-4zM466 479h1v1h-1zM471 479h1v1h-1zM476 479h1v1h-1zM274 480h1v1h-1zM291 480h1v1h-1zM295 480h1v1h-1zM465 480h1v1h-1zM470 480h1v1h-1zM475 480h1v1h-1zM273 481h1v1h-1zM291 481h1v1h-1zM296 481h1v1h-1zM469 481h1v1h-1zM474 481h1v1h-1zM479 481h1v1h-1zM483 481h1v1h-1zM271 482h2v1h-2zM292 482h1v1h-1zM297 482h1v1h-1zM468 482h1v1h-1zM473 482h1v1h-1zM478 482h1v1h-1zM483 482h1v1h-1zM270 483h2v1h-2zM293 483h1v1h-1zM297 483h1v1h-1zM473 483h1v1h-1zM477 483h1v1h-1zM482 483h1v1h-1zM486 483h1v1h-1zM269 484h2v1h-2zM285 484h1v1h-1zM290 484h4v1h-4zM298 484h1v1h-1zM472 484h1v1h-1zM476 484h1v1h-1zM481 484h1v1h-1zM485 484h1v1h-1zM285 485h1v1h-1zM290 485h1v1h-1zM476 485h1v1h-1zM480 485h1v1h-1zM484 485h1v1h-1zM267 486h1v1h-1zM286 486h1v1h-1zM290 486h1v1h-1zM479 486h1v1h-1zM484 486h1v1h-1zM504 486h3v1h-3zM265 487h2v1h-2zM287 487h1v1h-1zM291 487h1v1h-1zM483 487h3v1h-3zM506 487h2v1h-2zM264 488h3v1h-3zM284 488h4v1h-4zM291 488h1v1h-1zM487 488h3v1h-3zM507 488h2v1h-2zM263 489h2v1h-2zM284 489h1v1h-1zM287 489h1v1h-1zM292 489h1v1h-1zM489 489h1v1h-1zM493 489h1v1h-1zM507 489h3v1h-3zM263 490h3v1h-3zM285 490h1v1h-1zM293 490h1v1h-1zM488 490h1v1h-1zM492 490h1v1h-1zM508 490h3v1h-3zM262 491h3v1h-3zM285 491h1v1h-1zM488 491h1v1h-1zM491 491h1v1h-1zM510 491h2v1h-2zM262 492h2v1h-2zM283 492h2v1h-2zM286 492h1v1h-1zM487 492h1v1h-1zM490 492h1v1h-1zM511 492h1v1h-1zM261 493h4v1h-4zM283 493h1v1h-1zM285 493h3v1h-3zM486 493h1v1h-1zM489 493h1v1h-1zM491 493h2v1h-2zM512 493h1v1h-1zM262 494h1v1h-1zM284 494h1v1h-1zM485 494h1v1h-1zM489 494h2v1h-2zM492 494h1v1h-1zM496 494h1v1h-1zM510 494h2v1h-2zM513 494h1v1h-1zM261 495h1v1h-1zM284 495h1v1h-1zM491 495h1v1h-1zM495 495h1v1h-1zM511 495h4v1h-4zM260 496h3v1h-3zM285 496h1v1h-1zM347 496h1v1h-1zM490 496h1v1h-1zM494 496h1v1h-1zM512 496h1v1h-1zM261 497h1v1h-1zM286 497h1v1h-1zM346 497h1v1h-1zM490 497h1v1h-1zM493 497h1v1h-1zM260 498h1v1h-1zM346 498h1v1h-1zM489 498h1v1h-1zM492 498h4v1h-4zM514 498h1v1h-1zM259 499h3v1h-3zM346 499h1v1h-1zM494 499h1v1h-1zM512 499h2v1h-2zM515 499h1v1h-1zM261 500h1v1h-1zM346 500h1v1h-1zM423 500h1v1h-1zM493 500h1v1h-1zM513 500h4v1h-4zM260 501h1v1h-1zM279 501h2v1h-2zM345 501h1v1h-1zM423 501h1v1h-1zM492 501h1v1h-1zM494 501h1v1h-1zM511 501h1v1h-1zM514 501h1v1h-1zM516 501h2v1h-2zM258 502h2v1h-2zM280 502h2v1h-2zM345 502h1v1h-1zM423 502h1v1h-1zM491 502h4v1h-4zM512 502h4v1h-4zM258 503h3v1h-3zM278 503h1v1h-1zM281 503h3v1h-3zM345 503h1v1h-1zM424 503h1v1h-1zM491 503h1v1h-1zM493 503h1v1h-1zM513 503h1v1h-1zM515 503h2v1h-2zM259 504h1v1h-1zM279 504h3v1h-3zM345 504h1v1h-1zM424 504h1v1h-1zM492 504h1v1h-1zM510 504h2v1h-2zM513 504h1v1h-1zM258 505h1v1h-1zM278 505h1v1h-1zM280 505h3v1h-3zM344 505h1v1h-1zM424 505h1v1h-1zM491 505h1v1h-1zM511 505h4v1h-4zM257 506h1v1h-1zM279 506h3v1h-3zM344 506h1v1h-1zM424 506h1v1h-1zM512 506h1v1h-1zM256 507h3v1h-3zM260 507h4v1h-4zM281 507h1v1h-1zM344 507h1v1h-1zM424 507h1v1h-1zM509 507h2v1h-2zM513 507h1v1h-1zM262 508h1v1h-1zM344 508h1v1h-1zM368 508h1v1h-1zM425 508h1v1h-1zM510 508h4v1h-4zM261 509h1v1h-1zM281 509h2v1h-2zM343 509h1v1h-1zM347 509h2v1h-2zM368 509h1v1h-1zM395 509h1v1h-1zM425 509h1v1h-1zM510 509h1v1h-1zM260 510h1v1h-1zM281 510h3v1h-3zM343 510h1v1h-1zM346 510h1v1h-1zM368 510h1v1h-1zM395 510h1v1h-1zM425 510h1v1h-1zM508 510h1v1h-1zM511 510h1v1h-1zM259 511h8v1h-8zM282 511h4v1h-4zM343 511h1v1h-1zM368 511h1v1h-1zM395 511h1v1h-1zM425 511h1v1h-1zM490 511h1v1h-1zM508 511h5v1h-5zM265 512h1v1h-1zM283 512h1v1h-1zM343 512h1v1h-1zM357 512h1v1h-1zM367 512h1v1h-1zM395 512h1v1h-1zM418 512h2v1h-2zM425 512h1v1h-1zM488 512h2v1h-2zM509 512h1v1h-1zM265 513h1v1h-1zM269 513h1v1h-1zM284 513h1v1h-1zM342 513h1v1h-1zM358 513h1v1h-1zM367 513h1v1h-1zM395 513h1v1h-1zM420 513h2v1h-2zM426 513h1v1h-1zM488 513h2v1h-2zM510 513h1v1h-1zM264 514h1v1h-1zM268 514h1v1h-1zM285 514h2v1h-2zM342 514h1v1h-1zM358 514h1v1h-1zM367 514h1v1h-1zM396 514h1v1h-1zM407 514h1v1h-1zM426 514h1v1h-1zM487 514h2v1h-2zM507 514h2v1h-2zM511 514h1v1h-1zM263 515h1v1h-1zM267 515h1v1h-1zM287 515h1v1h-1zM359 515h1v1h-1zM367 515h1v1h-1zM396 515h1v1h-1zM406 515h1v1h-1zM426 515h1v1h-1zM486 515h2v1h-2zM507 515h1v1h-1zM509 515h3v1h-3zM262 516h1v1h-1zM266 516h1v1h-1zM287 516h2v1h-2zM360 516h1v1h-1zM366 516h1v1h-1zM396 516h1v1h-1zM406 516h1v1h-1zM426 516h1v1h-1zM485 516h1v1h-1zM508 516h1v1h-1zM262 517h7v1h-7zM289 517h1v1h-1zM366 517h1v1h-1zM396 517h1v1h-1zM405 517h1v1h-1zM426 517h1v1h-1zM509 517h1v1h-1zM366 518h1v1h-1zM396 518h1v1h-1zM404 518h1v1h-1zM483 518h1v1h-1zM501 518h7v1h-7zM509 518h1v1h-1zM366 519h1v1h-1zM396 519h1v1h-1zM481 519h1v1h-1zM502 519h1v1h-1zM508 519h3v1h-3zM365 520h1v1h-1zM397 520h1v1h-1zM502 520h1v1h-1zM365 521h1v1h-1zM397 521h1v1h-1zM503 521h1v1h-1zM365 522h1v1h-1zM397 522h1v1h-1zM476 522h2v1h-2zM496 522h4v1h-4zM501 522h2v1h-2zM504 522h1v1h-1zM365 523h1v1h-1zM397 523h1v1h-1zM474 523h1v1h-1zM491 523h1v1h-1zM496 523h1v1h-1zM503 523h2v1h-2zM364 524h1v1h-1zM397 524h1v1h-1zM491 524h1v1h-1zM496 524h1v1h-1zM364 525h1v1h-1zM398 525h1v1h-1zM492 525h1v1h-1zM497 525h1v1h-1zM398 526h1v1h-1zM493 526h1v1h-1zM498 526h1v1h-1zM490 527h9v1h-9zM312 529h1v1h-1zM321 536h1v1h-1zM320 537h1v1h-1zM313 538h2v1h-2zM319 538h1v1h-1zM315 539h1v1h-1zM318 539h1v1h-1zM325 539h2v1h-2zM402 539h1v1h-1zM316 540h2v1h-2zM324 540h1v1h-1zM327 540h1v1h-1zM317 541h1v1h-1zM323 541h1v1h-1zM328 541h1v1h-1zM337 541h2v1h-2zM318 542h1v1h-1zM322 542h1v1h-1zM329 542h1v1h-1zM336 542h1v1h-1zM339 542h1v1h-1zM424 542h1v1h-1zM319 543h3v1h-3zM330 543h1v1h-1zM335 543h1v1h-1zM340 543h1v1h-1zM418 543h1v1h-1zM425 543h1v1h-1zM431 543h1v1h-1zM331 544h1v1h-1zM334 544h1v1h-1zM341 544h1v1h-1zM349 544h2v1h-2zM357 544h1v1h-1zM359 544h1v1h-1zM366 544h2v1h-2zM375 544h1v1h-1zM405 544h1v1h-1zM416 544h2v1h-2zM419 544h1v1h-1zM426 544h1v1h-1zM429 544h2v1h-2zM332 545h2v1h-2zM342 545h1v1h-1zM348 545h1v1h-1zM351 545h1v1h-1zM356 545h1v1h-1zM359 545h1v1h-1zM365 545h1v1h-1zM368 545h1v1h-1zM373 545h2v1h-2zM376 545h1v1h-1zM383 545h2v1h-2zM403 545h2v1h-2zM406 545h1v1h-1zM415 545h1v1h-1zM420 545h1v1h-1zM426 545h1v1h-1zM428 545h1v1h-1zM343 546h1v1h-1zM347 546h1v1h-1zM352 546h1v1h-1zM355 546h1v1h-1zM360 546h1v1h-1zM363 546h2v1h-2zM369 546h1v1h-1zM372 546h1v1h-1zM377 546h1v1h-1zM381 546h2v1h-2zM385 546h1v1h-1zM391 546h2v1h-2zM402 546h1v1h-1zM407 546h1v1h-1zM413 546h1v1h-1zM420 546h1v1h-1zM426 546h2v1h-2zM343 547h1v1h-1zM346 547h1v1h-1zM353 547h2v1h-2zM361 547h2v1h-2zM370 547h2v1h-2zM378 547h1v1h-1zM380 547h1v1h-1zM385 547h1v1h-1zM390 547h1v1h-1zM393 547h1v1h-1zM400 547h2v1h-2zM407 547h1v1h-1zM412 547h1v1h-1zM421 547h1v1h-1zM424 547h2v1h-2zM344 548h2v1h-2zM378 548h2v1h-2zM386 548h1v1h-1zM389 548h1v1h-1zM394 548h1v1h-1zM399 548h1v1h-1zM408 548h1v1h-1zM410 548h2v1h-2zM422 548h2v1h-2zM388 549h1v1h-1zM394 549h1v1h-1zM398 549h1v1h-1zM409 549h1v1h-1zM395 550h1v1h-1zM397 550h1v1h-1z"/><path fill="#3a538b" d="M349 457h6v1h-6zM418 457h4v1h-4zM343 458h6v1h-6zM351 458h1v1h-1zM354 458h1v1h-1zM421 458h2v1h-2zM424 458h7v1h-7zM335 459h3v1h-3zM341 459h2v1h-2zM347 459h2v1h-2zM419 459h3v1h-3zM428 459h3v1h-3zM433 459h5v1h-5zM329 460h6v1h-6zM342 460h1v1h-1zM346 460h4v1h-4zM426 460h2v1h-2zM434 460h9v1h-9zM324 461h7v1h-7zM336 461h2v1h-2zM343 461h3v1h-3zM350 461h1v1h-1zM424 461h2v1h-2zM427 461h1v1h-1zM432 461h2v1h-2zM436 461h1v1h-1zM441 461h2v1h-2zM445 461h4v1h-4zM320 462h5v1h-5zM331 462h1v1h-1zM338 462h1v1h-1zM341 462h2v1h-2zM345 462h1v1h-1zM351 462h1v1h-1zM420 462h1v1h-1zM423 462h1v1h-1zM428 462h2v1h-2zM431 462h1v1h-1zM437 462h4v1h-4zM448 462h5v1h-5zM316 463h4v1h-4zM326 463h1v1h-1zM332 463h1v1h-1zM338 463h1v1h-1zM340 463h1v1h-1zM345 463h1v1h-1zM353 463h1v1h-1zM421 463h2v1h-2zM430 463h1v1h-1zM437 463h1v1h-1zM439 463h1v1h-1zM445 463h2v1h-2zM453 463h4v1h-4zM312 464h4v1h-4zM319 464h1v1h-1zM327 464h1v1h-1zM333 464h1v1h-1zM335 464h3v1h-3zM346 464h1v1h-1zM431 464h1v1h-1zM436 464h1v1h-1zM440 464h2v1h-2zM443 464h2v1h-2zM450 464h4v1h-4zM457 464h4v1h-4zM309 465h3v1h-3zM314 465h3v1h-3zM322 465h1v1h-1zM328 465h1v1h-1zM333 465h2v1h-2zM347 465h1v1h-1zM432 465h1v1h-1zM434 465h2v1h-2zM442 465h1v1h-1zM449 465h1v1h-1zM452 465h1v1h-1zM456 465h3v1h-3zM462 465h3v1h-3zM306 466h5v1h-5zM317 466h1v1h-1zM323 466h1v1h-1zM329 466h4v1h-4zM433 466h1v1h-1zM443 466h2v1h-2zM447 466h2v1h-2zM453 466h3v1h-3zM462 466h1v1h-1zM464 466h4v1h-4zM302 467h4v1h-4zM312 467h1v1h-1zM318 467h1v1h-1zM324 467h1v1h-1zM327 467h3v1h-3zM445 467h2v1h-2zM453 467h1v1h-1zM455 467h2v1h-2zM460 467h2v1h-2zM468 467h3v1h-3zM299 468h3v1h-3zM305 468h1v1h-1zM307 468h1v1h-1zM313 468h1v1h-1zM318 468h1v1h-1zM324 468h3v1h-3zM452 468h1v1h-1zM457 468h3v1h-3zM465 468h2v1h-2zM468 468h6v1h-6zM297 469h6v1h-6zM308 469h1v1h-1zM313 469h1v1h-1zM319 469h1v1h-1zM321 469h3v1h-3zM451 469h1v1h-1zM458 469h2v1h-2zM464 469h1v1h-1zM470 469h6v1h-6zM294 470h3v1h-3zM303 470h1v1h-1zM309 470h1v1h-1zM314 470h1v1h-1zM317 470h3v1h-3zM450 470h1v1h-1zM460 470h4v1h-4zM469 470h1v1h-1zM476 470h3v1h-3zM291 471h4v1h-4zM298 471h1v1h-1zM304 471h1v1h-1zM310 471h1v1h-1zM312 471h5v1h-5zM462 471h1v1h-1zM467 471h2v1h-2zM475 471h6v1h-6zM289 472h4v1h-4zM299 472h1v1h-1zM305 472h1v1h-1zM307 472h5v1h-5zM463 472h2v1h-2zM466 472h1v1h-1zM472 472h2v1h-2zM481 472h2v1h-2zM287 473h5v1h-5zM293 473h2v1h-2zM300 473h6v1h-6zM466 473h1v1h-1zM471 473h1v1h-1zM477 473h1v1h-1zM479 473h2v1h-2zM483 473h2v1h-2zM285 474h5v1h-5zM295 474h6v1h-6zM467 474h2v1h-2zM470 474h1v1h-1zM476 474h1v1h-1zM483 474h4v1h-4zM284 475h2v1h-2zM292 475h3v1h-3zM297 475h1v1h-1zM469 475h2v1h-2zM474 475h2v1h-2zM480 475h1v1h-1zM487 475h2v1h-2zM282 476h4v1h-4zM292 476h1v1h-1zM297 476h1v1h-1zM471 476h3v1h-3zM479 476h1v1h-1zM485 476h6v1h-6zM280 477h2v1h-2zM287 477h1v1h-1zM293 477h1v1h-1zM298 477h1v1h-1zM473 477h2v1h-2zM478 477h1v1h-1zM483 477h2v1h-2zM491 477h2v1h-2zM278 478h5v1h-5zM288 478h2v1h-2zM294 478h1v1h-1zM299 478h1v1h-1zM475 478h3v1h-3zM482 478h1v1h-1zM488 478h1v1h-1zM490 478h5v1h-5zM278 479h3v1h-3zM283 479h2v1h-2zM288 479h8v1h-8zM477 479h3v1h-3zM481 479h1v1h-1zM486 479h2v1h-2zM495 479h2v1h-2zM275 480h5v1h-5zM282 480h6v1h-6zM480 480h3v1h-3zM485 480h1v1h-1zM491 480h2v1h-2zM494 480h4v1h-4zM274 481h2v1h-2zM281 481h1v1h-1zM286 481h1v1h-1zM484 481h2v1h-2zM489 481h2v1h-2zM498 481h2v1h-2zM273 482h4v1h-4zM282 482h1v1h-1zM287 482h1v1h-1zM486 482h3v1h-3zM494 482h7v1h-7zM274 483h2v1h-2zM277 483h2v1h-2zM283 483h2v1h-2zM288 483h1v1h-1zM489 483h5v1h-5zM498 483h2v1h-2zM501 483h2v1h-2zM271 484h3v1h-3zM280 484h5v1h-5zM286 484h4v1h-4zM490 484h1v1h-1zM492 484h3v1h-3zM496 484h8v1h-8zM268 485h3v1h-3zM272 485h4v1h-4zM281 485h1v1h-1zM489 485h1v1h-1zM494 485h1v1h-1zM501 485h4v1h-4zM268 486h2v1h-2zM272 486h2v1h-2zM276 486h1v1h-1zM281 486h1v1h-1zM488 486h1v1h-1zM493 486h1v1h-1zM498 486h1v1h-1zM500 486h4v1h-4zM267 487h5v1h-5zM277 487h3v1h-3zM282 487h1v1h-1zM487 487h1v1h-1zM491 487h2v1h-2zM496 487h2v1h-2zM504 487h2v1h-2zM268 488h1v1h-1zM272 488h6v1h-6zM279 488h5v1h-5zM490 488h3v1h-3zM494 488h2v1h-2zM501 488h6v1h-6zM266 489h2v1h-2zM270 489h3v1h-3zM275 489h1v1h-1zM280 489h1v1h-1zM494 489h7v1h-7zM503 489h2v1h-2zM506 489h1v1h-1zM266 490h5v1h-5zM276 490h1v1h-1zM281 490h1v1h-1zM497 490h3v1h-3zM505 490h1v1h-1zM266 491h2v1h-2zM271 491h12v1h-12zM495 491h2v1h-2zM500 491h1v1h-1zM503 491h7v1h-7zM265 492h1v1h-1zM269 492h3v1h-3zM274 492h1v1h-1zM278 492h1v1h-1zM282 492h1v1h-1zM494 492h1v1h-1zM498 492h2v1h-2zM508 492h1v1h-1zM510 492h1v1h-1zM265 493h5v1h-5zM275 493h1v1h-1zM279 493h1v1h-1zM493 493h5v1h-5zM503 493h7v1h-7zM265 494h2v1h-2zM270 494h9v1h-9zM280 494h1v1h-1zM497 494h3v1h-3zM501 494h2v1h-2zM506 494h2v1h-2zM264 495h1v1h-1zM268 495h3v1h-3zM272 495h2v1h-2zM277 495h1v1h-1zM279 495h3v1h-3zM498 495h2v1h-2zM508 495h1v1h-1zM263 496h6v1h-6zM274 496h1v1h-1zM278 496h1v1h-1zM497 496h1v1h-1zM502 496h6v1h-6zM509 496h3v1h-3zM265 497h1v1h-1zM269 497h9v1h-9zM279 497h1v1h-1zM496 497h1v1h-1zM500 497h2v1h-2zM505 497h2v1h-2zM510 497h1v1h-1zM512 497h2v1h-2zM263 498h2v1h-2zM267 498h3v1h-3zM271 498h2v1h-2zM276 498h1v1h-1zM278 498h3v1h-3zM496 498h6v1h-6zM504 498h8v1h-8zM262 499h6v1h-6zM273 499h2v1h-2zM277 499h1v1h-1zM345 499h1v1h-1zM497 499h1v1h-1zM501 499h3v1h-3zM508 499h2v1h-2zM511 499h1v1h-1zM264 500h1v1h-1zM268 500h11v1h-11zM345 500h1v1h-1zM496 500h1v1h-1zM499 500h2v1h-2zM504 500h2v1h-2zM510 500h1v1h-1zM263 501h1v1h-1zM267 501h2v1h-2zM276 501h1v1h-1zM344 501h1v1h-1zM424 501h1v1h-1zM495 501h6v1h-6zM503 501h8v1h-8zM261 502h2v1h-2zM265 502h2v1h-2zM272 502h4v1h-4zM277 502h1v1h-1zM344 502h1v1h-1zM424 502h1v1h-1zM496 502h2v1h-2zM500 502h3v1h-3zM508 502h1v1h-1zM261 503h11v1h-11zM274 503h1v1h-1zM276 503h2v1h-2zM344 503h1v1h-1zM425 503h1v1h-1zM495 503h1v1h-1zM498 503h2v1h-2zM503 503h2v1h-2zM509 503h1v1h-1zM263 504h1v1h-1zM267 504h2v1h-2zM275 504h2v1h-2zM343 504h1v1h-1zM425 504h1v1h-1zM494 504h1v1h-1zM496 504h3v1h-3zM502 504h8v1h-8zM262 505h1v1h-1zM266 505h1v1h-1zM271 505h7v1h-7zM426 505h1v1h-1zM493 505h4v1h-4zM499 505h3v1h-3zM507 505h1v1h-1zM260 506h2v1h-2zM264 506h2v1h-2zM269 506h2v1h-2zM274 506h1v1h-1zM278 506h1v1h-1zM369 506h1v1h-1zM427 506h1v1h-1zM494 506h1v1h-1zM497 506h2v1h-2zM502 506h2v1h-2zM508 506h1v1h-1zM264 507h5v1h-5zM274 507h4v1h-4zM279 507h1v1h-1zM369 507h1v1h-1zM427 507h1v1h-1zM493 507h5v1h-5zM501 507h8v1h-8zM266 508h1v1h-1zM269 508h2v1h-2zM272 508h2v1h-2zM277 508h4v1h-4zM350 508h3v1h-3zM369 508h1v1h-1zM394 508h1v1h-1zM428 508h1v1h-1zM492 508h3v1h-3zM498 508h3v1h-3zM505 508h1v1h-1zM265 509h1v1h-1zM269 509h2v1h-2zM278 509h2v1h-2zM354 509h1v1h-1zM370 509h1v1h-1zM394 509h1v1h-1zM493 509h1v1h-1zM496 509h2v1h-2zM501 509h2v1h-2zM506 509h1v1h-1zM264 510h1v1h-1zM268 510h1v1h-1zM273 510h2v1h-2zM277 510h2v1h-2zM280 510h1v1h-1zM355 510h1v1h-1zM370 510h1v1h-1zM393 510h1v1h-1zM491 510h7v1h-7zM500 510h8v1h-8zM267 511h1v1h-1zM271 511h2v1h-2zM281 511h1v1h-1zM356 511h1v1h-1zM370 511h1v1h-1zM393 511h1v1h-1zM412 511h5v1h-5zM492 511h2v1h-2zM499 511h1v1h-1zM504 511h1v1h-1zM267 512h5v1h-5zM276 512h7v1h-7zM371 512h1v1h-1zM392 512h1v1h-1zM410 512h2v1h-2zM490 512h4v1h-4zM500 512h1v1h-1zM505 512h1v1h-1zM272 513h4v1h-4zM281 513h1v1h-1zM371 513h1v1h-1zM392 513h1v1h-1zM408 513h2v1h-2zM490 513h6v1h-6zM501 513h1v1h-1zM506 513h1v1h-1zM272 514h1v1h-1zM275 514h10v1h-10zM371 514h1v1h-1zM391 514h1v1h-1zM489 514h2v1h-2zM498 514h9v1h-9zM271 515h1v1h-1zM276 515h2v1h-2zM284 515h3v1h-3zM372 515h1v1h-1zM391 515h1v1h-1zM488 515h5v1h-5zM498 515h1v1h-1zM503 515h1v1h-1zM270 516h1v1h-1zM275 516h1v1h-1zM282 516h5v1h-5zM372 516h1v1h-1zM391 516h1v1h-1zM486 516h2v1h-2zM489 516h3v1h-3zM493 516h2v1h-2zM499 516h1v1h-1zM504 516h1v1h-1zM269 517h2v1h-2zM273 517h2v1h-2zM279 517h2v1h-2zM287 517h2v1h-2zM372 517h1v1h-1zM390 517h1v1h-1zM484 517h6v1h-6zM495 517h1v1h-1zM500 517h1v1h-1zM505 517h1v1h-1zM271 518h4v1h-4zM277 518h2v1h-2zM284 518h1v1h-1zM287 518h4v1h-4zM390 518h1v1h-1zM484 518h2v1h-2zM490 518h1v1h-1zM492 518h9v1h-9zM275 519h3v1h-3zM282 519h2v1h-2zM291 519h1v1h-1zM482 519h5v1h-5zM492 519h1v1h-1zM497 519h1v1h-1zM278 520h4v1h-4zM286 520h3v1h-3zM291 520h3v1h-3zM480 520h2v1h-2zM487 520h1v1h-1zM493 520h1v1h-1zM498 520h1v1h-1zM281 521h5v1h-5zM293 521h3v1h-3zM478 521h5v1h-5zM488 521h2v1h-2zM494 521h1v1h-1zM499 521h1v1h-1zM284 522h2v1h-2zM289 522h3v1h-3zM295 522h3v1h-3zM478 522h2v1h-2zM483 522h2v1h-2zM489 522h7v1h-7zM500 522h1v1h-1zM286 523h3v1h-3zM295 523h1v1h-1zM297 523h3v1h-3zM475 523h5v1h-5zM483 523h6v1h-6zM288 524h3v1h-3zM292 524h3v1h-3zM299 524h3v1h-3zM472 524h3v1h-3zM481 524h2v1h-2zM486 524h1v1h-1zM291 525h2v1h-2zM298 525h2v1h-2zM302 525h2v1h-2zM470 525h2v1h-2zM473 525h2v1h-2zM476 525h1v1h-1zM482 525h1v1h-1zM487 525h1v1h-1zM293 526h5v1h-5zM304 526h3v1h-3zM467 526h5v1h-5zM477 526h1v1h-1zM483 526h1v1h-1zM488 526h1v1h-1zM295 527h2v1h-2zM301 527h2v1h-2zM306 527h4v1h-4zM464 527h3v1h-3zM472 527h1v1h-1zM478 527h1v1h-1zM484 527h1v1h-1zM487 527h3v1h-3zM297 528h4v1h-4zM306 528h1v1h-1zM308 528h5v1h-5zM462 528h2v1h-2zM467 528h1v1h-1zM473 528h1v1h-1zM479 528h8v1h-8zM299 529h2v1h-2zM304 529h2v1h-2zM313 529h3v1h-3zM459 529h2v1h-2zM462 529h1v1h-1zM468 529h1v1h-1zM474 529h5v1h-5zM301 530h3v1h-3zM310 530h1v1h-1zM312 530h3v1h-3zM316 530h3v1h-3zM455 530h2v1h-2zM463 530h1v1h-1zM469 530h5v1h-5zM303 531h1v1h-1zM308 531h2v1h-2zM315 531h7v1h-7zM452 531h1v1h-1zM457 531h2v1h-2zM464 531h5v1h-5zM304 532h4v1h-4zM313 532h3v1h-3zM322 532h1v1h-1zM324 532h2v1h-2zM448 532h2v1h-2zM452 532h2v1h-2zM459 532h2v1h-2zM462 532h3v1h-3zM306 533h2v1h-2zM312 533h1v1h-1zM316 533h2v1h-2zM319 533h3v1h-3zM327 533h5v1h-5zM443 533h3v1h-3zM454 533h1v1h-1zM458 533h4v1h-4zM308 534h1v1h-1zM310 534h2v1h-2zM317 534h3v1h-3zM325 534h2v1h-2zM332 534h4v1h-4zM437 534h5v1h-5zM448 534h2v1h-2zM455 534h3v1h-3zM309 535h2v1h-2zM316 535h1v1h-1zM320 535h1v1h-1zM323 535h2v1h-2zM330 535h4v1h-4zM336 535h5v1h-5zM431 535h6v1h-6zM443 535h1v1h-1zM450 535h5v1h-5zM311 536h1v1h-1zM315 536h1v1h-1zM322 536h1v1h-1zM329 536h1v1h-1zM331 536h1v1h-1zM337 536h2v1h-2zM341 536h6v1h-6zM348 536h1v1h-1zM426 536h6v1h-6zM438 536h1v1h-1zM444 536h2v1h-2zM448 536h3v1h-3zM312 537h1v1h-1zM314 537h1v1h-1zM323 537h1v1h-1zM327 537h2v1h-2zM332 537h2v1h-2zM335 537h2v1h-2zM343 537h4v1h-4zM350 537h7v1h-7zM415 537h6v1h-6zM425 537h1v1h-1zM432 537h1v1h-1zM439 537h1v1h-1zM445 537h3v1h-3zM324 538h1v1h-1zM326 538h1v1h-1zM333 538h2v1h-2zM341 538h3v1h-3zM350 538h3v1h-3zM357 538h11v1h-11zM370 538h3v1h-3zM401 538h5v1h-5zM408 538h7v1h-7zM417 538h1v1h-1zM420 538h1v1h-1zM426 538h2v1h-2zM429 538h3v1h-3zM434 538h1v1h-1zM440 538h1v1h-1zM443 538h2v1h-2zM332 539h1v1h-1zM335 539h1v1h-1zM340 539h1v1h-1zM344 539h1v1h-1zM348 539h2v1h-2zM352 539h2v1h-2zM356 539h3v1h-3zM360 539h2v1h-2zM365 539h5v1h-5zM373 539h21v1h-21zM398 539h3v1h-3zM407 539h1v1h-1zM413 539h2v1h-2zM421 539h1v1h-1zM427 539h2v1h-2zM435 539h1v1h-1zM440 539h3v1h-3zM331 540h1v1h-1zM336 540h4v1h-4zM345 540h3v1h-3zM354 540h2v1h-2zM362 540h3v1h-3zM370 540h5v1h-5zM378 540h1v1h-1zM382 540h2v1h-2zM385 540h2v1h-2zM392 540h3v1h-3zM400 540h2v1h-2zM408 540h1v1h-1zM412 540h4v1h-4zM422 540h1v1h-1zM424 540h3v1h-3zM429 540h1v1h-1zM436 540h1v1h-1zM438 540h2v1h-2zM330 541h1v1h-1zM345 541h1v1h-1zM347 541h1v1h-1zM353 541h1v1h-1zM355 541h1v1h-1zM361 541h2v1h-2zM364 541h1v1h-1zM370 541h3v1h-3zM379 541h3v1h-3zM387 541h1v1h-1zM389 541h3v1h-3zM395 541h1v1h-1zM399 541h4v1h-4zM409 541h3v1h-3zM416 541h1v1h-1zM422 541h2v1h-2zM430 541h1v1h-1zM436 541h2v1h-2zM344 542h1v1h-1zM348 542h1v1h-1zM352 542h1v1h-1zM356 542h2v1h-2zM360 542h1v1h-1zM365 542h1v1h-1zM369 542h1v1h-1zM373 542h1v1h-1zM378 542h1v1h-1zM381 542h1v1h-1zM387 542h3v1h-3zM396 542h3v1h-3zM403 542h1v1h-1zM408 542h3v1h-3zM417 542h1v1h-1zM420 542h2v1h-2zM431 542h1v1h-1zM433 542h3v1h-3zM342 543h2v1h-2zM349 543h3v1h-3zM358 543h2v1h-2zM366 543h3v1h-3zM374 543h1v1h-1zM376 543h2v1h-2zM382 543h1v1h-1zM386 543h1v1h-1zM389 543h1v1h-1zM396 543h2v1h-2zM404 543h1v1h-1zM406 543h2v1h-2zM411 543h1v1h-1zM419 543h1v1h-1zM432 543h1v1h-1zM383 544h3v1h-3zM390 544h1v1h-1zM394 544h2v1h-2zM398 544h1v1h-1zM412 544h1v1h-1zM391 545h1v1h-1zM393 545h1v1h-1zM399 545h1v1h-1zM413 545h1v1h-1zM399 546h1v1h-1z"/><path fill="#38588c" d="M352 458h2v1h-2zM423 458h1v1h-1zM338 459h3v1h-3zM349 459h3v1h-3zM424 459h2v1h-2zM431 459h2v1h-2zM335 460h3v1h-3zM433 460h1v1h-1zM331 461h4v1h-4zM443 461h2v1h-2zM327 462h4v1h-4zM445 462h3v1h-3zM324 463h2v1h-2zM448 463h2v1h-2zM320 464h4v1h-4zM317 465h3v1h-3zM459 465h3v1h-3zM313 466h4v1h-4zM463 466h1v1h-1zM309 467h3v1h-3zM464 467h2v1h-2zM306 468h1v1h-1zM308 468h1v1h-1zM467 468h1v1h-1zM303 469h3v1h-3zM468 469h2v1h-2zM298 470h4v1h-4zM470 470h2v1h-2zM295 471h3v1h-3zM472 471h3v1h-3zM293 472h2v1h-2zM475 472h2v1h-2zM478 473h1v1h-1zM479 474h2v1h-2zM290 475h2v1h-2zM481 475h2v1h-2zM286 476h4v1h-4zM483 476h2v1h-2zM283 477h3v1h-3zM485 477h3v1h-3zM489 478h1v1h-1zM490 479h2v1h-2zM493 480h1v1h-1zM278 481h3v1h-3zM494 481h2v1h-2zM277 482h1v1h-1zM278 484h2v1h-2zM276 485h2v1h-2zM495 485h2v1h-2zM497 486h1v1h-1zM499 486h1v1h-1zM500 487h1v1h-1zM501 491h2v1h-2zM503 492h2v1h-2zM500 494h1v1h-1zM501 495h3v1h-3zM270 501h2v1h-2zM269 504h2v1h-2zM271 508h1v1h-1zM272 509h3v1h-3zM275 510h2v1h-2zM277 511h2v1h-2zM496 511h3v1h-3zM494 512h2v1h-2zM495 514h3v1h-3zM278 515h2v1h-2zM493 515h2v1h-2zM280 516h2v1h-2zM282 517h2v1h-2zM285 518h2v1h-2zM491 518h1v1h-1zM287 519h2v1h-2zM487 519h4v1h-4zM289 520h2v1h-2zM483 520h4v1h-4zM291 521h2v1h-2zM293 522h2v1h-2zM296 523h1v1h-1zM297 524h2v1h-2zM479 524h2v1h-2zM300 525h2v1h-2zM475 525h1v1h-1zM477 525h2v1h-2zM302 526h2v1h-2zM472 526h3v1h-3zM304 527h2v1h-2zM468 527h3v1h-3zM307 528h1v1h-1zM464 528h3v1h-3zM308 529h2v1h-2zM461 529h1v1h-1zM463 529h1v1h-1zM311 530h1v1h-1zM457 530h4v1h-4zM312 531h2v1h-2zM453 531h4v1h-4zM323 532h1v1h-1zM450 532h2v1h-2zM324 533h3v1h-3zM446 533h4v1h-4zM327 534h2v1h-2zM442 534h4v1h-4zM329 535h1v1h-1zM438 535h4v1h-4zM339 536h2v1h-2zM347 536h1v1h-1zM435 536h3v1h-3zM341 537h2v1h-2zM348 537h2v1h-2zM421 537h4v1h-4zM433 537h2v1h-2zM418 538h2v1h-2zM394 539h4v1h-4zM404 539h3v1h-3zM415 539h3v1h-3zM402 540h2v1h-2z"/><path fill="#365c8d" d="M347 487h1v1h-1zM425 487h1v1h-1zM347 488h1v1h-1zM425 488h2v1h-2zM347 489h1v1h-1zM426 489h1v1h-1zM347 490h1v1h-1zM350 490h1v1h-1zM424 490h1v1h-1zM426 490h1v1h-1zM346 491h1v1h-1zM350 491h1v1h-1zM424 491h3v1h-3zM346 492h1v1h-1zM350 492h1v1h-1zM424 492h4v1h-4zM346 493h1v1h-1zM349 493h1v1h-1zM418 493h1v1h-1zM425 493h1v1h-1zM427 493h1v1h-1zM345 494h2v1h-2zM349 494h1v1h-1zM418 494h1v1h-1zM425 494h3v1h-3zM345 495h1v1h-1zM349 495h1v1h-1zM419 495h1v1h-1zM425 495h4v1h-4zM345 496h1v1h-1zM349 496h1v1h-1zM419 496h1v1h-1zM425 496h4v1h-4zM344 497h2v1h-2zM349 497h1v1h-1zM365 497h1v1h-1zM419 497h1v1h-1zM425 497h1v1h-1zM427 497h2v1h-2zM344 498h2v1h-2zM348 498h1v1h-1zM365 498h1v1h-1zM419 498h1v1h-1zM426 498h4v1h-4zM344 499h1v1h-1zM348 499h1v1h-1zM364 499h1v1h-1zM399 499h1v1h-1zM419 499h1v1h-1zM426 499h1v1h-1zM428 499h2v1h-2zM344 500h1v1h-1zM348 500h1v1h-1zM364 500h1v1h-1zM377 500h1v1h-1zM399 500h1v1h-1zM419 500h1v1h-1zM426 500h1v1h-1zM428 500h2v1h-2zM348 501h1v1h-1zM364 501h1v1h-1zM377 501h2v1h-2zM386 501h1v1h-1zM400 501h1v1h-1zM420 501h1v1h-1zM426 501h1v1h-1zM428 501h1v1h-1zM430 501h1v1h-1zM347 502h1v1h-1zM364 502h1v1h-1zM377 502h2v1h-2zM385 502h2v1h-2zM400 502h1v1h-1zM420 502h1v1h-1zM426 502h1v1h-1zM429 502h2v1h-2zM343 503h1v1h-1zM347 503h1v1h-1zM364 503h1v1h-1zM376 503h1v1h-1zM378 503h1v1h-1zM385 503h2v1h-2zM400 503h1v1h-1zM420 503h1v1h-1zM427 503h1v1h-1zM347 504h1v1h-1zM363 504h1v1h-1zM376 504h1v1h-1zM378 504h1v1h-1zM385 504h1v1h-1zM387 504h1v1h-1zM400 504h1v1h-1zM420 504h1v1h-1zM427 504h1v1h-1zM347 505h1v1h-1zM363 505h1v1h-1zM376 505h1v1h-1zM379 505h1v1h-1zM384 505h1v1h-1zM387 505h1v1h-1zM400 505h1v1h-1zM420 505h1v1h-1zM427 505h1v1h-1zM347 506h1v1h-1zM363 506h1v1h-1zM376 506h1v1h-1zM379 506h1v1h-1zM384 506h1v1h-1zM387 506h1v1h-1zM400 506h1v1h-1zM421 506h1v1h-1zM346 507h1v1h-1zM363 507h1v1h-1zM375 507h1v1h-1zM379 507h1v1h-1zM384 507h1v1h-1zM387 507h1v1h-1zM401 507h1v1h-1zM421 507h1v1h-1zM346 508h1v1h-1zM362 508h1v1h-1zM375 508h1v1h-1zM379 508h1v1h-1zM383 508h1v1h-1zM387 508h1v1h-1zM401 508h1v1h-1zM421 508h1v1h-1zM346 509h1v1h-1zM362 509h1v1h-1zM375 509h1v1h-1zM379 509h1v1h-1zM383 509h1v1h-1zM388 509h1v1h-1zM401 509h1v1h-1zM421 509h1v1h-1zM362 510h1v1h-1zM375 510h1v1h-1zM380 510h1v1h-1zM383 510h1v1h-1zM388 510h1v1h-1zM401 510h1v1h-1zM421 510h1v1h-1zM362 511h1v1h-1zM374 511h1v1h-1zM380 511h1v1h-1zM382 511h1v1h-1zM388 511h1v1h-1zM401 511h1v1h-1zM421 511h1v1h-1zM362 512h1v1h-1zM374 512h1v1h-1zM380 512h1v1h-1zM382 512h1v1h-1zM388 512h1v1h-1zM402 512h1v1h-1zM422 512h1v1h-1zM361 513h1v1h-1zM374 513h1v1h-1zM380 513h1v1h-1zM382 513h1v1h-1zM388 513h1v1h-1zM402 513h1v1h-1zM422 513h1v1h-1zM361 514h1v1h-1zM374 514h1v1h-1zM381 514h1v1h-1zM389 514h1v1h-1zM402 514h1v1h-1zM361 515h1v1h-1zM373 515h1v1h-1zM381 515h1v1h-1zM389 515h1v1h-1zM402 515h1v1h-1zM361 516h1v1h-1zM373 516h1v1h-1zM389 516h1v1h-1zM402 516h1v1h-1zM360 517h1v1h-1zM373 517h1v1h-1zM389 517h1v1h-1zM402 517h1v1h-1zM373 518h1v1h-1zM389 518h1v1h-1zM403 518h1v1h-1zM403 519h1v1h-1z"/><path fill="#32648e" d="M354 486h1v1h-1zM358 486h1v1h-1zM354 487h1v1h-1zM357 487h1v1h-1zM353 488h1v1h-1zM357 488h1v1h-1zM409 488h1v1h-1zM353 489h1v1h-1zM357 489h1v1h-1zM361 489h1v1h-1zM409 489h1v1h-1zM414 489h1v1h-1zM353 490h1v1h-1zM357 490h1v1h-1zM361 490h1v1h-1zM409 490h1v1h-1zM414 490h1v1h-1zM349 491h1v1h-1zM353 491h1v1h-1zM357 491h1v1h-1zM361 491h1v1h-1zM409 491h1v1h-1zM414 491h1v1h-1zM349 492h1v1h-1zM353 492h1v1h-1zM356 492h1v1h-1zM361 492h1v1h-1zM404 492h1v1h-1zM409 492h1v1h-1zM414 492h1v1h-1zM348 493h1v1h-1zM352 493h1v1h-1zM356 493h1v1h-1zM361 493h1v1h-1zM404 493h1v1h-1zM409 493h1v1h-1zM414 493h1v1h-1zM419 493h1v1h-1zM348 494h1v1h-1zM352 494h1v1h-1zM356 494h1v1h-1zM360 494h1v1h-1zM404 494h1v1h-1zM410 494h1v1h-1zM414 494h1v1h-1zM419 494h1v1h-1zM347 495h1v1h-1zM352 495h1v1h-1zM356 495h1v1h-1zM360 495h1v1h-1zM404 495h1v1h-1zM410 495h1v1h-1zM414 495h1v1h-1zM420 495h1v1h-1zM352 496h1v1h-1zM356 496h1v1h-1zM360 496h1v1h-1zM365 496h1v1h-1zM405 496h1v1h-1zM410 496h1v1h-1zM415 496h1v1h-1zM421 496h1v1h-1zM352 497h1v1h-1zM355 497h1v1h-1zM360 497h1v1h-1zM366 497h1v1h-1zM405 497h1v1h-1zM410 497h1v1h-1zM415 497h1v1h-1zM421 497h1v1h-1zM351 498h1v1h-1zM355 498h1v1h-1zM359 498h1v1h-1zM366 498h1v1h-1zM399 498h1v1h-1zM405 498h1v1h-1zM410 498h1v1h-1zM415 498h1v1h-1zM422 498h1v1h-1zM351 499h1v1h-1zM355 499h1v1h-1zM359 499h1v1h-1zM366 499h1v1h-1zM398 499h1v1h-1zM405 499h1v1h-1zM410 499h1v1h-1zM415 499h1v1h-1zM423 499h1v1h-1zM351 500h1v1h-1zM355 500h1v1h-1zM359 500h1v1h-1zM367 500h1v1h-1zM398 500h1v1h-1zM405 500h1v1h-1zM411 500h1v1h-1zM415 500h1v1h-1zM351 501h1v1h-1zM354 501h1v1h-1zM359 501h1v1h-1zM367 501h1v1h-1zM397 501h1v1h-1zM405 501h1v1h-1zM411 501h1v1h-1zM415 501h1v1h-1zM351 502h1v1h-1zM354 502h1v1h-1zM359 502h1v1h-1zM367 502h1v1h-1zM397 502h1v1h-1zM406 502h1v1h-1zM411 502h1v1h-1zM416 502h1v1h-1zM350 503h1v1h-1zM354 503h1v1h-1zM358 503h1v1h-1zM368 503h1v1h-1zM396 503h1v1h-1zM406 503h1v1h-1zM411 503h1v1h-1zM416 503h1v1h-1zM350 504h1v1h-1zM354 504h1v1h-1zM358 504h1v1h-1zM368 504h1v1h-1zM396 504h1v1h-1zM406 504h1v1h-1zM411 504h1v1h-1zM416 504h1v1h-1zM350 505h1v1h-1zM354 505h1v1h-1zM358 505h1v1h-1zM368 505h1v1h-1zM395 505h1v1h-1zM406 505h1v1h-1zM411 505h1v1h-1zM416 505h1v1h-1zM350 506h1v1h-1zM353 506h1v1h-1zM358 506h1v1h-1zM395 506h1v1h-1zM406 506h1v1h-1zM412 506h1v1h-1zM416 506h1v1h-1zM349 507h1v1h-1zM353 507h1v1h-1zM358 507h1v1h-1zM406 507h1v1h-1zM412 507h1v1h-1zM416 507h1v1h-1zM353 508h1v1h-1zM357 508h1v1h-1zM407 508h1v1h-1zM412 508h1v1h-1zM417 508h1v1h-1zM357 509h1v1h-1zM407 509h1v1h-1zM412 509h1v1h-1zM417 509h1v1h-1zM357 510h1v1h-1zM407 510h1v1h-1zM412 510h1v1h-1zM417 510h1v1h-1zM357 511h1v1h-1zM407 511h1v1h-1zM417 511h1v1h-1zM407 512h1v1h-1zM407 513h1v1h-1z"/><path fill="#2f6c8e" d="M351 475h1v1h-1zM351 476h1v1h-1zM351 477h1v1h-1zM351 478h1v1h-1zM350 479h1v1h-1zM419 479h1v1h-1zM350 480h1v1h-1zM420 480h1v1h-1zM424 480h1v1h-1zM350 481h1v1h-1zM420 481h1v1h-1zM350 482h1v1h-1zM420 482h1v1h-1zM350 483h1v1h-1zM420 483h1v1h-1zM349 484h1v1h-1zM420 484h1v1h-1zM425 484h1v1h-1zM349 485h1v1h-1zM420 485h1v1h-1zM349 486h1v1h-1zM373 486h1v1h-1zM421 486h1v1h-1zM349 487h1v1h-1zM373 487h1v1h-1zM391 487h1v1h-1zM421 487h1v1h-1zM348 488h1v1h-1zM373 488h1v1h-1zM391 488h1v1h-1zM421 488h1v1h-1zM348 489h1v1h-1zM373 489h1v1h-1zM391 489h1v1h-1zM421 489h1v1h-1zM348 490h1v1h-1zM372 490h1v1h-1zM391 490h1v1h-1zM421 490h1v1h-1zM348 491h1v1h-1zM372 491h1v1h-1zM391 491h1v1h-1zM421 491h1v1h-1zM348 492h1v1h-1zM372 492h1v1h-1zM392 492h1v1h-1zM422 492h1v1h-1zM347 493h1v1h-1zM372 493h1v1h-1zM392 493h1v1h-1zM422 493h1v1h-1zM347 494h1v1h-1zM372 494h1v1h-1zM392 494h1v1h-1zM422 494h1v1h-1zM371 495h1v1h-1zM392 495h1v1h-1zM422 495h1v1h-1zM371 496h1v1h-1zM392 496h1v1h-1zM422 496h1v1h-1zM371 497h1v1h-1zM392 497h1v1h-1zM423 497h1v1h-1zM371 498h1v1h-1zM393 498h1v1h-1zM423 498h1v1h-1zM370 499h1v1h-1zM393 499h1v1h-1zM370 500h1v1h-1zM393 500h1v1h-1zM370 501h1v1h-1zM393 501h1v1h-1zM370 502h1v1h-1zM393 502h1v1h-1zM370 503h1v1h-1zM394 503h1v1h-1zM369 504h1v1h-1zM394 504h1v1h-1zM369 505h1v1h-1zM394 505h1v1h-1zM394 506h1v1h-1zM394 507h1v1h-1z"/><path fill="#2d708e" d="M353 486h1v1h-1zM352 487h1v1h-1zM351 488h1v1h-1zM350 489h1v1h-1zM362 489h1v1h-1zM362 490h1v1h-1zM415 490h2v1h-2zM363 491h1v1h-1zM404 491h1v1h-1zM417 491h1v1h-1zM363 492h1v1h-1zM403 492h1v1h-1zM418 492h1v1h-1zM364 493h1v1h-1zM402 493h1v1h-1zM364 494h1v1h-1zM402 494h1v1h-1zM401 495h1v1h-1zM400 496h1v1h-1z"/><path fill="#2c738e" d="M352 468h1v1h-1zM352 469h1v1h-1zM352 470h1v1h-1zM420 471h1v1h-1zM351 472h1v1h-1zM421 472h1v1h-1zM351 473h1v1h-1zM421 473h2v1h-2zM351 474h1v1h-1zM421 474h2v1h-2zM421 475h2v1h-2zM350 476h1v1h-1zM421 476h2v1h-2zM350 477h1v1h-1zM422 477h2v1h-2zM350 478h1v1h-1zM422 478h2v1h-2zM420 479h1v1h-1zM422 479h2v1h-2zM349 480h1v1h-1zM422 480h2v1h-2zM349 481h1v1h-1zM422 481h3v1h-3zM349 482h1v1h-1zM382 482h1v1h-1zM421 482h1v1h-1zM423 482h2v1h-2zM349 483h1v1h-1zM382 483h1v1h-1zM421 483h1v1h-1zM423 483h2v1h-2zM348 484h1v1h-1zM381 484h1v1h-1zM383 484h1v1h-1zM422 484h3v1h-3zM348 485h1v1h-1zM355 485h4v1h-4zM381 485h1v1h-1zM383 485h1v1h-1zM422 485h2v1h-2zM425 485h1v1h-1zM348 486h1v1h-1zM359 486h1v1h-1zM374 486h1v1h-1zM381 486h1v1h-1zM383 486h1v1h-1zM391 486h1v1h-1zM423 486h1v1h-1zM425 486h1v1h-1zM360 487h1v1h-1zM374 487h1v1h-1zM381 487h1v1h-1zM383 487h1v1h-1zM390 487h1v1h-1zM423 487h1v1h-1zM361 488h1v1h-1zM374 488h1v1h-1zM380 488h1v1h-1zM383 488h1v1h-1zM390 488h1v1h-1zM408 488h1v1h-1zM410 488h4v1h-4zM423 488h2v1h-2zM375 489h1v1h-1zM380 489h1v1h-1zM384 489h1v1h-1zM390 489h1v1h-1zM406 489h2v1h-2zM424 489h1v1h-1zM375 490h1v1h-1zM380 490h1v1h-1zM384 490h1v1h-1zM389 490h1v1h-1zM405 490h1v1h-1zM375 491h1v1h-1zM380 491h1v1h-1zM384 491h1v1h-1zM389 491h1v1h-1zM375 492h1v1h-1zM379 492h1v1h-1zM384 492h1v1h-1zM389 492h1v1h-1zM376 493h1v1h-1zM379 493h1v1h-1zM384 493h1v1h-1zM388 493h1v1h-1zM376 494h1v1h-1zM379 494h1v1h-1zM385 494h1v1h-1zM388 494h1v1h-1zM376 495h1v1h-1zM379 495h1v1h-1zM385 495h1v1h-1zM388 495h1v1h-1zM376 496h1v1h-1zM378 496h1v1h-1zM385 496h1v1h-1zM387 496h1v1h-1zM377 497h2v1h-2zM385 497h1v1h-1zM387 497h1v1h-1zM377 498h2v1h-2zM385 498h1v1h-1zM387 498h1v1h-1zM377 499h2v1h-2zM386 499h1v1h-1zM386 500h1v1h-1z"/><path fill="#297b8e" d="M355 467h1v1h-1zM355 468h1v1h-1zM355 469h1v1h-1zM414 469h1v1h-1zM354 470h1v1h-1zM415 470h1v1h-1zM354 471h1v1h-1zM415 471h1v1h-1zM354 472h1v1h-1zM415 472h1v1h-1zM354 473h1v1h-1zM415 473h1v1h-1zM354 474h1v1h-1zM415 474h1v1h-1zM353 475h1v1h-1zM370 475h1v1h-1zM415 475h1v1h-1zM353 476h1v1h-1zM369 476h1v1h-1zM396 476h1v1h-1zM416 476h1v1h-1zM353 477h1v1h-1zM369 477h1v1h-1zM396 477h1v1h-1zM416 477h1v1h-1zM353 478h1v1h-1zM369 478h1v1h-1zM396 478h1v1h-1zM416 478h1v1h-1zM352 479h1v1h-1zM369 479h1v1h-1zM396 479h1v1h-1zM416 479h1v1h-1zM352 480h1v1h-1zM368 480h1v1h-1zM396 480h1v1h-1zM416 480h1v1h-1zM352 481h1v1h-1zM368 481h1v1h-1zM396 481h1v1h-1zM416 481h1v1h-1zM352 482h1v1h-1zM368 482h1v1h-1zM397 482h1v1h-1zM417 482h1v1h-1zM352 483h1v1h-1zM368 483h1v1h-1zM397 483h1v1h-1zM417 483h1v1h-1zM351 484h1v1h-1zM368 484h1v1h-1zM397 484h1v1h-1zM417 484h1v1h-1zM351 485h1v1h-1zM367 485h1v1h-1zM397 485h1v1h-1zM417 485h1v1h-1zM351 486h1v1h-1zM367 486h1v1h-1zM397 486h1v1h-1zM417 486h1v1h-1zM351 487h1v1h-1zM367 487h1v1h-1zM397 487h1v1h-1zM417 487h1v1h-1zM367 488h1v1h-1zM398 488h1v1h-1zM417 488h1v1h-1zM367 489h1v1h-1zM398 489h1v1h-1zM418 489h1v1h-1zM366 490h1v1h-1zM398 490h1v1h-1zM418 490h1v1h-1zM366 491h1v1h-1zM398 491h1v1h-1zM418 491h1v1h-1zM366 492h1v1h-1zM398 492h1v1h-1zM366 493h1v1h-1zM398 493h1v1h-1zM366 494h1v1h-1zM398 494h1v1h-1zM365 495h1v1h-1zM399 495h1v1h-1zM399 496h1v1h-1zM399 497h1v1h-1z"/><path fill="#26828e" d="M359 462h1v1h-1zM358 463h1v1h-1zM358 464h1v1h-1zM410 464h1v1h-1zM358 465h1v1h-1zM410 465h1v1h-1zM358 466h1v1h-1zM366 466h1v1h-1zM410 466h1v1h-1zM358 467h1v1h-1zM366 467h1v1h-1zM410 467h1v1h-1zM354 468h1v1h-1zM357 468h1v1h-1zM366 468h1v1h-1zM400 468h1v1h-1zM410 468h1v1h-1zM354 469h1v1h-1zM357 469h1v1h-1zM365 469h1v1h-1zM401 469h1v1h-1zM410 469h1v1h-1zM357 470h1v1h-1zM365 470h1v1h-1zM401 470h1v1h-1zM411 470h1v1h-1zM353 471h1v1h-1zM357 471h1v1h-1zM365 471h1v1h-1zM401 471h1v1h-1zM411 471h1v1h-1zM416 471h1v1h-1zM353 472h1v1h-1zM357 472h1v1h-1zM365 472h1v1h-1zM401 472h1v1h-1zM411 472h1v1h-1zM416 472h1v1h-1zM352 473h1v1h-1zM356 473h1v1h-1zM365 473h1v1h-1zM401 473h1v1h-1zM411 473h1v1h-1zM417 473h1v1h-1zM352 474h1v1h-1zM356 474h1v1h-1zM364 474h1v1h-1zM370 474h1v1h-1zM401 474h1v1h-1zM411 474h1v1h-1zM417 474h1v1h-1zM356 475h1v1h-1zM364 475h1v1h-1zM371 475h1v1h-1zM395 475h1v1h-1zM401 475h1v1h-1zM411 475h1v1h-1zM418 475h1v1h-1zM356 476h1v1h-1zM364 476h1v1h-1zM371 476h1v1h-1zM395 476h1v1h-1zM402 476h1v1h-1zM412 476h1v1h-1zM418 476h1v1h-1zM356 477h1v1h-1zM364 477h1v1h-1zM371 477h1v1h-1zM394 477h1v1h-1zM402 477h1v1h-1zM412 477h1v1h-1zM419 477h1v1h-1zM356 478h1v1h-1zM364 478h1v1h-1zM371 478h1v1h-1zM394 478h1v1h-1zM402 478h1v1h-1zM412 478h1v1h-1zM419 478h1v1h-1zM355 479h1v1h-1zM363 479h1v1h-1zM372 479h1v1h-1zM393 479h1v1h-1zM402 479h1v1h-1zM412 479h1v1h-1zM355 480h1v1h-1zM363 480h1v1h-1zM372 480h1v1h-1zM393 480h1v1h-1zM402 480h1v1h-1zM412 480h1v1h-1zM355 481h1v1h-1zM363 481h1v1h-1zM372 481h1v1h-1zM393 481h1v1h-1zM402 481h1v1h-1zM412 481h1v1h-1zM355 482h1v1h-1zM363 482h1v1h-1zM373 482h1v1h-1zM392 482h1v1h-1zM402 482h1v1h-1zM412 482h1v1h-1zM355 483h1v1h-1zM363 483h1v1h-1zM373 483h1v1h-1zM392 483h1v1h-1zM403 483h1v1h-1zM413 483h1v1h-1zM354 484h1v1h-1zM362 484h1v1h-1zM373 484h1v1h-1zM391 484h1v1h-1zM403 484h1v1h-1zM413 484h1v1h-1zM354 485h1v1h-1zM362 485h1v1h-1zM391 485h1v1h-1zM403 485h1v1h-1zM413 485h1v1h-1zM362 486h1v1h-1zM403 486h1v1h-1zM413 486h1v1h-1zM362 487h1v1h-1zM403 487h1v1h-1zM413 487h1v1h-1zM362 488h1v1h-1zM403 488h1v1h-1zM404 489h1v1h-1zM404 490h1v1h-1z"/><path fill="#24868e" d="M362 461h1v1h-1zM362 462h1v1h-1zM362 463h1v1h-1zM362 464h1v1h-1zM405 464h1v1h-1zM362 465h1v1h-1zM405 465h1v1h-1zM361 466h1v1h-1zM405 466h1v1h-1zM361 467h1v1h-1zM406 467h1v1h-1zM361 468h1v1h-1zM406 468h1v1h-1zM361 469h1v1h-1zM406 469h1v1h-1zM361 470h1v1h-1zM406 470h1v1h-1zM361 471h1v1h-1zM406 471h1v1h-1zM360 472h1v1h-1zM406 472h1v1h-1zM360 473h1v1h-1zM406 473h1v1h-1zM360 474h1v1h-1zM407 474h1v1h-1zM360 475h1v1h-1zM407 475h1v1h-1zM360 476h1v1h-1zM407 476h1v1h-1zM359 477h1v1h-1zM407 477h1v1h-1zM359 478h1v1h-1zM407 478h1v1h-1zM359 479h1v1h-1zM407 479h1v1h-1zM359 480h1v1h-1zM407 480h1v1h-1zM359 481h1v1h-1zM408 481h1v1h-1zM358 482h1v1h-1zM408 482h1v1h-1zM358 483h1v1h-1zM408 483h1v1h-1zM358 484h1v1h-1zM408 484h1v1h-1zM408 485h1v1h-1zM408 486h1v1h-1zM409 487h1v1h-1z"/><path fill="#238a8d" d="M356 455h1v1h-1zM356 456h1v1h-1zM356 457h1v1h-1zM416 457h1v1h-1zM355 458h1v1h-1zM416 458h1v1h-1zM355 459h1v1h-1zM416 459h1v1h-1zM355 460h1v1h-1zM416 460h1v1h-1zM355 461h1v1h-1zM416 461h1v1h-1zM419 461h1v1h-1zM354 462h1v1h-1zM416 462h1v1h-1zM419 462h1v1h-1zM354 463h1v1h-1zM417 463h1v1h-1zM354 464h1v1h-1zM417 464h1v1h-1zM354 465h1v1h-1zM378 465h1v1h-1zM387 465h1v1h-1zM417 465h1v1h-1zM420 465h1v1h-1zM353 466h1v1h-1zM378 466h1v1h-1zM387 466h1v1h-1zM417 466h1v1h-1zM420 466h1v1h-1zM353 467h1v1h-1zM378 467h1v1h-1zM387 467h1v1h-1zM417 467h1v1h-1zM420 467h1v1h-1zM353 468h1v1h-1zM378 468h1v1h-1zM387 468h1v1h-1zM417 468h1v1h-1zM353 469h1v1h-1zM377 469h1v1h-1zM388 469h1v1h-1zM418 469h1v1h-1zM421 469h1v1h-1zM353 470h1v1h-1zM377 470h1v1h-1zM388 470h1v1h-1zM418 470h1v1h-1zM421 470h1v1h-1zM352 471h1v1h-1zM377 471h1v1h-1zM388 471h1v1h-1zM418 471h1v1h-1zM421 471h1v1h-1zM352 472h1v1h-1zM377 472h1v1h-1zM388 472h1v1h-1zM418 472h1v1h-1zM376 473h1v1h-1zM388 473h1v1h-1zM418 473h1v1h-1zM376 474h1v1h-1zM388 474h1v1h-1zM419 474h1v1h-1zM376 475h1v1h-1zM389 475h1v1h-1zM419 475h1v1h-1zM376 476h1v1h-1zM389 476h1v1h-1zM419 476h1v1h-1zM375 477h1v1h-1zM389 477h1v1h-1zM375 478h1v1h-1zM389 478h1v1h-1zM375 479h1v1h-1zM389 479h1v1h-1zM375 480h1v1h-1zM390 480h1v1h-1zM375 481h1v1h-1zM390 481h1v1h-1zM374 482h1v1h-1zM390 482h1v1h-1zM374 483h1v1h-1zM390 483h1v1h-1zM374 484h1v1h-1zM390 484h1v1h-1zM374 485h1v1h-1zM390 485h1v1h-1z"/><path fill="#218e8d" d="M417 454h1v1h-1zM417 455h1v1h-1zM417 456h1v1h-1zM355 457h1v1h-1zM417 457h1v1h-1zM418 458h1v1h-1zM418 459h1v1h-1zM417 460h2v1h-2zM354 461h1v1h-1zM417 461h2v1h-2zM417 462h2v1h-2zM418 463h2v1h-2zM418 464h2v1h-2zM353 465h1v1h-1zM379 465h1v1h-1zM418 465h2v1h-2zM379 466h1v1h-1zM419 466h1v1h-1zM379 467h1v1h-1zM386 467h1v1h-1zM419 467h1v1h-1zM379 468h1v1h-1zM386 468h1v1h-1zM419 468h2v1h-2zM379 469h1v1h-1zM386 469h1v1h-1zM420 469h1v1h-1zM380 470h1v1h-1zM385 470h1v1h-1zM420 470h1v1h-1zM380 471h1v1h-1zM385 471h1v1h-1zM380 472h1v1h-1zM385 472h1v1h-1zM380 473h1v1h-1zM385 473h1v1h-1zM380 474h1v1h-1zM384 474h1v1h-1zM381 475h1v1h-1zM384 475h1v1h-1zM381 476h1v1h-1zM384 476h1v1h-1zM381 477h1v1h-1zM383 477h1v1h-1zM381 478h1v1h-1zM383 478h1v1h-1zM382 479h2v1h-2zM382 480h2v1h-2zM382 481h1v1h-1z"/><path fill="#20928c" d="M358 462h1v1h-1zM357 464h1v1h-1zM356 465h1v1h-1zM366 465h1v1h-1zM411 465h1v1h-1zM355 466h1v1h-1zM367 466h1v1h-1zM412 466h1v1h-1zM367 467h1v1h-1zM400 467h1v1h-1zM413 467h1v1h-1zM368 468h1v1h-1zM399 468h1v1h-1zM414 468h1v1h-1zM368 469h1v1h-1zM398 469h1v1h-1zM369 470h1v1h-1zM398 470h1v1h-1zM369 471h1v1h-1zM397 471h1v1h-1zM369 472h1v1h-1zM397 472h1v1h-1zM396 473h1v1h-1z"/><path fill="#1f968b" d="M359 461h3v1h-3zM363 461h1v1h-1zM364 462h1v1h-1zM365 463h1v1h-1zM404 463h6v1h-6zM403 464h1v1h-1zM402 465h1v1h-1zM401 466h1v1h-1z"/><path fill="#1f9a8a" d="M360 444h1v1h-1zM360 445h1v1h-1zM359 446h1v1h-1zM359 447h1v1h-1zM411 447h1v1h-1zM359 448h1v1h-1zM411 448h1v1h-1zM359 449h1v1h-1zM411 449h1v1h-1zM359 450h1v1h-1zM411 450h1v1h-1zM358 451h1v1h-1zM412 451h1v1h-1zM358 452h1v1h-1zM374 452h1v1h-1zM392 452h1v1h-1zM412 452h1v1h-1zM358 453h1v1h-1zM374 453h1v1h-1zM392 453h1v1h-1zM412 453h1v1h-1zM358 454h1v1h-1zM374 454h1v1h-1zM392 454h1v1h-1zM412 454h1v1h-1zM358 455h1v1h-1zM374 455h1v1h-1zM392 455h1v1h-1zM412 455h1v1h-1zM357 456h1v1h-1zM374 456h1v1h-1zM392 456h1v1h-1zM412 456h1v1h-1zM357 457h1v1h-1zM373 457h1v1h-1zM393 457h1v1h-1zM413 457h1v1h-1zM357 458h1v1h-1zM373 458h1v1h-1zM393 458h1v1h-1zM413 458h1v1h-1zM357 459h1v1h-1zM373 459h1v1h-1zM393 459h1v1h-1zM413 459h1v1h-1zM356 460h1v1h-1zM373 460h1v1h-1zM393 460h1v1h-1zM413 460h1v1h-1zM356 461h1v1h-1zM372 461h1v1h-1zM393 461h1v1h-1zM413 461h1v1h-1zM356 462h1v1h-1zM372 462h1v1h-1zM393 462h1v1h-1zM413 462h1v1h-1zM356 463h1v1h-1zM372 463h1v1h-1zM394 463h1v1h-1zM414 463h1v1h-1zM356 464h1v1h-1zM372 464h1v1h-1zM394 464h1v1h-1zM414 464h1v1h-1zM355 465h1v1h-1zM372 465h1v1h-1zM394 465h1v1h-1zM414 465h1v1h-1zM371 466h1v1h-1zM394 466h1v1h-1zM414 466h1v1h-1zM371 467h1v1h-1zM394 467h1v1h-1zM414 467h1v1h-1zM371 468h1v1h-1zM394 468h1v1h-1zM371 469h1v1h-1zM394 469h1v1h-1zM371 470h1v1h-1zM395 470h1v1h-1zM370 471h1v1h-1zM395 471h1v1h-1zM370 472h1v1h-1zM395 472h1v1h-1zM370 473h1v1h-1zM395 473h1v1h-1zM395 474h1v1h-1z"/><path fill="#1fa187" d="M414 443h1v1h-1zM359 445h1v1h-1zM415 446h1v1h-1zM358 448h1v1h-1zM412 448h1v1h-1zM358 449h1v1h-1zM412 449h1v1h-1zM358 450h1v1h-1zM413 450h1v1h-1zM416 450h1v1h-1zM357 451h1v1h-1zM375 451h1v1h-1zM413 451h1v1h-1zM357 452h1v1h-1zM375 452h1v1h-1zM391 452h1v1h-1zM413 452h1v1h-1zM357 453h1v1h-1zM375 453h1v1h-1zM391 453h1v1h-1zM414 453h1v1h-1zM356 454h1v1h-1zM376 454h1v1h-1zM391 454h1v1h-1zM414 454h1v1h-1zM376 455h1v1h-1zM390 455h1v1h-1zM415 455h1v1h-1zM376 456h1v1h-1zM390 456h1v1h-1zM415 456h1v1h-1zM376 457h1v1h-1zM390 457h1v1h-1zM377 458h1v1h-1zM389 458h1v1h-1zM377 459h1v1h-1zM389 459h1v1h-1zM377 460h1v1h-1zM389 460h1v1h-1zM377 461h1v1h-1zM388 461h1v1h-1zM378 462h1v1h-1zM388 462h1v1h-1zM378 463h1v1h-1zM388 463h1v1h-1z"/><path fill="#21a585" d="M361 436h1v1h-1zM360 438h1v1h-1zM363 438h1v1h-1zM412 438h1v1h-1zM360 439h1v1h-1zM363 439h1v1h-1zM412 439h1v1h-1zM360 440h1v1h-1zM363 440h1v1h-1zM406 440h1v1h-1zM412 440h2v1h-2zM360 441h1v1h-1zM363 441h1v1h-1zM406 441h1v1h-1zM412 441h2v1h-2zM359 442h1v1h-1zM363 442h1v1h-1zM406 442h1v1h-1zM413 442h1v1h-1zM359 443h1v1h-1zM362 443h1v1h-1zM371 443h1v1h-1zM397 443h1v1h-1zM407 443h1v1h-1zM413 443h1v1h-1zM359 444h1v1h-1zM362 444h1v1h-1zM370 444h1v1h-1zM397 444h1v1h-1zM407 444h1v1h-1zM413 444h2v1h-2zM362 445h1v1h-1zM370 445h1v1h-1zM397 445h1v1h-1zM407 445h1v1h-1zM413 445h2v1h-2zM358 446h1v1h-1zM362 446h1v1h-1zM370 446h1v1h-1zM383 446h1v1h-1zM397 446h1v1h-1zM407 446h1v1h-1zM413 446h2v1h-2zM358 447h1v1h-1zM362 447h1v1h-1zM370 447h1v1h-1zM383 447h1v1h-1zM397 447h1v1h-1zM407 447h1v1h-1zM414 447h2v1h-2zM361 448h1v1h-1zM370 448h1v1h-1zM383 448h2v1h-2zM397 448h1v1h-1zM407 448h1v1h-1zM414 448h2v1h-2zM361 449h1v1h-1zM369 449h1v1h-1zM382 449h1v1h-1zM384 449h1v1h-1zM397 449h1v1h-1zM407 449h1v1h-1zM414 449h2v1h-2zM357 450h1v1h-1zM361 450h1v1h-1zM369 450h1v1h-1zM382 450h1v1h-1zM384 450h1v1h-1zM398 450h1v1h-1zM408 450h1v1h-1zM414 450h2v1h-2zM361 451h1v1h-1zM369 451h1v1h-1zM382 451h1v1h-1zM384 451h1v1h-1zM398 451h1v1h-1zM408 451h1v1h-1zM414 451h1v1h-1zM416 451h1v1h-1zM361 452h1v1h-1zM369 452h1v1h-1zM382 452h1v1h-1zM384 452h1v1h-1zM398 452h1v1h-1zM408 452h1v1h-1zM415 452h2v1h-2zM360 453h1v1h-1zM369 453h1v1h-1zM381 453h1v1h-1zM385 453h1v1h-1zM398 453h1v1h-1zM408 453h1v1h-1zM415 453h2v1h-2zM360 454h1v1h-1zM368 454h1v1h-1zM381 454h1v1h-1zM385 454h1v1h-1zM398 454h1v1h-1zM408 454h1v1h-1zM415 454h1v1h-1zM360 455h1v1h-1zM368 455h1v1h-1zM381 455h1v1h-1zM385 455h1v1h-1zM398 455h1v1h-1zM408 455h1v1h-1zM360 456h1v1h-1zM368 456h1v1h-1zM381 456h1v1h-1zM385 456h1v1h-1zM399 456h1v1h-1zM409 456h1v1h-1zM360 457h1v1h-1zM368 457h1v1h-1zM380 457h1v1h-1zM385 457h1v1h-1zM399 457h1v1h-1zM409 457h1v1h-1zM359 458h1v1h-1zM368 458h1v1h-1zM380 458h1v1h-1zM386 458h1v1h-1zM399 458h1v1h-1zM409 458h1v1h-1zM359 459h1v1h-1zM367 459h1v1h-1zM380 459h1v1h-1zM386 459h1v1h-1zM399 459h1v1h-1zM409 459h1v1h-1zM359 460h1v1h-1zM367 460h1v1h-1zM380 460h1v1h-1zM386 460h1v1h-1zM399 460h1v1h-1zM409 460h1v1h-1zM367 461h1v1h-1zM379 461h1v1h-1zM386 461h1v1h-1zM399 461h1v1h-1zM409 461h1v1h-1zM367 462h1v1h-1zM379 462h1v1h-1zM386 462h1v1h-1zM399 462h1v1h-1zM409 462h1v1h-1zM367 463h1v1h-1zM379 463h1v1h-1zM387 463h1v1h-1zM400 463h1v1h-1zM410 463h1v1h-1zM366 464h1v1h-1zM378 464h1v1h-1zM387 464h1v1h-1zM400 464h1v1h-1zM400 465h1v1h-1zM400 466h1v1h-1z"/><path fill="#23a983" d="M367 437h1v1h-1zM367 438h1v1h-1zM367 439h1v1h-1zM401 439h1v1h-1zM367 440h1v1h-1zM402 440h1v1h-1zM366 441h1v1h-1zM402 441h1v1h-1zM366 442h1v1h-1zM402 442h1v1h-1zM366 443h1v1h-1zM402 443h1v1h-1zM366 444h1v1h-1zM402 444h1v1h-1zM366 445h1v1h-1zM402 445h1v1h-1zM365 446h1v1h-1zM402 446h1v1h-1zM365 447h1v1h-1zM403 447h1v1h-1zM365 448h1v1h-1zM403 448h1v1h-1zM365 449h1v1h-1zM403 449h1v1h-1zM365 450h1v1h-1zM403 450h1v1h-1zM364 451h1v1h-1zM403 451h1v1h-1zM364 452h1v1h-1zM403 452h1v1h-1zM364 453h1v1h-1zM403 453h1v1h-1zM364 454h1v1h-1zM404 454h1v1h-1zM364 455h1v1h-1zM404 455h1v1h-1zM363 456h1v1h-1zM404 456h1v1h-1zM363 457h1v1h-1zM404 457h1v1h-1zM363 458h1v1h-1zM404 458h1v1h-1zM363 459h1v1h-1zM404 459h1v1h-1zM363 460h1v1h-1zM405 460h1v1h-1zM405 461h1v1h-1zM405 462h1v1h-1z"/><path fill="#2ab07f" d="M362 440h1v1h-1zM361 441h1v1h-1zM371 441h1v1h-1zM407 441h1v1h-1zM361 442h1v1h-1zM371 442h1v1h-1zM408 442h1v1h-1zM360 443h1v1h-1zM372 443h1v1h-1zM396 443h1v1h-1zM409 443h1v1h-1zM372 444h1v1h-1zM395 444h1v1h-1zM409 444h1v1h-1zM373 445h1v1h-1zM395 445h1v1h-1zM410 445h1v1h-1zM373 446h1v1h-1zM394 446h1v1h-1zM411 446h1v1h-1zM373 447h1v1h-1zM394 447h1v1h-1zM374 448h1v1h-1zM393 448h1v1h-1zM374 449h1v1h-1zM393 449h1v1h-1zM392 450h1v1h-1z"/><path fill="#35b779" d="M364 437h3v1h-3zM368 437h1v1h-1zM369 438h1v1h-1zM401 438h2v1h-2zM369 439h1v1h-1zM400 439h1v1h-1zM403 439h3v1h-3zM370 440h1v1h-1zM399 440h1v1h-1zM398 441h1v1h-1zM397 442h1v1h-1z"/><path fill="#3bbb75" d="M365 424h1v1h-1zM364 425h1v1h-1zM364 426h1v1h-1zM407 426h1v1h-1zM364 427h1v1h-1zM407 427h1v1h-1zM364 428h1v1h-1zM408 428h1v1h-1zM363 429h1v1h-1zM408 429h1v1h-1zM363 430h1v1h-1zM408 430h1v1h-1zM363 431h1v1h-1zM379 431h1v1h-1zM408 431h1v1h-1zM411 431h1v1h-1zM363 432h1v1h-1zM379 432h1v1h-1zM388 432h1v1h-1zM408 432h1v1h-1zM411 432h1v1h-1zM362 433h1v1h-1zM379 433h1v1h-1zM388 433h1v1h-1zM408 433h1v1h-1zM362 434h1v1h-1zM379 434h1v1h-1zM389 434h1v1h-1zM409 434h1v1h-1zM362 435h1v1h-1zM378 435h1v1h-1zM389 435h1v1h-1zM409 435h1v1h-1zM412 435h1v1h-1zM362 436h1v1h-1zM378 436h1v1h-1zM389 436h1v1h-1zM409 436h1v1h-1zM412 436h1v1h-1zM361 437h1v1h-1zM378 437h1v1h-1zM389 437h1v1h-1zM409 437h1v1h-1zM361 438h1v1h-1zM378 438h1v1h-1zM389 438h1v1h-1zM409 438h1v1h-1zM361 439h1v1h-1zM377 439h1v1h-1zM389 439h1v1h-1zM410 439h1v1h-1zM413 439h1v1h-1zM361 440h1v1h-1zM377 440h1v1h-1zM390 440h1v1h-1zM410 440h1v1h-1zM377 441h1v1h-1zM390 441h1v1h-1zM410 441h1v1h-1zM360 442h1v1h-1zM377 442h1v1h-1zM390 442h1v1h-1zM410 442h1v1h-1zM376 443h1v1h-1zM390 443h1v1h-1zM410 443h1v1h-1zM376 444h1v1h-1zM390 444h1v1h-1zM410 444h1v1h-1zM376 445h1v1h-1zM391 445h1v1h-1zM411 445h1v1h-1zM376 446h1v1h-1zM391 446h1v1h-1zM376 447h1v1h-1zM391 447h1v1h-1zM375 448h1v1h-1zM391 448h1v1h-1zM375 449h1v1h-1zM391 449h1v1h-1zM375 450h1v1h-1zM391 450h1v1h-1zM392 451h1v1h-1z"/><path fill="#42be71" d="M408 423h1v1h-1zM364 424h1v1h-1zM409 424h1v1h-1zM409 425h1v1h-1zM409 426h1v1h-1zM408 427h2v1h-2zM363 428h1v1h-1zM410 428h1v1h-1zM409 429h2v1h-2zM409 430h2v1h-2zM362 431h1v1h-1zM380 431h1v1h-1zM388 431h1v1h-1zM409 431h2v1h-2zM362 432h1v1h-1zM380 432h1v1h-1zM387 432h1v1h-1zM410 432h1v1h-1zM380 433h1v1h-1zM387 433h1v1h-1zM410 433h2v1h-2zM361 434h1v1h-1zM380 434h1v1h-1zM387 434h1v1h-1zM410 434h2v1h-2zM361 435h1v1h-1zM381 435h1v1h-1zM387 435h1v1h-1zM411 435h1v1h-1zM381 436h1v1h-1zM386 436h1v1h-1zM411 436h1v1h-1zM381 437h1v1h-1zM386 437h1v1h-1zM412 437h1v1h-1zM381 438h1v1h-1zM386 438h1v1h-1zM382 439h1v1h-1zM385 439h1v1h-1zM382 440h1v1h-1zM385 440h1v1h-1zM382 441h1v1h-1zM385 441h1v1h-1zM382 442h1v1h-1zM384 442h1v1h-1zM383 443h2v1h-2zM383 444h2v1h-2zM383 445h1v1h-1z"/><path fill="#52c569" d="M368 417h1v1h-1zM368 418h1v1h-1zM368 419h1v1h-1zM403 419h1v1h-1zM368 420h1v1h-1zM403 420h1v1h-1zM367 421h1v1h-1zM375 421h1v1h-1zM393 421h1v1h-1zM403 421h1v1h-1zM367 422h1v1h-1zM375 422h1v1h-1zM393 422h1v1h-1zM403 422h1v1h-1zM367 423h1v1h-1zM375 423h1v1h-1zM393 423h1v1h-1zM403 423h1v1h-1zM367 424h1v1h-1zM375 424h1v1h-1zM393 424h1v1h-1zM403 424h1v1h-1zM366 425h1v1h-1zM375 425h1v1h-1zM394 425h1v1h-1zM404 425h1v1h-1zM366 426h1v1h-1zM374 426h1v1h-1zM394 426h1v1h-1zM404 426h1v1h-1zM366 427h1v1h-1zM374 427h1v1h-1zM394 427h1v1h-1zM404 427h1v1h-1zM366 428h1v1h-1zM374 428h1v1h-1zM394 428h1v1h-1zM404 428h1v1h-1zM365 429h1v1h-1zM374 429h1v1h-1zM394 429h1v1h-1zM404 429h1v1h-1zM365 430h1v1h-1zM373 430h1v1h-1zM394 430h1v1h-1zM404 430h1v1h-1zM365 431h1v1h-1zM373 431h1v1h-1zM395 431h1v1h-1zM405 431h1v1h-1zM365 432h1v1h-1zM373 432h1v1h-1zM395 432h1v1h-1zM405 432h1v1h-1zM365 433h1v1h-1zM373 433h1v1h-1zM395 433h1v1h-1zM405 433h1v1h-1zM364 434h1v1h-1zM373 434h1v1h-1zM395 434h1v1h-1zM405 434h1v1h-1zM364 435h1v1h-1zM372 435h1v1h-1zM395 435h1v1h-1zM405 435h1v1h-1zM364 436h1v1h-1zM372 436h1v1h-1zM395 436h1v1h-1zM405 436h1v1h-1zM372 437h1v1h-1zM396 437h1v1h-1zM406 437h1v1h-1zM372 438h1v1h-1zM396 438h1v1h-1zM406 438h1v1h-1zM371 439h1v1h-1zM396 439h1v1h-1zM406 439h1v1h-1zM371 440h1v1h-1zM396 440h1v1h-1zM396 441h1v1h-1zM396 442h1v1h-1z"/><path fill="#5ac864" d="M372 416h1v1h-1zM398 416h1v1h-1zM372 417h1v1h-1zM398 417h1v1h-1zM371 418h1v1h-1zM398 418h1v1h-1zM371 419h1v1h-1zM398 419h1v1h-1zM371 420h1v1h-1zM398 420h1v1h-1zM371 421h1v1h-1zM398 421h1v1h-1zM370 422h1v1h-1zM399 422h1v1h-1zM370 423h1v1h-1zM399 423h1v1h-1zM370 424h1v1h-1zM399 424h1v1h-1zM370 425h1v1h-1zM399 425h1v1h-1zM370 426h1v1h-1zM399 426h1v1h-1zM369 427h1v1h-1zM399 427h1v1h-1zM369 428h1v1h-1zM400 428h1v1h-1zM369 429h1v1h-1zM400 429h1v1h-1zM369 430h1v1h-1zM400 430h1v1h-1zM369 431h1v1h-1zM400 431h1v1h-1zM368 432h1v1h-1zM400 432h1v1h-1zM368 433h1v1h-1zM400 433h1v1h-1zM368 434h1v1h-1zM401 434h1v1h-1zM368 435h1v1h-1zM401 435h1v1h-1zM367 436h1v1h-1zM401 436h1v1h-1zM401 437h1v1h-1z"/><path fill="#65cb5e" d="M367 418h1v1h-1zM403 418h1v1h-1zM367 419h1v1h-1zM366 420h1v1h-1zM376 420h1v1h-1zM404 420h1v1h-1zM366 421h1v1h-1zM376 421h1v1h-1zM392 421h1v1h-1zM404 421h1v1h-1zM365 422h1v1h-1zM377 422h1v1h-1zM392 422h1v1h-1zM405 422h1v1h-1zM365 423h1v1h-1zM377 423h1v1h-1zM391 423h1v1h-1zM406 423h1v1h-1zM377 424h1v1h-1zM391 424h1v1h-1zM406 424h1v1h-1zM378 425h1v1h-1zM391 425h1v1h-1zM407 425h1v1h-1zM378 426h1v1h-1zM390 426h1v1h-1zM378 427h1v1h-1zM390 427h1v1h-1zM379 428h1v1h-1zM389 428h1v1h-1zM379 429h1v1h-1zM389 429h1v1h-1zM379 430h1v1h-1z"/><path fill="#6ece58" d="M369 407h1v1h-1zM369 408h1v1h-1zM369 409h1v1h-1zM403 409h2v1h-2zM369 410h1v1h-1zM404 410h1v1h-1zM368 411h1v1h-1zM404 411h1v1h-1zM368 412h1v1h-1zM404 412h2v1h-2zM368 413h1v1h-1zM404 413h2v1h-2zM367 414h1v1h-1zM384 414h1v1h-1zM405 414h1v1h-1zM367 415h1v1h-1zM384 415h2v1h-2zM405 415h2v1h-2zM367 416h1v1h-1zM384 416h2v1h-2zM405 416h2v1h-2zM367 417h1v1h-1zM383 417h1v1h-1zM385 417h1v1h-1zM405 417h2v1h-2zM366 418h1v1h-1zM383 418h1v1h-1zM385 418h1v1h-1zM405 418h1v1h-1zM407 418h1v1h-1zM366 419h1v1h-1zM383 419h1v1h-1zM385 419h1v1h-1zM406 419h2v1h-2zM382 420h1v1h-1zM386 420h1v1h-1zM406 420h2v1h-2zM365 421h1v1h-1zM382 421h1v1h-1zM386 421h1v1h-1zM406 421h1v1h-1zM408 421h1v1h-1zM382 422h1v1h-1zM386 422h1v1h-1zM406 422h1v1h-1zM408 422h1v1h-1zM382 423h1v1h-1zM386 423h1v1h-1zM407 423h1v1h-1zM381 424h1v1h-1zM387 424h1v1h-1zM407 424h1v1h-1zM381 425h1v1h-1zM387 425h1v1h-1zM381 426h1v1h-1zM387 426h1v1h-1zM380 427h1v1h-1zM387 427h1v1h-1zM380 428h1v1h-1zM387 428h1v1h-1zM380 429h1v1h-1zM388 429h1v1h-1zM380 430h1v1h-1zM388 430h1v1h-1z"/><path fill="#81d34d" d="M370 415h3v1h-3zM369 416h1v1h-1zM373 416h1v1h-1zM397 416h1v1h-1zM399 416h1v1h-1zM374 417h1v1h-1zM396 417h1v1h-1zM400 417h2v1h-2zM375 418h1v1h-1zM395 418h1v1h-1zM402 418h1v1h-1zM375 419h1v1h-1zM394 419h1v1h-1z"/><path fill="#95d840" d="M373 399h1v1h-1zM373 400h1v1h-1zM373 401h1v1h-1zM399 401h1v1h-1zM372 402h1v1h-1zM399 402h1v1h-1zM372 403h1v1h-1zM380 403h1v1h-1zM399 403h1v1h-1zM372 404h1v1h-1zM380 404h1v1h-1zM389 404h1v1h-1zM399 404h1v1h-1zM371 405h1v1h-1zM380 405h1v1h-1zM390 405h1v1h-1zM400 405h1v1h-1zM371 406h1v1h-1zM380 406h1v1h-1zM390 406h1v1h-1zM400 406h1v1h-1zM371 407h1v1h-1zM379 407h1v1h-1zM390 407h1v1h-1zM400 407h1v1h-1zM371 408h1v1h-1zM379 408h1v1h-1zM390 408h1v1h-1zM400 408h1v1h-1zM370 409h1v1h-1zM379 409h1v1h-1zM390 409h1v1h-1zM400 409h1v1h-1zM370 410h1v1h-1zM378 410h1v1h-1zM391 410h1v1h-1zM401 410h1v1h-1zM370 411h1v1h-1zM378 411h1v1h-1zM391 411h1v1h-1zM401 411h1v1h-1zM370 412h1v1h-1zM378 412h1v1h-1zM391 412h1v1h-1zM401 412h1v1h-1zM369 413h1v1h-1zM378 413h1v1h-1zM391 413h1v1h-1zM401 413h1v1h-1zM369 414h1v1h-1zM377 414h1v1h-1zM391 414h1v1h-1zM402 414h1v1h-1zM369 415h1v1h-1zM377 415h1v1h-1zM392 415h1v1h-1zM402 415h1v1h-1zM368 416h1v1h-1zM377 416h1v1h-1zM392 416h1v1h-1zM402 416h1v1h-1zM376 417h1v1h-1zM392 417h1v1h-1zM402 417h1v1h-1zM376 418h1v1h-1zM392 418h1v1h-1zM376 419h1v1h-1zM392 419h1v1h-1zM393 420h1v1h-1z"/><path fill="#a0da39" d="M373 398h1v1h-1zM400 398h1v1h-1zM400 399h1v1h-1zM372 400h1v1h-1zM401 400h1v1h-1zM372 401h1v1h-1zM401 401h1v1h-1zM400 402h2v1h-2zM371 403h1v1h-1zM381 403h1v1h-1zM389 403h1v1h-1zM400 403h1v1h-1zM402 403h1v1h-1zM371 404h1v1h-1zM381 404h1v1h-1zM388 404h1v1h-1zM401 404h2v1h-2zM370 405h1v1h-1zM381 405h1v1h-1zM388 405h1v1h-1zM401 405h2v1h-2zM370 406h1v1h-1zM382 406h1v1h-1zM388 406h1v1h-1zM402 406h2v1h-2zM382 407h1v1h-1zM387 407h1v1h-1zM403 407h1v1h-1zM382 408h1v1h-1zM387 408h1v1h-1zM403 408h1v1h-1zM383 409h1v1h-1zM386 409h1v1h-1zM383 410h1v1h-1zM386 410h1v1h-1zM383 411h1v1h-1zM385 411h1v1h-1zM384 412h2v1h-2zM384 413h2v1h-2z"/><path fill="#aadc32" d="M376 399h1v1h-1zM394 399h1v1h-1zM376 400h1v1h-1zM394 400h1v1h-1zM376 401h1v1h-1zM394 401h1v1h-1zM376 402h1v1h-1zM395 402h1v1h-1zM375 403h1v1h-1zM395 403h1v1h-1zM375 404h1v1h-1zM395 404h1v1h-1zM375 405h1v1h-1zM395 405h1v1h-1zM374 406h1v1h-1zM395 406h1v1h-1zM374 407h1v1h-1zM396 407h1v1h-1zM374 408h1v1h-1zM396 408h1v1h-1zM374 409h1v1h-1zM396 409h1v1h-1zM373 410h1v1h-1zM396 410h1v1h-1zM373 411h1v1h-1zM396 411h1v1h-1zM373 412h1v1h-1zM397 412h1v1h-1zM373 413h1v1h-1zM397 413h1v1h-1zM372 414h1v1h-1zM397 414h1v1h-1zM397 415h1v1h-1z"/><path fill="#c0df25" d="M375 398h3v1h-3zM374 399h1v1h-1zM378 399h1v1h-1zM393 399h1v1h-1zM395 399h3v1h-3zM379 400h1v1h-1zM392 400h1v1h-1zM398 400h1v1h-1zM380 401h1v1h-1zM391 401h1v1h-1zM380 402h1v1h-1zM390 402h1v1h-1z"/><path fill="#d5e21a" d="M378 388h1v1h-1zM377 389h1v1h-1zM395 389h1v1h-1zM377 390h1v1h-1zM395 390h2v1h-2zM376 391h1v1h-1zM385 391h1v1h-1zM396 391h1v1h-1zM376 392h1v1h-1zM385 392h2v1h-2zM396 392h2v1h-2zM376 393h1v1h-1zM384 393h1v1h-1zM386 393h1v1h-1zM396 393h2v1h-2zM375 394h1v1h-1zM384 394h1v1h-1zM386 394h1v1h-1zM397 394h2v1h-2zM375 395h1v1h-1zM384 395h1v1h-1zM387 395h1v1h-1zM397 395h1v1h-1zM399 395h1v1h-1zM374 396h1v1h-1zM383 396h1v1h-1zM387 396h1v1h-1zM397 396h1v1h-1zM399 396h1v1h-1zM374 397h1v1h-1zM383 397h1v1h-1zM387 397h1v1h-1zM398 397h1v1h-1zM400 397h1v1h-1zM374 398h1v1h-1zM382 398h1v1h-1zM388 398h1v1h-1zM398 398h1v1h-1zM382 399h1v1h-1zM388 399h1v1h-1zM398 399h1v1h-1zM382 400h1v1h-1zM388 400h1v1h-1zM399 400h1v1h-1zM381 401h1v1h-1zM388 401h1v1h-1zM381 402h1v1h-1zM389 402h1v1h-1z"/><path fill="#dfe318" d="M381 387h1v1h-1zM390 387h1v1h-1zM381 388h1v1h-1zM391 388h1v1h-1zM380 389h1v1h-1zM391 389h1v1h-1zM380 390h1v1h-1zM391 390h1v1h-1zM379 391h1v1h-1zM392 391h1v1h-1zM379 392h1v1h-1zM392 392h1v1h-1zM379 393h1v1h-1zM392 393h1v1h-1zM378 394h1v1h-1zM393 394h1v1h-1zM378 395h1v1h-1zM393 395h1v1h-1zM377 396h1v1h-1zM393 396h1v1h-1zM377 397h1v1h-1zM393 397h1v1h-1zM394 398h1v1h-1z"/><path fill="#eae51a" d="M382 383h2v1h-2zM381 384h1v1h-1zM392 384h1v1h-1zM380 385h1v1h-1zM393 385h1v1h-1zM379 386h4v1h-4zM391 386h1v1h-1zM393 386h1v1h-1zM378 387h2v1h-2zM383 387h1v1h-1zM389 387h1v1h-1zM392 387h3v1h-3zM383 388h1v1h-1zM388 388h1v1h-1zM394 388h2v1h-2zM384 389h1v1h-1zM387 389h1v1h-1zM385 390h2v1h-2z"/><path fill="#fde725" d="M385 381h3v1h-3zM383 382h3v1h-3zM387 382h4v1h-4zM384 383h1v1h-1zM388 383h1v1h-1zM391 383h1v1h-1zM383 384h1v1h-1zM389 384h1v1h-1zM382 385h1v1h-1zM389 385h1v1h-1zM390 386h1v1h-1z"/></g><g style="font-family:'Liberation Sans',sans-serif;font-size:10px;fill:#333"><text x="164" y="562.9" text-anchor="end">-0.4</text><text x="164" y="536.0" text-anchor="end">-0.2</text><text x="164" y="509.2" text-anchor="end">0</text><text x="164" y="482.3" text-anchor="end">0.2</text><text x="164" y="455.5" text-anchor="end">0.4</text><text x="164" y="428.6" text-anchor="end">0.6</text><text x="164" y="401.7" text-anchor="end">0.8</text><text x="164" y="374.9" text-anchor="end">1</text><text x="165.2" y="566.9" text-anchor="end">10</text><text x="211.4" y="588.3" text-anchor="end">5</text><text x="257.6" y="609.6" text-anchor="end">0</text><text x="303.8" y="631.0" text-anchor="end">-5</text><text x="350.0" y="652.4" text-anchor="end">-10</text><text x="366.0" y="653.1" text-anchor="middle">-10</text><text x="426.4" y="637.0" text-anchor="middle">-5</text><text x="486.6" y="620.2" text-anchor="middle">0</text><text x="546.8" y="604.0" text-anchor="middle">5</text><text x="607.3" y="587.0" text-anchor="middle">10</text><text x="505.2" y="628.6" text-anchor="middle">tx</text><text x="233.1" y="616.2" text-anchor="middle">ty</text><text transform="translate(137.4 464.7) rotate(-90)" text-anchor="middle">tz</text><text x="397.2" y="293.8" text-anchor="middle" style="font-weight:bold;font-size:11px;fill:#000">3-D Sombrero plot</text></g></svg></body></html>
